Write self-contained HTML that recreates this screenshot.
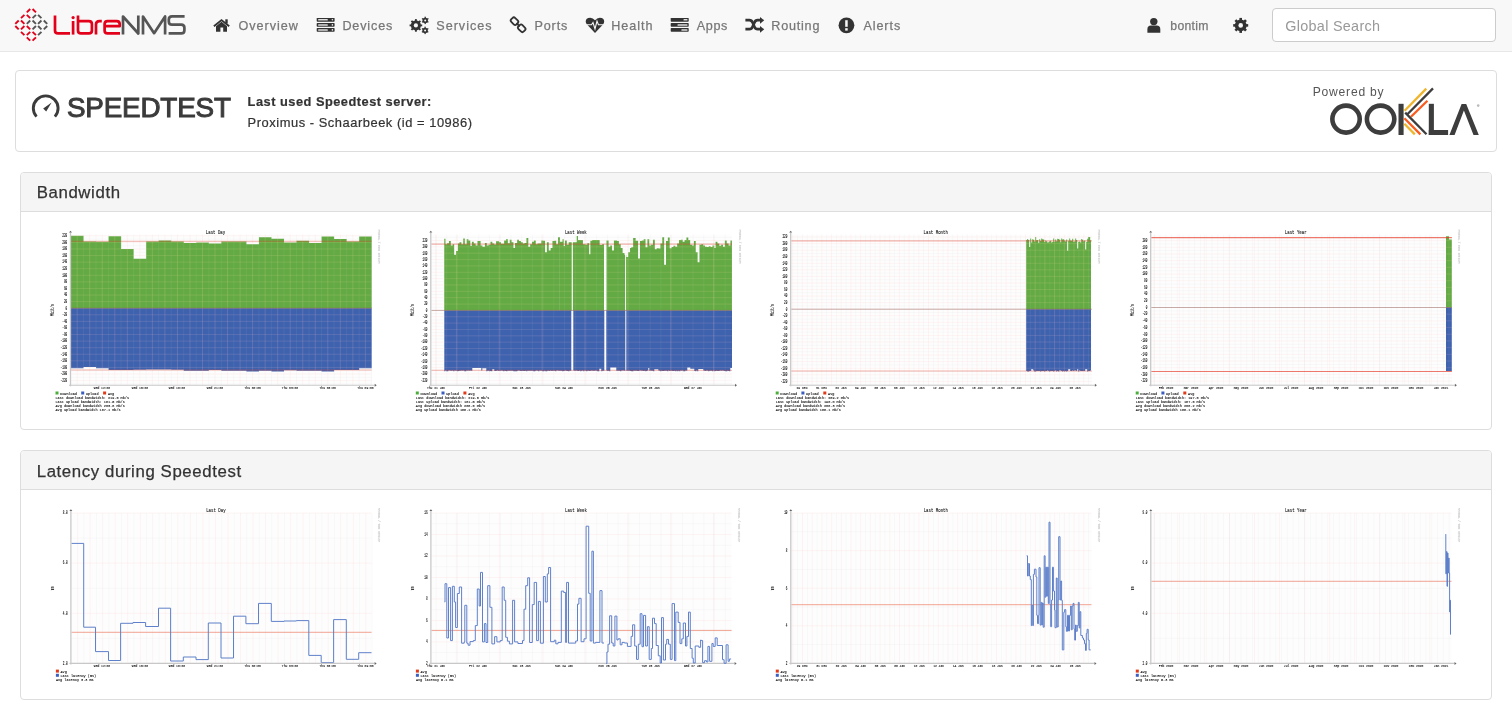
<!DOCTYPE html><html><head><meta charset="utf-8"><title>LibreNMS Speedtest</title><style>
*{margin:0;padding:0;box-sizing:border-box}
html,body{width:1512px;height:726px;overflow:hidden;background:#fff;font-family:"Liberation Sans",sans-serif;color:#333}
.nav{position:absolute;left:0;top:0;width:1512px;height:52px;background:#f8f8f8;border-bottom:1px solid #e7e7e7}
.search{position:absolute;left:1272px;top:8px;width:224px;height:34px;border:1px solid #ccc;border-radius:4px;background:#fff}
.panel{position:absolute;border:1px solid #ddd;border-radius:4px;background:#fff;overflow:hidden}
.ph{position:absolute;left:0;top:0;right:0;height:39px;background:#f5f5f5;border-bottom:1px solid #ddd}
#ov{position:absolute;left:0;top:0;width:1512px;height:726px}
</style></head><body>
<div class="nav"></div><div class="search"></div>
<div class="panel" style="left:15px;top:70px;width:1482px;height:82px"></div>
<div class="panel" style="left:20px;top:172px;width:1472px;height:258px"><div class="ph"></div></div>
<div class="panel" style="left:20px;top:450px;width:1472px;height:250px"><div class="ph"></div></div>
<svg id="ov" width="1512" height="726" viewBox="0 0 1512 726">
<g stroke-width="1.9" stroke-linecap="butt"><line x1="26.8" y1="12.399999999999999" x2="30.2" y2="9.0" stroke="#e2001a"/><line x1="32.55" y1="9.0" x2="35.95" y2="12.399999999999999" stroke="#e2001a"/><line x1="21.0" y1="18.2" x2="24.4" y2="14.8" stroke="#e2001a"/><line x1="26.8" y1="14.8" x2="30.2" y2="18.2" stroke="#e2001a"/><line x1="32.55" y1="18.2" x2="35.95" y2="14.8" stroke="#555"/><line x1="38.05" y1="14.8" x2="41.45" y2="18.2" stroke="#555"/><line x1="15.3" y1="23.9" x2="18.7" y2="20.5" stroke="#e2001a"/><line x1="21.0" y1="20.5" x2="24.4" y2="23.9" stroke="#e2001a"/><line x1="26.8" y1="23.9" x2="30.2" y2="20.5" stroke="#555"/><line x1="32.55" y1="20.5" x2="35.95" y2="23.9" stroke="#555"/><line x1="38.05" y1="23.9" x2="41.45" y2="20.5" stroke="#555"/><line x1="43.8" y1="20.5" x2="47.2" y2="23.9" stroke="#555"/><line x1="15.3" y1="26.0" x2="18.7" y2="29.4" stroke="#e2001a"/><line x1="21.0" y1="29.4" x2="24.4" y2="26.0" stroke="#e2001a"/><line x1="26.8" y1="26.0" x2="30.2" y2="29.4" stroke="#e2001a"/><line x1="32.55" y1="29.4" x2="35.95" y2="26.0" stroke="#555"/><line x1="38.05" y1="26.0" x2="41.45" y2="29.4" stroke="#555"/><line x1="43.8" y1="29.4" x2="47.2" y2="26.0" stroke="#555"/><line x1="21.0" y1="31.8" x2="24.4" y2="35.2" stroke="#e2001a"/><line x1="26.8" y1="35.2" x2="30.2" y2="31.8" stroke="#e2001a"/><line x1="32.55" y1="31.8" x2="35.95" y2="35.2" stroke="#e2001a"/><line x1="38.05" y1="35.2" x2="41.45" y2="31.8" stroke="#555"/><line x1="26.8" y1="37.3" x2="30.2" y2="40.7" stroke="#e2001a"/><line x1="32.55" y1="40.7" x2="35.95" y2="37.3" stroke="#e2001a"/></g>
<g fill="none" stroke-width="2.7" stroke-linecap="butt" stroke-linejoin="round">
<path d="M55 15.5 V30.4 Q55 33.4 58 33.4 H70" stroke="#e2001a"/>
<circle cx="73.1" cy="17.6" r="1.6" fill="#e2001a" stroke="none"/>
<path d="M73.1 21 V34.6" stroke="#e2001a"/>
<path d="M78 15.5 V30.4 Q78 33.4 81 33.4 H88.9 Q91.9 33.4 91.9 30.4 V24.1 Q91.9 21.1 88.9 21.1 H78" stroke="#e2001a"/>
<path d="M96 34.6 V24.6 Q96 21.1 99.5 21.1 H101.8" stroke="#e2001a"/>
<path d="M120 33.4 H107.6 Q104.6 33.4 104.6 30.4 V24.1 Q104.6 21.1 107.6 21.1 H116.7 Q119.7 21.1 119.7 24.1 V26.2 H104.6" stroke="#e2001a"/>
<path d="M123 34.6 V16.5 L138.3 33.5 V15.5" stroke="#555" stroke-linejoin="round"/>
<path d="M143 34.6 V16.5 L154.1 33.2 L165.1 16.5 V34.6" stroke="#555" stroke-linejoin="round"/>
<path d="M184.6 16.4 H172 Q168.8 16.4 168.8 19.6 V21.4 Q168.8 24.6 172 24.6 H181.2 Q184.4 24.6 184.4 27.8 V30.2 Q184.4 33.4 181.2 33.4 H168.6" stroke="#555"/>
</g>
<g fill="#333"><path d="M213.3 25.6 L221.5 18.9 L229.8 25.6 L228.6 27 L221.5 21.2 L214.5 27 Z"/><rect x="225.3" y="19.3" width="2.4" height="4.2"/><path d="M216 26.2 L221.5 21.8 L227 26.2 V31.8 H223.2 V27.4 H220.4 V31.8 H216 Z"/></g>
<rect x="316.7" y="17.9" width="17.900000000000034" height="3.8000000000000007" fill="#333" rx="0.7"/><rect x="318.1" y="19.049999999999997" width="9.699999999999989" height="1.5" fill="#ddd" rx="0.5"/><circle cx="332.4" cy="19.799999999999997" r="0.8" fill="#eee"/><rect x="316.7" y="23.1" width="17.900000000000034" height="3.599999999999998" fill="#333" rx="0.7"/><rect x="318.1" y="24.15" width="9.699999999999989" height="1.5" fill="#ddd" rx="0.5"/><circle cx="332.4" cy="24.9" r="0.8" fill="#eee"/><rect x="316.7" y="28.1" width="17.900000000000034" height="3.599999999999998" fill="#333" rx="0.7"/><rect x="318.1" y="29.15" width="9.699999999999989" height="1.5" fill="#ddd" rx="0.5"/><circle cx="332.4" cy="29.9" r="0.8" fill="#eee"/>
<circle cx="415.9" cy="25.4" r="5.0" fill="#333"/><rect x="414.95" y="19.10" width="1.9" height="6.30" fill="#333" transform="rotate(0.0 415.9 25.4)"/><rect x="414.95" y="19.10" width="1.9" height="6.30" fill="#333" transform="rotate(45.0 415.9 25.4)"/><rect x="414.95" y="19.10" width="1.9" height="6.30" fill="#333" transform="rotate(90.0 415.9 25.4)"/><rect x="414.95" y="19.10" width="1.9" height="6.30" fill="#333" transform="rotate(135.0 415.9 25.4)"/><rect x="414.95" y="19.10" width="1.9" height="6.30" fill="#333" transform="rotate(180.0 415.9 25.4)"/><rect x="414.95" y="19.10" width="1.9" height="6.30" fill="#333" transform="rotate(225.0 415.9 25.4)"/><rect x="414.95" y="19.10" width="1.9" height="6.30" fill="#333" transform="rotate(270.0 415.9 25.4)"/><rect x="414.95" y="19.10" width="1.9" height="6.30" fill="#333" transform="rotate(315.0 415.9 25.4)"/><circle cx="415.9" cy="25.4" r="2.1" fill="#f8f8f8"/>
<circle cx="425.2" cy="20.4" r="2.7" fill="#333"/><rect x="424.55" y="16.70" width="1.3" height="3.70" fill="#333" transform="rotate(0.0 425.2 20.4)"/><rect x="424.55" y="16.70" width="1.3" height="3.70" fill="#333" transform="rotate(60.0 425.2 20.4)"/><rect x="424.55" y="16.70" width="1.3" height="3.70" fill="#333" transform="rotate(120.0 425.2 20.4)"/><rect x="424.55" y="16.70" width="1.3" height="3.70" fill="#333" transform="rotate(180.0 425.2 20.4)"/><rect x="424.55" y="16.70" width="1.3" height="3.70" fill="#333" transform="rotate(240.0 425.2 20.4)"/><rect x="424.55" y="16.70" width="1.3" height="3.70" fill="#333" transform="rotate(300.0 425.2 20.4)"/><circle cx="425.2" cy="20.4" r="1.0" fill="#f8f8f8"/>
<circle cx="425.1" cy="30.4" r="2.7" fill="#333"/><rect x="424.45" y="26.70" width="1.3" height="3.70" fill="#333" transform="rotate(0.0 425.1 30.4)"/><rect x="424.45" y="26.70" width="1.3" height="3.70" fill="#333" transform="rotate(60.0 425.1 30.4)"/><rect x="424.45" y="26.70" width="1.3" height="3.70" fill="#333" transform="rotate(120.0 425.1 30.4)"/><rect x="424.45" y="26.70" width="1.3" height="3.70" fill="#333" transform="rotate(180.0 425.1 30.4)"/><rect x="424.45" y="26.70" width="1.3" height="3.70" fill="#333" transform="rotate(240.0 425.1 30.4)"/><rect x="424.45" y="26.70" width="1.3" height="3.70" fill="#333" transform="rotate(300.0 425.1 30.4)"/><circle cx="425.1" cy="30.4" r="1.0" fill="#f8f8f8"/>
<g fill="none" stroke="#333" stroke-width="1.8"><rect x="511.7" y="17.5" width="5.6" height="7.4" rx="2" transform="rotate(-45 514.5 21.2)"/><rect x="518.9" y="24.6" width="5.6" height="7.4" rx="2" transform="rotate(-45 521.7 28.3)"/><path d="M516.5 23.2 L519.7 26.3"/></g>
<path d="M595 32.9 L587 24.6 Q585.7 23 585.7 21.5 Q585.7 17.7 590.2 17.7 Q593 17.7 595 20.3 Q597 17.7 599.8 17.7 Q604.2 17.7 604.2 21.5 Q604.2 23 603 24.6 Z" fill="#333"/>
<path d="M586.5 24.8 H591.5 L593 22.5 L595 29 L597 21 L598.4 24.8 H603.5" fill="none" stroke="#f8f8f8" stroke-width="1.1"/>
<rect x="670.7" y="17.9" width="18.0" height="3.8000000000000007" fill="#333" rx="0.7"/><rect x="683.5" y="19.049999999999997" width="4.0" height="1.5" fill="#ddd" rx="0.5"/><rect x="670.7" y="23.1" width="18.0" height="3.599999999999998" fill="#333" rx="0.7"/><rect x="677.5" y="24.15" width="10.0" height="1.5" fill="#ddd" rx="0.5"/><rect x="670.7" y="28.1" width="18.0" height="3.599999999999998" fill="#333" rx="0.7"/><rect x="681.4" y="29.15" width="6.100000000000023" height="1.5" fill="#ddd" rx="0.5"/>
<g fill="none" stroke="#333" stroke-width="2.7"><path d="M745.4 20.2 H749.4 Q751.6 20.2 752.6 22.6 L754.4 26.8 Q755.4 29.2 757.6 29.2 H761"/><path d="M745.4 29.2 H749.4 Q751.6 29.2 752.6 26.8 L754.4 22.6 Q755.4 20.2 757.6 20.2 H761"/></g>
<g fill="#333"><path d="M760 16.9 L764.2 20.3 L760 23.8 Z"/><path d="M760 25.9 L764.2 29.3 L760 32.8 Z"/></g>
<circle cx="846.45" cy="25.3" r="7.9" fill="#333"/>
<rect x="845.2" y="20.2" width="2.5" height="6.6" fill="#f8f8f8"/><rect x="845.2" y="28.2" width="2.5" height="2.4" fill="#f8f8f8"/>
<text x="238.4" y="29.8" font-family="Liberation Sans" font-size="12.6" fill="#777" stroke="#777" stroke-width="0.25" textLength="59.5" lengthAdjust="spacing">Overview</text>
<text x="342.4" y="29.8" font-family="Liberation Sans" font-size="12.6" fill="#777" stroke="#777" stroke-width="0.25" textLength="49.9" lengthAdjust="spacing">Devices</text>
<text x="436.3" y="29.8" font-family="Liberation Sans" font-size="12.6" fill="#777" stroke="#777" stroke-width="0.25" textLength="55.2" lengthAdjust="spacing">Services</text>
<text x="534.5" y="29.8" font-family="Liberation Sans" font-size="12.6" fill="#777" stroke="#777" stroke-width="0.25" textLength="32.8" lengthAdjust="spacing">Ports</text>
<text x="611.3" y="29.8" font-family="Liberation Sans" font-size="12.6" fill="#777" stroke="#777" stroke-width="0.25" textLength="41.1" lengthAdjust="spacing">Health</text>
<text x="696.7" y="29.8" font-family="Liberation Sans" font-size="12.6" fill="#777" stroke="#777" stroke-width="0.25" textLength="30.7" lengthAdjust="spacing">Apps</text>
<text x="771.3" y="29.8" font-family="Liberation Sans" font-size="12.6" fill="#777" stroke="#777" stroke-width="0.25" textLength="48.1" lengthAdjust="spacing">Routing</text>
<text x="863.4" y="29.8" font-family="Liberation Sans" font-size="12.6" fill="#777" stroke="#777" stroke-width="0.25" textLength="36.8" lengthAdjust="spacing">Alerts</text>
<circle cx="1153.8" cy="21.6" r="3.7" fill="#333"/>
<path d="M1147.4 32.8 V29.3 Q1147.4 25.6 1151 25.6 H1156.7 Q1160.3 25.6 1160.3 29.3 V32.8 Z" fill="#333"/>
<text x="1170.3" y="29.8" font-family="Liberation Sans" font-size="12.2" fill="#777" stroke="#777" stroke-width="0.25" textLength="38.2" lengthAdjust="spacing">bontim</text>
<circle cx="1240.7" cy="25.4" r="5.9" fill="#333"/><rect x="1239.40" y="17.90" width="2.6" height="7.50" fill="#333" transform="rotate(0.0 1240.7 25.4)"/><rect x="1239.40" y="17.90" width="2.6" height="7.50" fill="#333" transform="rotate(45.0 1240.7 25.4)"/><rect x="1239.40" y="17.90" width="2.6" height="7.50" fill="#333" transform="rotate(90.0 1240.7 25.4)"/><rect x="1239.40" y="17.90" width="2.6" height="7.50" fill="#333" transform="rotate(135.0 1240.7 25.4)"/><rect x="1239.40" y="17.90" width="2.6" height="7.50" fill="#333" transform="rotate(180.0 1240.7 25.4)"/><rect x="1239.40" y="17.90" width="2.6" height="7.50" fill="#333" transform="rotate(225.0 1240.7 25.4)"/><rect x="1239.40" y="17.90" width="2.6" height="7.50" fill="#333" transform="rotate(270.0 1240.7 25.4)"/><rect x="1239.40" y="17.90" width="2.6" height="7.50" fill="#333" transform="rotate(315.0 1240.7 25.4)"/><circle cx="1240.7" cy="25.4" r="2.3" fill="#f8f8f8"/>
<text x="1285.3" y="30.8" font-family="Liberation Sans" font-size="14.4" fill="#999" textLength="94.7" lengthAdjust="spacing">Global Search</text>
<path d="M36.5 116.6 A12.4 12.4 0 1 1 54.9 116.6" fill="none" stroke="#3b3b3b" stroke-width="2.9" stroke-linecap="butt"/>
<path d="M43.2 108.6 L51.6 102.4 L46.2 111.4 Z" fill="#3b3b3b"/>
<text x="66.9" y="117" font-family="Liberation Sans" font-size="27.8" font-weight="normal" fill="#3b3b3b" stroke="#3b3b3b" stroke-width="1.0" textLength="164.0" lengthAdjust="spacing">SPEEDTEST</text>
<text x="247.6" y="105.5" font-family="Liberation Sans" font-size="12.8" font-weight="bold" fill="#333" stroke="#333" stroke-width="0.2" textLength="183.7" lengthAdjust="spacing">Last used Speedtest server:</text>
<text x="247.6" y="126.9" font-family="Liberation Sans" font-size="12.9" fill="#333" stroke="#333" stroke-width="0.2" textLength="224.4" lengthAdjust="spacing">Proximus - Schaarbeek (id = 10986)</text>
<text x="1312.7" y="96.4" font-family="Liberation Sans" font-size="12.1" fill="#555" textLength="70.9" lengthAdjust="spacing">Powered by</text>
<g fill="none" stroke-width="4.6"><ellipse cx="1346.05" cy="119.1" rx="13.7" ry="13.5" stroke="#3d3d3d"/><ellipse cx="1380.6" cy="119.1" rx="13.7" ry="13.5" stroke="#3d3d3d"/></g>
<rect x="1398.5" y="103.8" width="5.1" height="31.2" fill="#3d3d3d"/>
<rect x="1428.8" y="103.8" width="5.1" height="31.2" fill="#3d3d3d"/><rect x="1428.8" y="130" width="19.3" height="5" fill="#3d3d3d"/>
<path d="M1449.4 135 L1461.6 104 H1466.2 L1478.8 135 H1473.5 L1463.9 110.6 L1454.6 135 Z" fill="#3d3d3d"/>
<circle cx="1478.2" cy="105.6" r="1.3" fill="#bbb"/>
<g stroke-width="2.3" stroke-linecap="butt"><line x1="1404.6" y1="110.8" x2="1426.3" y2="88.6" stroke="#efb52d"/><line x1="1407.4" y1="114.2" x2="1433" y2="88.4" stroke="#3d3d3d"/><line x1="1411.0" y1="116.8" x2="1427.4" y2="100.8" stroke="#fa5b1e"/><line x1="1405.2" y1="112.6" x2="1426.5" y2="134.2" stroke="#3d3d3d"/><line x1="1404.4" y1="118.2" x2="1420.4" y2="134.4" stroke="#fa5b1e"/><line x1="1404.4" y1="123.8" x2="1414.8" y2="134.4" stroke="#efb52d"/></g>
<text x="36.7" y="197.8" font-family="Liberation Sans" font-size="16.8" fill="#333" stroke="#333" stroke-width="0.25" textLength="83.3" lengthAdjust="spacing">Bandwidth</text>
<text x="36.7" y="477" font-family="Liberation Sans" font-size="16.8" fill="#333" stroke="#333" stroke-width="0.25" textLength="204.4" lengthAdjust="spacing">Latency during Speedtest</text>
<rect x="71.0" y="234.5" width="300.7" height="150.8" fill="#fdfdfd"/><line x1="83.47" y1="234.5" x2="83.47" y2="385.3" stroke="rgba(0,0,0,0.03)" stroke-width="0.8"/><line x1="96.00" y1="234.5" x2="96.00" y2="385.3" stroke="rgba(0,0,0,0.03)" stroke-width="0.8"/><line x1="108.53" y1="234.5" x2="108.53" y2="385.3" stroke="rgba(0,0,0,0.03)" stroke-width="0.8"/><line x1="121.06" y1="234.5" x2="121.06" y2="385.3" stroke="rgba(0,0,0,0.03)" stroke-width="0.8"/><line x1="133.59" y1="234.5" x2="133.59" y2="385.3" stroke="rgba(0,0,0,0.03)" stroke-width="0.8"/><line x1="146.12" y1="234.5" x2="146.12" y2="385.3" stroke="rgba(0,0,0,0.03)" stroke-width="0.8"/><line x1="158.65" y1="234.5" x2="158.65" y2="385.3" stroke="rgba(0,0,0,0.03)" stroke-width="0.8"/><line x1="171.18" y1="234.5" x2="171.18" y2="385.3" stroke="rgba(0,0,0,0.03)" stroke-width="0.8"/><line x1="183.71" y1="234.5" x2="183.71" y2="385.3" stroke="rgba(0,0,0,0.03)" stroke-width="0.8"/><line x1="196.24" y1="234.5" x2="196.24" y2="385.3" stroke="rgba(0,0,0,0.03)" stroke-width="0.8"/><line x1="208.77" y1="234.5" x2="208.77" y2="385.3" stroke="rgba(0,0,0,0.03)" stroke-width="0.8"/><line x1="221.30" y1="234.5" x2="221.30" y2="385.3" stroke="rgba(0,0,0,0.03)" stroke-width="0.8"/><line x1="233.83" y1="234.5" x2="233.83" y2="385.3" stroke="rgba(0,0,0,0.03)" stroke-width="0.8"/><line x1="246.36" y1="234.5" x2="246.36" y2="385.3" stroke="rgba(0,0,0,0.03)" stroke-width="0.8"/><line x1="258.89" y1="234.5" x2="258.89" y2="385.3" stroke="rgba(0,0,0,0.03)" stroke-width="0.8"/><line x1="271.42" y1="234.5" x2="271.42" y2="385.3" stroke="rgba(0,0,0,0.03)" stroke-width="0.8"/><line x1="283.95" y1="234.5" x2="283.95" y2="385.3" stroke="rgba(0,0,0,0.03)" stroke-width="0.8"/><line x1="296.48" y1="234.5" x2="296.48" y2="385.3" stroke="rgba(0,0,0,0.03)" stroke-width="0.8"/><line x1="309.01" y1="234.5" x2="309.01" y2="385.3" stroke="rgba(0,0,0,0.03)" stroke-width="0.8"/><line x1="321.54" y1="234.5" x2="321.54" y2="385.3" stroke="rgba(0,0,0,0.03)" stroke-width="0.8"/><line x1="334.07" y1="234.5" x2="334.07" y2="385.3" stroke="rgba(0,0,0,0.03)" stroke-width="0.8"/><line x1="346.60" y1="234.5" x2="346.60" y2="385.3" stroke="rgba(0,0,0,0.03)" stroke-width="0.8"/><line x1="359.13" y1="234.5" x2="359.13" y2="385.3" stroke="rgba(0,0,0,0.03)" stroke-width="0.8"/><line x1="371.66" y1="234.5" x2="371.66" y2="385.3" stroke="rgba(0,0,0,0.03)" stroke-width="0.8"/><line x1="71.0" y1="383.87" x2="371.7" y2="383.87" stroke="rgba(0,0,0,0.03)" stroke-width="0.8"/><line x1="71.0" y1="377.29" x2="371.7" y2="377.29" stroke="rgba(0,0,0,0.03)" stroke-width="0.8"/><line x1="71.0" y1="370.71" x2="371.7" y2="370.71" stroke="rgba(0,0,0,0.03)" stroke-width="0.8"/><line x1="71.0" y1="364.13" x2="371.7" y2="364.13" stroke="rgba(0,0,0,0.03)" stroke-width="0.8"/><line x1="71.0" y1="357.55" x2="371.7" y2="357.55" stroke="rgba(0,0,0,0.03)" stroke-width="0.8"/><line x1="71.0" y1="350.97" x2="371.7" y2="350.97" stroke="rgba(0,0,0,0.03)" stroke-width="0.8"/><line x1="71.0" y1="344.39" x2="371.7" y2="344.39" stroke="rgba(0,0,0,0.03)" stroke-width="0.8"/><line x1="71.0" y1="337.81" x2="371.7" y2="337.81" stroke="rgba(0,0,0,0.03)" stroke-width="0.8"/><line x1="71.0" y1="331.23" x2="371.7" y2="331.23" stroke="rgba(0,0,0,0.03)" stroke-width="0.8"/><line x1="71.0" y1="324.65" x2="371.7" y2="324.65" stroke="rgba(0,0,0,0.03)" stroke-width="0.8"/><line x1="71.0" y1="318.07" x2="371.7" y2="318.07" stroke="rgba(0,0,0,0.03)" stroke-width="0.8"/><line x1="71.0" y1="311.49" x2="371.7" y2="311.49" stroke="rgba(0,0,0,0.03)" stroke-width="0.8"/><line x1="71.0" y1="304.91" x2="371.7" y2="304.91" stroke="rgba(0,0,0,0.03)" stroke-width="0.8"/><line x1="71.0" y1="298.33" x2="371.7" y2="298.33" stroke="rgba(0,0,0,0.03)" stroke-width="0.8"/><line x1="71.0" y1="291.75" x2="371.7" y2="291.75" stroke="rgba(0,0,0,0.03)" stroke-width="0.8"/><line x1="71.0" y1="285.17" x2="371.7" y2="285.17" stroke="rgba(0,0,0,0.03)" stroke-width="0.8"/><line x1="71.0" y1="278.59" x2="371.7" y2="278.59" stroke="rgba(0,0,0,0.03)" stroke-width="0.8"/><line x1="71.0" y1="272.01" x2="371.7" y2="272.01" stroke="rgba(0,0,0,0.03)" stroke-width="0.8"/><line x1="71.0" y1="265.43" x2="371.7" y2="265.43" stroke="rgba(0,0,0,0.03)" stroke-width="0.8"/><line x1="71.0" y1="258.85" x2="371.7" y2="258.85" stroke="rgba(0,0,0,0.03)" stroke-width="0.8"/><line x1="71.0" y1="252.27" x2="371.7" y2="252.27" stroke="rgba(0,0,0,0.03)" stroke-width="0.8"/><line x1="71.0" y1="245.69" x2="371.7" y2="245.69" stroke="rgba(0,0,0,0.03)" stroke-width="0.8"/><line x1="71.0" y1="239.11" x2="371.7" y2="239.11" stroke="rgba(0,0,0,0.03)" stroke-width="0.8"/><line x1="77.20" y1="234.5" x2="77.20" y2="385.3" stroke="rgba(255,0,0,0.055)" stroke-width="0.8"/><line x1="89.73" y1="234.5" x2="89.73" y2="385.3" stroke="rgba(255,0,0,0.055)" stroke-width="0.8"/><line x1="102.26" y1="234.5" x2="102.26" y2="385.3" stroke="rgba(255,0,0,0.055)" stroke-width="0.8"/><line x1="114.79" y1="234.5" x2="114.79" y2="385.3" stroke="rgba(255,0,0,0.055)" stroke-width="0.8"/><line x1="127.32" y1="234.5" x2="127.32" y2="385.3" stroke="rgba(255,0,0,0.055)" stroke-width="0.8"/><line x1="139.85" y1="234.5" x2="139.85" y2="385.3" stroke="rgba(255,0,0,0.055)" stroke-width="0.8"/><line x1="152.38" y1="234.5" x2="152.38" y2="385.3" stroke="rgba(255,0,0,0.055)" stroke-width="0.8"/><line x1="164.91" y1="234.5" x2="164.91" y2="385.3" stroke="rgba(255,0,0,0.055)" stroke-width="0.8"/><line x1="177.44" y1="234.5" x2="177.44" y2="385.3" stroke="rgba(255,0,0,0.055)" stroke-width="0.8"/><line x1="189.97" y1="234.5" x2="189.97" y2="385.3" stroke="rgba(255,0,0,0.055)" stroke-width="0.8"/><line x1="202.50" y1="234.5" x2="202.50" y2="385.3" stroke="rgba(255,0,0,0.055)" stroke-width="0.8"/><line x1="215.03" y1="234.5" x2="215.03" y2="385.3" stroke="rgba(255,0,0,0.055)" stroke-width="0.8"/><line x1="227.56" y1="234.5" x2="227.56" y2="385.3" stroke="rgba(255,0,0,0.055)" stroke-width="0.8"/><line x1="240.09" y1="234.5" x2="240.09" y2="385.3" stroke="rgba(255,0,0,0.055)" stroke-width="0.8"/><line x1="252.62" y1="234.5" x2="252.62" y2="385.3" stroke="rgba(255,0,0,0.055)" stroke-width="0.8"/><line x1="265.15" y1="234.5" x2="265.15" y2="385.3" stroke="rgba(255,0,0,0.055)" stroke-width="0.8"/><line x1="277.68" y1="234.5" x2="277.68" y2="385.3" stroke="rgba(255,0,0,0.055)" stroke-width="0.8"/><line x1="290.21" y1="234.5" x2="290.21" y2="385.3" stroke="rgba(255,0,0,0.055)" stroke-width="0.8"/><line x1="302.74" y1="234.5" x2="302.74" y2="385.3" stroke="rgba(255,0,0,0.055)" stroke-width="0.8"/><line x1="315.27" y1="234.5" x2="315.27" y2="385.3" stroke="rgba(255,0,0,0.055)" stroke-width="0.8"/><line x1="327.80" y1="234.5" x2="327.80" y2="385.3" stroke="rgba(255,0,0,0.055)" stroke-width="0.8"/><line x1="340.33" y1="234.5" x2="340.33" y2="385.3" stroke="rgba(255,0,0,0.055)" stroke-width="0.8"/><line x1="352.86" y1="234.5" x2="352.86" y2="385.3" stroke="rgba(255,0,0,0.055)" stroke-width="0.8"/><line x1="365.39" y1="234.5" x2="365.39" y2="385.3" stroke="rgba(255,0,0,0.055)" stroke-width="0.8"/><line x1="71.0" y1="380.58" x2="371.7" y2="380.58" stroke="rgba(255,0,0,0.055)" stroke-width="0.8"/><line x1="71.0" y1="374.00" x2="371.7" y2="374.00" stroke="rgba(255,0,0,0.055)" stroke-width="0.8"/><line x1="71.0" y1="367.42" x2="371.7" y2="367.42" stroke="rgba(255,0,0,0.055)" stroke-width="0.8"/><line x1="71.0" y1="360.84" x2="371.7" y2="360.84" stroke="rgba(255,0,0,0.055)" stroke-width="0.8"/><line x1="71.0" y1="354.26" x2="371.7" y2="354.26" stroke="rgba(255,0,0,0.055)" stroke-width="0.8"/><line x1="71.0" y1="347.68" x2="371.7" y2="347.68" stroke="rgba(255,0,0,0.055)" stroke-width="0.8"/><line x1="71.0" y1="341.10" x2="371.7" y2="341.10" stroke="rgba(255,0,0,0.055)" stroke-width="0.8"/><line x1="71.0" y1="334.52" x2="371.7" y2="334.52" stroke="rgba(255,0,0,0.055)" stroke-width="0.8"/><line x1="71.0" y1="327.94" x2="371.7" y2="327.94" stroke="rgba(255,0,0,0.055)" stroke-width="0.8"/><line x1="71.0" y1="321.36" x2="371.7" y2="321.36" stroke="rgba(255,0,0,0.055)" stroke-width="0.8"/><line x1="71.0" y1="314.78" x2="371.7" y2="314.78" stroke="rgba(255,0,0,0.055)" stroke-width="0.8"/><line x1="71.0" y1="308.20" x2="371.7" y2="308.20" stroke="rgba(255,0,0,0.055)" stroke-width="0.8"/><line x1="71.0" y1="301.62" x2="371.7" y2="301.62" stroke="rgba(255,0,0,0.055)" stroke-width="0.8"/><line x1="71.0" y1="295.04" x2="371.7" y2="295.04" stroke="rgba(255,0,0,0.055)" stroke-width="0.8"/><line x1="71.0" y1="288.46" x2="371.7" y2="288.46" stroke="rgba(255,0,0,0.055)" stroke-width="0.8"/><line x1="71.0" y1="281.88" x2="371.7" y2="281.88" stroke="rgba(255,0,0,0.055)" stroke-width="0.8"/><line x1="71.0" y1="275.30" x2="371.7" y2="275.30" stroke="rgba(255,0,0,0.055)" stroke-width="0.8"/><line x1="71.0" y1="268.72" x2="371.7" y2="268.72" stroke="rgba(255,0,0,0.055)" stroke-width="0.8"/><line x1="71.0" y1="262.14" x2="371.7" y2="262.14" stroke="rgba(255,0,0,0.055)" stroke-width="0.8"/><line x1="71.0" y1="255.56" x2="371.7" y2="255.56" stroke="rgba(255,0,0,0.055)" stroke-width="0.8"/><line x1="71.0" y1="248.98" x2="371.7" y2="248.98" stroke="rgba(255,0,0,0.055)" stroke-width="0.8"/><line x1="71.0" y1="242.40" x2="371.7" y2="242.40" stroke="rgba(255,0,0,0.055)" stroke-width="0.8"/><line x1="71.0" y1="235.82" x2="371.7" y2="235.82" stroke="rgba(255,0,0,0.055)" stroke-width="0.8"/><path d="M71.00 308.20 L71.00 235.82 L83.53 235.82 L83.53 241.41 L96.06 241.41 L96.06 241.74 L108.59 241.74 L108.59 236.15 L121.12 236.15 L121.12 248.98 L133.65 248.98 L133.65 258.85 L146.18 258.85 L146.18 241.41 L158.70 241.41 L158.70 240.43 L171.23 240.43 L171.23 241.41 L183.76 241.41 L183.76 243.06 L196.29 243.06 L196.29 242.40 L208.82 242.40 L208.82 243.39 L221.35 243.39 L221.35 241.41 L233.88 241.41 L233.88 241.41 L246.41 241.41 L246.41 244.37 L258.94 244.37 L258.94 237.14 L271.47 237.14 L271.47 238.78 L284.00 238.78 L284.00 242.40 L296.52 242.40 L296.52 240.75 L309.05 240.75 L309.05 243.06 L321.58 243.06 L321.58 236.48 L334.11 236.48 L334.11 239.11 L346.64 239.11 L346.64 241.41 L359.17 241.41 L359.17 236.48 L371.70 236.48 L371.70 308.20 Z" fill="#63aa44"/><path d="M71.00 308.20 L71.00 368.20 L83.53 368.20 L83.53 367.00 L96.06 367.00 L96.06 368.20 L108.59 368.20 L108.59 370.00 L121.12 370.00 L121.12 370.00 L133.65 370.00 L133.65 369.80 L146.18 369.80 L146.18 369.40 L158.70 369.40 L158.70 369.40 L171.23 369.40 L171.23 369.80 L183.76 369.80 L183.76 370.70 L196.29 370.70 L196.29 370.70 L208.82 370.70 L208.82 370.00 L221.35 370.00 L221.35 370.70 L233.88 370.70 L233.88 370.70 L246.41 370.70 L246.41 371.50 L258.94 371.50 L258.94 370.70 L271.47 370.70 L271.47 371.50 L284.00 371.50 L284.00 370.30 L296.52 370.30 L296.52 370.70 L309.05 370.70 L309.05 370.70 L321.58 370.70 L321.58 371.50 L334.11 371.50 L334.11 370.00 L346.64 370.00 L346.64 370.00 L359.17 370.00 L359.17 368.20 L371.70 368.20 L371.70 308.20 Z" fill="#3e62ad"/><g style="mix-blend-mode:screen"><line x1="77.20" y1="234.5" x2="77.20" y2="385.3" stroke="rgba(255,150,120,0.22)" stroke-width="0.8"/><line x1="89.73" y1="234.5" x2="89.73" y2="385.3" stroke="rgba(255,150,120,0.22)" stroke-width="0.8"/><line x1="102.26" y1="234.5" x2="102.26" y2="385.3" stroke="rgba(255,150,120,0.22)" stroke-width="0.8"/><line x1="114.79" y1="234.5" x2="114.79" y2="385.3" stroke="rgba(255,150,120,0.22)" stroke-width="0.8"/><line x1="127.32" y1="234.5" x2="127.32" y2="385.3" stroke="rgba(255,150,120,0.22)" stroke-width="0.8"/><line x1="139.85" y1="234.5" x2="139.85" y2="385.3" stroke="rgba(255,150,120,0.22)" stroke-width="0.8"/><line x1="152.38" y1="234.5" x2="152.38" y2="385.3" stroke="rgba(255,150,120,0.22)" stroke-width="0.8"/><line x1="164.91" y1="234.5" x2="164.91" y2="385.3" stroke="rgba(255,150,120,0.22)" stroke-width="0.8"/><line x1="177.44" y1="234.5" x2="177.44" y2="385.3" stroke="rgba(255,150,120,0.22)" stroke-width="0.8"/><line x1="189.97" y1="234.5" x2="189.97" y2="385.3" stroke="rgba(255,150,120,0.22)" stroke-width="0.8"/><line x1="202.50" y1="234.5" x2="202.50" y2="385.3" stroke="rgba(255,150,120,0.22)" stroke-width="0.8"/><line x1="215.03" y1="234.5" x2="215.03" y2="385.3" stroke="rgba(255,150,120,0.22)" stroke-width="0.8"/><line x1="227.56" y1="234.5" x2="227.56" y2="385.3" stroke="rgba(255,150,120,0.22)" stroke-width="0.8"/><line x1="240.09" y1="234.5" x2="240.09" y2="385.3" stroke="rgba(255,150,120,0.22)" stroke-width="0.8"/><line x1="252.62" y1="234.5" x2="252.62" y2="385.3" stroke="rgba(255,150,120,0.22)" stroke-width="0.8"/><line x1="265.15" y1="234.5" x2="265.15" y2="385.3" stroke="rgba(255,150,120,0.22)" stroke-width="0.8"/><line x1="277.68" y1="234.5" x2="277.68" y2="385.3" stroke="rgba(255,150,120,0.22)" stroke-width="0.8"/><line x1="290.21" y1="234.5" x2="290.21" y2="385.3" stroke="rgba(255,150,120,0.22)" stroke-width="0.8"/><line x1="302.74" y1="234.5" x2="302.74" y2="385.3" stroke="rgba(255,150,120,0.22)" stroke-width="0.8"/><line x1="315.27" y1="234.5" x2="315.27" y2="385.3" stroke="rgba(255,150,120,0.22)" stroke-width="0.8"/><line x1="327.80" y1="234.5" x2="327.80" y2="385.3" stroke="rgba(255,150,120,0.22)" stroke-width="0.8"/><line x1="340.33" y1="234.5" x2="340.33" y2="385.3" stroke="rgba(255,150,120,0.22)" stroke-width="0.8"/><line x1="352.86" y1="234.5" x2="352.86" y2="385.3" stroke="rgba(255,150,120,0.22)" stroke-width="0.8"/><line x1="365.39" y1="234.5" x2="365.39" y2="385.3" stroke="rgba(255,150,120,0.22)" stroke-width="0.8"/><line x1="71.0" y1="380.58" x2="371.7" y2="380.58" stroke="rgba(255,150,120,0.18)" stroke-width="0.8"/><line x1="71.0" y1="374.00" x2="371.7" y2="374.00" stroke="rgba(255,150,120,0.18)" stroke-width="0.8"/><line x1="71.0" y1="367.42" x2="371.7" y2="367.42" stroke="rgba(255,150,120,0.18)" stroke-width="0.8"/><line x1="71.0" y1="360.84" x2="371.7" y2="360.84" stroke="rgba(255,150,120,0.18)" stroke-width="0.8"/><line x1="71.0" y1="354.26" x2="371.7" y2="354.26" stroke="rgba(255,150,120,0.18)" stroke-width="0.8"/><line x1="71.0" y1="347.68" x2="371.7" y2="347.68" stroke="rgba(255,150,120,0.18)" stroke-width="0.8"/><line x1="71.0" y1="341.10" x2="371.7" y2="341.10" stroke="rgba(255,150,120,0.18)" stroke-width="0.8"/><line x1="71.0" y1="334.52" x2="371.7" y2="334.52" stroke="rgba(255,150,120,0.18)" stroke-width="0.8"/><line x1="71.0" y1="327.94" x2="371.7" y2="327.94" stroke="rgba(255,150,120,0.18)" stroke-width="0.8"/><line x1="71.0" y1="321.36" x2="371.7" y2="321.36" stroke="rgba(255,150,120,0.18)" stroke-width="0.8"/><line x1="71.0" y1="314.78" x2="371.7" y2="314.78" stroke="rgba(255,150,120,0.18)" stroke-width="0.8"/><line x1="71.0" y1="308.20" x2="371.7" y2="308.20" stroke="rgba(255,150,120,0.18)" stroke-width="0.8"/><line x1="71.0" y1="301.62" x2="371.7" y2="301.62" stroke="rgba(255,150,120,0.18)" stroke-width="0.8"/><line x1="71.0" y1="295.04" x2="371.7" y2="295.04" stroke="rgba(255,150,120,0.18)" stroke-width="0.8"/><line x1="71.0" y1="288.46" x2="371.7" y2="288.46" stroke="rgba(255,150,120,0.18)" stroke-width="0.8"/><line x1="71.0" y1="281.88" x2="371.7" y2="281.88" stroke="rgba(255,150,120,0.18)" stroke-width="0.8"/><line x1="71.0" y1="275.30" x2="371.7" y2="275.30" stroke="rgba(255,150,120,0.18)" stroke-width="0.8"/><line x1="71.0" y1="268.72" x2="371.7" y2="268.72" stroke="rgba(255,150,120,0.18)" stroke-width="0.8"/><line x1="71.0" y1="262.14" x2="371.7" y2="262.14" stroke="rgba(255,150,120,0.18)" stroke-width="0.8"/><line x1="71.0" y1="255.56" x2="371.7" y2="255.56" stroke="rgba(255,150,120,0.18)" stroke-width="0.8"/><line x1="71.0" y1="248.98" x2="371.7" y2="248.98" stroke="rgba(255,150,120,0.18)" stroke-width="0.8"/><line x1="71.0" y1="242.40" x2="371.7" y2="242.40" stroke="rgba(255,150,120,0.18)" stroke-width="0.8"/><line x1="71.0" y1="235.82" x2="371.7" y2="235.82" stroke="rgba(255,150,120,0.18)" stroke-width="0.8"/><line x1="83.47" y1="234.5" x2="83.47" y2="385.3" stroke="rgba(255,255,255,0.07)" stroke-width="0.8"/><line x1="96.00" y1="234.5" x2="96.00" y2="385.3" stroke="rgba(255,255,255,0.07)" stroke-width="0.8"/><line x1="108.53" y1="234.5" x2="108.53" y2="385.3" stroke="rgba(255,255,255,0.07)" stroke-width="0.8"/><line x1="121.06" y1="234.5" x2="121.06" y2="385.3" stroke="rgba(255,255,255,0.07)" stroke-width="0.8"/><line x1="133.59" y1="234.5" x2="133.59" y2="385.3" stroke="rgba(255,255,255,0.07)" stroke-width="0.8"/><line x1="146.12" y1="234.5" x2="146.12" y2="385.3" stroke="rgba(255,255,255,0.07)" stroke-width="0.8"/><line x1="158.65" y1="234.5" x2="158.65" y2="385.3" stroke="rgba(255,255,255,0.07)" stroke-width="0.8"/><line x1="171.18" y1="234.5" x2="171.18" y2="385.3" stroke="rgba(255,255,255,0.07)" stroke-width="0.8"/><line x1="183.71" y1="234.5" x2="183.71" y2="385.3" stroke="rgba(255,255,255,0.07)" stroke-width="0.8"/><line x1="196.24" y1="234.5" x2="196.24" y2="385.3" stroke="rgba(255,255,255,0.07)" stroke-width="0.8"/><line x1="208.77" y1="234.5" x2="208.77" y2="385.3" stroke="rgba(255,255,255,0.07)" stroke-width="0.8"/><line x1="221.30" y1="234.5" x2="221.30" y2="385.3" stroke="rgba(255,255,255,0.07)" stroke-width="0.8"/><line x1="233.83" y1="234.5" x2="233.83" y2="385.3" stroke="rgba(255,255,255,0.07)" stroke-width="0.8"/><line x1="246.36" y1="234.5" x2="246.36" y2="385.3" stroke="rgba(255,255,255,0.07)" stroke-width="0.8"/><line x1="258.89" y1="234.5" x2="258.89" y2="385.3" stroke="rgba(255,255,255,0.07)" stroke-width="0.8"/><line x1="271.42" y1="234.5" x2="271.42" y2="385.3" stroke="rgba(255,255,255,0.07)" stroke-width="0.8"/><line x1="283.95" y1="234.5" x2="283.95" y2="385.3" stroke="rgba(255,255,255,0.07)" stroke-width="0.8"/><line x1="296.48" y1="234.5" x2="296.48" y2="385.3" stroke="rgba(255,255,255,0.07)" stroke-width="0.8"/><line x1="309.01" y1="234.5" x2="309.01" y2="385.3" stroke="rgba(255,255,255,0.07)" stroke-width="0.8"/><line x1="321.54" y1="234.5" x2="321.54" y2="385.3" stroke="rgba(255,255,255,0.07)" stroke-width="0.8"/><line x1="334.07" y1="234.5" x2="334.07" y2="385.3" stroke="rgba(255,255,255,0.07)" stroke-width="0.8"/><line x1="346.60" y1="234.5" x2="346.60" y2="385.3" stroke="rgba(255,255,255,0.07)" stroke-width="0.8"/><line x1="359.13" y1="234.5" x2="359.13" y2="385.3" stroke="rgba(255,255,255,0.07)" stroke-width="0.8"/><line x1="371.66" y1="234.5" x2="371.66" y2="385.3" stroke="rgba(255,255,255,0.07)" stroke-width="0.8"/></g><line x1="71.0" y1="308.20" x2="371.7" y2="308.20" stroke="rgba(120,60,50,0.45)" stroke-width="0.9"/><line x1="71.0" y1="241.15" x2="371.7" y2="241.15" stroke="rgba(225,60,40,0.4)" stroke-width="1.05"/><line x1="71.0" y1="369.90" x2="371.7" y2="369.90" stroke="rgba(225,60,40,0.4)" stroke-width="1.05"/><g transform="translate(67.20 381.88) scale(0.125)"><text x="0" y="0" font-family="Liberation Mono" font-size="38.40" font-weight="normal" fill="#111" stroke="#111" stroke-width="0.9" text-anchor="end" textLength="52.80" lengthAdjust="spacingAndGlyphs">-220</text></g><g transform="translate(67.20 375.30) scale(0.125)"><text x="0" y="0" font-family="Liberation Mono" font-size="38.40" font-weight="normal" fill="#111" stroke="#111" stroke-width="0.9" text-anchor="end" textLength="52.80" lengthAdjust="spacingAndGlyphs">-200</text></g><g transform="translate(67.20 368.72) scale(0.125)"><text x="0" y="0" font-family="Liberation Mono" font-size="38.40" font-weight="normal" fill="#111" stroke="#111" stroke-width="0.9" text-anchor="end" textLength="52.80" lengthAdjust="spacingAndGlyphs">-180</text></g><g transform="translate(67.20 362.14) scale(0.125)"><text x="0" y="0" font-family="Liberation Mono" font-size="38.40" font-weight="normal" fill="#111" stroke="#111" stroke-width="0.9" text-anchor="end" textLength="52.80" lengthAdjust="spacingAndGlyphs">-160</text></g><g transform="translate(67.20 355.56) scale(0.125)"><text x="0" y="0" font-family="Liberation Mono" font-size="38.40" font-weight="normal" fill="#111" stroke="#111" stroke-width="0.9" text-anchor="end" textLength="52.80" lengthAdjust="spacingAndGlyphs">-140</text></g><g transform="translate(67.20 348.98) scale(0.125)"><text x="0" y="0" font-family="Liberation Mono" font-size="38.40" font-weight="normal" fill="#111" stroke="#111" stroke-width="0.9" text-anchor="end" textLength="52.80" lengthAdjust="spacingAndGlyphs">-120</text></g><g transform="translate(67.20 342.40) scale(0.125)"><text x="0" y="0" font-family="Liberation Mono" font-size="38.40" font-weight="normal" fill="#111" stroke="#111" stroke-width="0.9" text-anchor="end" textLength="52.80" lengthAdjust="spacingAndGlyphs">-100</text></g><g transform="translate(67.20 335.82) scale(0.125)"><text x="0" y="0" font-family="Liberation Mono" font-size="38.40" font-weight="normal" fill="#111" stroke="#111" stroke-width="0.9" text-anchor="end" textLength="39.60" lengthAdjust="spacingAndGlyphs">-80</text></g><g transform="translate(67.20 329.24) scale(0.125)"><text x="0" y="0" font-family="Liberation Mono" font-size="38.40" font-weight="normal" fill="#111" stroke="#111" stroke-width="0.9" text-anchor="end" textLength="39.60" lengthAdjust="spacingAndGlyphs">-60</text></g><g transform="translate(67.20 322.66) scale(0.125)"><text x="0" y="0" font-family="Liberation Mono" font-size="38.40" font-weight="normal" fill="#111" stroke="#111" stroke-width="0.9" text-anchor="end" textLength="39.60" lengthAdjust="spacingAndGlyphs">-40</text></g><g transform="translate(67.20 316.08) scale(0.125)"><text x="0" y="0" font-family="Liberation Mono" font-size="38.40" font-weight="normal" fill="#111" stroke="#111" stroke-width="0.9" text-anchor="end" textLength="39.60" lengthAdjust="spacingAndGlyphs">-20</text></g><g transform="translate(67.20 309.50) scale(0.125)"><text x="0" y="0" font-family="Liberation Mono" font-size="38.40" font-weight="normal" fill="#111" stroke="#111" stroke-width="0.9" text-anchor="end" textLength="13.20" lengthAdjust="spacingAndGlyphs">0</text></g><g transform="translate(67.20 302.92) scale(0.125)"><text x="0" y="0" font-family="Liberation Mono" font-size="38.40" font-weight="normal" fill="#111" stroke="#111" stroke-width="0.9" text-anchor="end" textLength="26.40" lengthAdjust="spacingAndGlyphs">20</text></g><g transform="translate(67.20 296.34) scale(0.125)"><text x="0" y="0" font-family="Liberation Mono" font-size="38.40" font-weight="normal" fill="#111" stroke="#111" stroke-width="0.9" text-anchor="end" textLength="26.40" lengthAdjust="spacingAndGlyphs">40</text></g><g transform="translate(67.20 289.76) scale(0.125)"><text x="0" y="0" font-family="Liberation Mono" font-size="38.40" font-weight="normal" fill="#111" stroke="#111" stroke-width="0.9" text-anchor="end" textLength="26.40" lengthAdjust="spacingAndGlyphs">60</text></g><g transform="translate(67.20 283.18) scale(0.125)"><text x="0" y="0" font-family="Liberation Mono" font-size="38.40" font-weight="normal" fill="#111" stroke="#111" stroke-width="0.9" text-anchor="end" textLength="26.40" lengthAdjust="spacingAndGlyphs">80</text></g><g transform="translate(67.20 276.60) scale(0.125)"><text x="0" y="0" font-family="Liberation Mono" font-size="38.40" font-weight="normal" fill="#111" stroke="#111" stroke-width="0.9" text-anchor="end" textLength="39.60" lengthAdjust="spacingAndGlyphs">100</text></g><g transform="translate(67.20 270.02) scale(0.125)"><text x="0" y="0" font-family="Liberation Mono" font-size="38.40" font-weight="normal" fill="#111" stroke="#111" stroke-width="0.9" text-anchor="end" textLength="39.60" lengthAdjust="spacingAndGlyphs">120</text></g><g transform="translate(67.20 263.44) scale(0.125)"><text x="0" y="0" font-family="Liberation Mono" font-size="38.40" font-weight="normal" fill="#111" stroke="#111" stroke-width="0.9" text-anchor="end" textLength="39.60" lengthAdjust="spacingAndGlyphs">140</text></g><g transform="translate(67.20 256.86) scale(0.125)"><text x="0" y="0" font-family="Liberation Mono" font-size="38.40" font-weight="normal" fill="#111" stroke="#111" stroke-width="0.9" text-anchor="end" textLength="39.60" lengthAdjust="spacingAndGlyphs">160</text></g><g transform="translate(67.20 250.28) scale(0.125)"><text x="0" y="0" font-family="Liberation Mono" font-size="38.40" font-weight="normal" fill="#111" stroke="#111" stroke-width="0.9" text-anchor="end" textLength="39.60" lengthAdjust="spacingAndGlyphs">180</text></g><g transform="translate(67.20 243.70) scale(0.125)"><text x="0" y="0" font-family="Liberation Mono" font-size="38.40" font-weight="normal" fill="#111" stroke="#111" stroke-width="0.9" text-anchor="end" textLength="39.60" lengthAdjust="spacingAndGlyphs">200</text></g><g transform="translate(67.20 237.12) scale(0.125)"><text x="0" y="0" font-family="Liberation Mono" font-size="38.40" font-weight="normal" fill="#111" stroke="#111" stroke-width="0.9" text-anchor="end" textLength="39.60" lengthAdjust="spacingAndGlyphs">220</text></g><g transform="translate(102.00 389.30) scale(0.125)"><text x="0" y="0" font-family="Liberation Mono" font-size="30.40" font-weight="normal" fill="#111" stroke="#111" stroke-width="0.9" text-anchor="middle" textLength="131.04" lengthAdjust="spacingAndGlyphs">Wed 12:00</text></g><g transform="translate(140.00 389.30) scale(0.125)"><text x="0" y="0" font-family="Liberation Mono" font-size="30.40" font-weight="normal" fill="#111" stroke="#111" stroke-width="0.9" text-anchor="middle" textLength="131.04" lengthAdjust="spacingAndGlyphs">Wed 15:00</text></g><g transform="translate(177.00 389.30) scale(0.125)"><text x="0" y="0" font-family="Liberation Mono" font-size="30.40" font-weight="normal" fill="#111" stroke="#111" stroke-width="0.9" text-anchor="middle" textLength="131.04" lengthAdjust="spacingAndGlyphs">Wed 18:00</text></g><g transform="translate(215.00 389.30) scale(0.125)"><text x="0" y="0" font-family="Liberation Mono" font-size="30.40" font-weight="normal" fill="#111" stroke="#111" stroke-width="0.9" text-anchor="middle" textLength="131.04" lengthAdjust="spacingAndGlyphs">Wed 21:00</text></g><g transform="translate(252.70 389.30) scale(0.125)"><text x="0" y="0" font-family="Liberation Mono" font-size="30.40" font-weight="normal" fill="#111" stroke="#111" stroke-width="0.9" text-anchor="middle" textLength="131.04" lengthAdjust="spacingAndGlyphs">Thu 00:00</text></g><g transform="translate(290.00 389.30) scale(0.125)"><text x="0" y="0" font-family="Liberation Mono" font-size="30.40" font-weight="normal" fill="#111" stroke="#111" stroke-width="0.9" text-anchor="middle" textLength="131.04" lengthAdjust="spacingAndGlyphs">Thu 03:00</text></g><g transform="translate(327.70 389.30) scale(0.125)"><text x="0" y="0" font-family="Liberation Mono" font-size="30.40" font-weight="normal" fill="#111" stroke="#111" stroke-width="0.9" text-anchor="middle" textLength="131.04" lengthAdjust="spacingAndGlyphs">Thu 06:00</text></g><g transform="translate(365.50 389.30) scale(0.125)"><text x="0" y="0" font-family="Liberation Mono" font-size="30.40" font-weight="normal" fill="#111" stroke="#111" stroke-width="0.9" text-anchor="middle" textLength="131.04" lengthAdjust="spacingAndGlyphs">Thu 09:00</text></g><line x1="70.5" y1="232.5" x2="70.5" y2="386.3" stroke="#c8c8c8" stroke-width="1.3"/><line x1="69.0" y1="385.3" x2="374.7" y2="385.3" stroke="#c8c8c8" stroke-width="1.1"/><path d="M69.0 232.5 l1.5 -1.8 l1.5 1.8 z" fill="#666"/><path d="M374.7 383.8 l2 1.5 l-2 1.5 z" fill="#666"/><g transform="translate(215.50 233.50) scale(0.125)"><text x="0" y="0" font-family="Liberation Mono" font-size="40.00" font-weight="normal" fill="#222" stroke="#222" stroke-width="0.9" text-anchor="middle" textLength="155.52" lengthAdjust="spacingAndGlyphs">Last Day</text></g><g transform="rotate(-90 54.0 309.9)"><g transform="translate(54.00 309.90) scale(0.125)"><text x="0" y="0" font-family="Liberation Mono" font-size="40.00" font-weight="normal" fill="#222" stroke="#222" stroke-width="0.9" text-anchor="middle" textLength="96.00" lengthAdjust="spacingAndGlyphs">Mbit/s</text></g></g><g transform="rotate(90 378.2 246.5)"><g transform="translate(378.20 246.50) scale(0.125)"><text x="0" y="0" font-family="Liberation Mono" font-size="20.80" font-weight="normal" fill="#ccc" stroke="#ccc" stroke-width="0.9" text-anchor="middle">RRDTOOL / TOBI OETIKER</text></g></g><rect x="55.5" y="391.5" width="3.0" height="3.0" fill="#4caf3c"/><g transform="translate(60.10 394.60) scale(0.125)"><text x="0" y="0" font-family="Liberation Mono" font-size="32.80" font-weight="normal" fill="#111" stroke="#111" stroke-width="0.9" text-anchor="start" textLength="134.40" lengthAdjust="spacingAndGlyphs">Download</text></g><rect x="81.2" y="391.5" width="3.0" height="3.0" fill="#3a5fc0"/><g transform="translate(85.90 394.60) scale(0.125)"><text x="0" y="0" font-family="Liberation Mono" font-size="32.80" font-weight="normal" fill="#111" stroke="#111" stroke-width="0.9" text-anchor="start" textLength="100.80" lengthAdjust="spacingAndGlyphs">Upload</text></g><rect x="103.1" y="391.5" width="3.0" height="3.0" fill="#e03a1a"/><g transform="translate(107.90 394.60) scale(0.125)"><text x="0" y="0" font-family="Liberation Mono" font-size="32.80" font-weight="normal" fill="#111" stroke="#111" stroke-width="0.9" text-anchor="start" textLength="50.40" lengthAdjust="spacingAndGlyphs">Avg</text></g><g transform="translate(55.50 398.70) scale(0.125)"><text x="0" y="0" font-family="Liberation Mono" font-size="32.80" font-weight="normal" fill="#111" stroke="#111" stroke-width="0.9" text-anchor="start" textLength="588.00" lengthAdjust="spacingAndGlyphs">Last download bandwidth: 219.6 Mb/s</text></g><g transform="translate(55.50 402.90) scale(0.125)"><text x="0" y="0" font-family="Liberation Mono" font-size="32.80" font-weight="normal" fill="#111" stroke="#111" stroke-width="0.9" text-anchor="start" textLength="554.40" lengthAdjust="spacingAndGlyphs">Last upload bandwidth: 181.5 Mb/s</text></g><g transform="translate(55.50 407.00) scale(0.125)"><text x="0" y="0" font-family="Liberation Mono" font-size="32.80" font-weight="normal" fill="#111" stroke="#111" stroke-width="0.9" text-anchor="start" textLength="554.40" lengthAdjust="spacingAndGlyphs">Avg download bandwidth 203.8 Mb/s</text></g><g transform="translate(55.50 411.20) scale(0.125)"><text x="0" y="0" font-family="Liberation Mono" font-size="32.80" font-weight="normal" fill="#111" stroke="#111" stroke-width="0.9" text-anchor="start" textLength="520.80" lengthAdjust="spacingAndGlyphs">Avg upload bandwidth 187.1 Mb/s</text></g>
<rect x="431.3" y="234.5" width="300.7" height="150.8" fill="#fdfdfd"/><line x1="436.00" y1="234.5" x2="436.00" y2="385.3" stroke="rgba(0,0,0,0.03)" stroke-width="0.8"/><line x1="446.71" y1="234.5" x2="446.71" y2="385.3" stroke="rgba(0,0,0,0.03)" stroke-width="0.8"/><line x1="457.42" y1="234.5" x2="457.42" y2="385.3" stroke="rgba(0,0,0,0.03)" stroke-width="0.8"/><line x1="468.13" y1="234.5" x2="468.13" y2="385.3" stroke="rgba(0,0,0,0.03)" stroke-width="0.8"/><line x1="478.84" y1="234.5" x2="478.84" y2="385.3" stroke="rgba(0,0,0,0.03)" stroke-width="0.8"/><line x1="489.55" y1="234.5" x2="489.55" y2="385.3" stroke="rgba(0,0,0,0.03)" stroke-width="0.8"/><line x1="500.26" y1="234.5" x2="500.26" y2="385.3" stroke="rgba(0,0,0,0.03)" stroke-width="0.8"/><line x1="510.97" y1="234.5" x2="510.97" y2="385.3" stroke="rgba(0,0,0,0.03)" stroke-width="0.8"/><line x1="521.68" y1="234.5" x2="521.68" y2="385.3" stroke="rgba(0,0,0,0.03)" stroke-width="0.8"/><line x1="532.39" y1="234.5" x2="532.39" y2="385.3" stroke="rgba(0,0,0,0.03)" stroke-width="0.8"/><line x1="543.10" y1="234.5" x2="543.10" y2="385.3" stroke="rgba(0,0,0,0.03)" stroke-width="0.8"/><line x1="553.81" y1="234.5" x2="553.81" y2="385.3" stroke="rgba(0,0,0,0.03)" stroke-width="0.8"/><line x1="564.52" y1="234.5" x2="564.52" y2="385.3" stroke="rgba(0,0,0,0.03)" stroke-width="0.8"/><line x1="575.23" y1="234.5" x2="575.23" y2="385.3" stroke="rgba(0,0,0,0.03)" stroke-width="0.8"/><line x1="585.94" y1="234.5" x2="585.94" y2="385.3" stroke="rgba(0,0,0,0.03)" stroke-width="0.8"/><line x1="596.65" y1="234.5" x2="596.65" y2="385.3" stroke="rgba(0,0,0,0.03)" stroke-width="0.8"/><line x1="607.36" y1="234.5" x2="607.36" y2="385.3" stroke="rgba(0,0,0,0.03)" stroke-width="0.8"/><line x1="618.07" y1="234.5" x2="618.07" y2="385.3" stroke="rgba(0,0,0,0.03)" stroke-width="0.8"/><line x1="628.78" y1="234.5" x2="628.78" y2="385.3" stroke="rgba(0,0,0,0.03)" stroke-width="0.8"/><line x1="639.49" y1="234.5" x2="639.49" y2="385.3" stroke="rgba(0,0,0,0.03)" stroke-width="0.8"/><line x1="650.20" y1="234.5" x2="650.20" y2="385.3" stroke="rgba(0,0,0,0.03)" stroke-width="0.8"/><line x1="660.91" y1="234.5" x2="660.91" y2="385.3" stroke="rgba(0,0,0,0.03)" stroke-width="0.8"/><line x1="671.62" y1="234.5" x2="671.62" y2="385.3" stroke="rgba(0,0,0,0.03)" stroke-width="0.8"/><line x1="682.33" y1="234.5" x2="682.33" y2="385.3" stroke="rgba(0,0,0,0.03)" stroke-width="0.8"/><line x1="693.04" y1="234.5" x2="693.04" y2="385.3" stroke="rgba(0,0,0,0.03)" stroke-width="0.8"/><line x1="703.75" y1="234.5" x2="703.75" y2="385.3" stroke="rgba(0,0,0,0.03)" stroke-width="0.8"/><line x1="714.46" y1="234.5" x2="714.46" y2="385.3" stroke="rgba(0,0,0,0.03)" stroke-width="0.8"/><line x1="725.17" y1="234.5" x2="725.17" y2="385.3" stroke="rgba(0,0,0,0.03)" stroke-width="0.8"/><line x1="431.3" y1="383.47" x2="732.0" y2="383.47" stroke="rgba(0,0,0,0.03)" stroke-width="0.8"/><line x1="431.3" y1="377.12" x2="732.0" y2="377.12" stroke="rgba(0,0,0,0.03)" stroke-width="0.8"/><line x1="431.3" y1="370.76" x2="732.0" y2="370.76" stroke="rgba(0,0,0,0.03)" stroke-width="0.8"/><line x1="431.3" y1="364.41" x2="732.0" y2="364.41" stroke="rgba(0,0,0,0.03)" stroke-width="0.8"/><line x1="431.3" y1="358.05" x2="732.0" y2="358.05" stroke="rgba(0,0,0,0.03)" stroke-width="0.8"/><line x1="431.3" y1="351.70" x2="732.0" y2="351.70" stroke="rgba(0,0,0,0.03)" stroke-width="0.8"/><line x1="431.3" y1="345.35" x2="732.0" y2="345.35" stroke="rgba(0,0,0,0.03)" stroke-width="0.8"/><line x1="431.3" y1="338.99" x2="732.0" y2="338.99" stroke="rgba(0,0,0,0.03)" stroke-width="0.8"/><line x1="431.3" y1="332.64" x2="732.0" y2="332.64" stroke="rgba(0,0,0,0.03)" stroke-width="0.8"/><line x1="431.3" y1="326.28" x2="732.0" y2="326.28" stroke="rgba(0,0,0,0.03)" stroke-width="0.8"/><line x1="431.3" y1="319.93" x2="732.0" y2="319.93" stroke="rgba(0,0,0,0.03)" stroke-width="0.8"/><line x1="431.3" y1="313.58" x2="732.0" y2="313.58" stroke="rgba(0,0,0,0.03)" stroke-width="0.8"/><line x1="431.3" y1="307.22" x2="732.0" y2="307.22" stroke="rgba(0,0,0,0.03)" stroke-width="0.8"/><line x1="431.3" y1="300.87" x2="732.0" y2="300.87" stroke="rgba(0,0,0,0.03)" stroke-width="0.8"/><line x1="431.3" y1="294.51" x2="732.0" y2="294.51" stroke="rgba(0,0,0,0.03)" stroke-width="0.8"/><line x1="431.3" y1="288.16" x2="732.0" y2="288.16" stroke="rgba(0,0,0,0.03)" stroke-width="0.8"/><line x1="431.3" y1="281.81" x2="732.0" y2="281.81" stroke="rgba(0,0,0,0.03)" stroke-width="0.8"/><line x1="431.3" y1="275.45" x2="732.0" y2="275.45" stroke="rgba(0,0,0,0.03)" stroke-width="0.8"/><line x1="431.3" y1="269.10" x2="732.0" y2="269.10" stroke="rgba(0,0,0,0.03)" stroke-width="0.8"/><line x1="431.3" y1="262.75" x2="732.0" y2="262.75" stroke="rgba(0,0,0,0.03)" stroke-width="0.8"/><line x1="431.3" y1="256.39" x2="732.0" y2="256.39" stroke="rgba(0,0,0,0.03)" stroke-width="0.8"/><line x1="431.3" y1="250.04" x2="732.0" y2="250.04" stroke="rgba(0,0,0,0.03)" stroke-width="0.8"/><line x1="431.3" y1="243.68" x2="732.0" y2="243.68" stroke="rgba(0,0,0,0.03)" stroke-width="0.8"/><line x1="431.3" y1="237.33" x2="732.0" y2="237.33" stroke="rgba(0,0,0,0.03)" stroke-width="0.8"/><line x1="456.40" y1="234.5" x2="456.40" y2="385.3" stroke="rgba(255,0,0,0.055)" stroke-width="0.8"/><line x1="499.25" y1="234.5" x2="499.25" y2="385.3" stroke="rgba(255,0,0,0.055)" stroke-width="0.8"/><line x1="542.10" y1="234.5" x2="542.10" y2="385.3" stroke="rgba(255,0,0,0.055)" stroke-width="0.8"/><line x1="584.95" y1="234.5" x2="584.95" y2="385.3" stroke="rgba(255,0,0,0.055)" stroke-width="0.8"/><line x1="627.80" y1="234.5" x2="627.80" y2="385.3" stroke="rgba(255,0,0,0.055)" stroke-width="0.8"/><line x1="670.65" y1="234.5" x2="670.65" y2="385.3" stroke="rgba(255,0,0,0.055)" stroke-width="0.8"/><line x1="713.50" y1="234.5" x2="713.50" y2="385.3" stroke="rgba(255,0,0,0.055)" stroke-width="0.8"/><line x1="436.00" y1="234.5" x2="436.00" y2="385.3" stroke="rgba(255,0,0,0.055)" stroke-width="0.8"/><line x1="431.3" y1="380.29" x2="732.0" y2="380.29" stroke="rgba(255,0,0,0.055)" stroke-width="0.8"/><line x1="431.3" y1="373.94" x2="732.0" y2="373.94" stroke="rgba(255,0,0,0.055)" stroke-width="0.8"/><line x1="431.3" y1="367.59" x2="732.0" y2="367.59" stroke="rgba(255,0,0,0.055)" stroke-width="0.8"/><line x1="431.3" y1="361.23" x2="732.0" y2="361.23" stroke="rgba(255,0,0,0.055)" stroke-width="0.8"/><line x1="431.3" y1="354.88" x2="732.0" y2="354.88" stroke="rgba(255,0,0,0.055)" stroke-width="0.8"/><line x1="431.3" y1="348.52" x2="732.0" y2="348.52" stroke="rgba(255,0,0,0.055)" stroke-width="0.8"/><line x1="431.3" y1="342.17" x2="732.0" y2="342.17" stroke="rgba(255,0,0,0.055)" stroke-width="0.8"/><line x1="431.3" y1="335.82" x2="732.0" y2="335.82" stroke="rgba(255,0,0,0.055)" stroke-width="0.8"/><line x1="431.3" y1="329.46" x2="732.0" y2="329.46" stroke="rgba(255,0,0,0.055)" stroke-width="0.8"/><line x1="431.3" y1="323.11" x2="732.0" y2="323.11" stroke="rgba(255,0,0,0.055)" stroke-width="0.8"/><line x1="431.3" y1="316.75" x2="732.0" y2="316.75" stroke="rgba(255,0,0,0.055)" stroke-width="0.8"/><line x1="431.3" y1="310.40" x2="732.0" y2="310.40" stroke="rgba(255,0,0,0.055)" stroke-width="0.8"/><line x1="431.3" y1="304.05" x2="732.0" y2="304.05" stroke="rgba(255,0,0,0.055)" stroke-width="0.8"/><line x1="431.3" y1="297.69" x2="732.0" y2="297.69" stroke="rgba(255,0,0,0.055)" stroke-width="0.8"/><line x1="431.3" y1="291.34" x2="732.0" y2="291.34" stroke="rgba(255,0,0,0.055)" stroke-width="0.8"/><line x1="431.3" y1="284.98" x2="732.0" y2="284.98" stroke="rgba(255,0,0,0.055)" stroke-width="0.8"/><line x1="431.3" y1="278.63" x2="732.0" y2="278.63" stroke="rgba(255,0,0,0.055)" stroke-width="0.8"/><line x1="431.3" y1="272.28" x2="732.0" y2="272.28" stroke="rgba(255,0,0,0.055)" stroke-width="0.8"/><line x1="431.3" y1="265.92" x2="732.0" y2="265.92" stroke="rgba(255,0,0,0.055)" stroke-width="0.8"/><line x1="431.3" y1="259.57" x2="732.0" y2="259.57" stroke="rgba(255,0,0,0.055)" stroke-width="0.8"/><line x1="431.3" y1="253.21" x2="732.0" y2="253.21" stroke="rgba(255,0,0,0.055)" stroke-width="0.8"/><line x1="431.3" y1="246.86" x2="732.0" y2="246.86" stroke="rgba(255,0,0,0.055)" stroke-width="0.8"/><line x1="431.3" y1="240.51" x2="732.0" y2="240.51" stroke="rgba(255,0,0,0.055)" stroke-width="0.8"/><path d="M444.25 310.40 L444.25 238.64 L445.49 238.64 L445.49 244.21 L447.11 244.21 L447.11 243.35 L448.96 243.35 L448.96 241.12 L450.82 241.12 L450.82 245.45 L452.68 245.45 L452.68 244.21 L454.17 244.21 L454.17 254.75 L456.03 254.75 L456.03 251.03 L457.89 251.03 L457.89 243.59 L459.50 243.59 L459.50 242.35 L461.36 242.35 L461.36 244.21 L463.22 244.21 L463.22 238.39 L464.83 238.39 L464.83 244.21 L466.69 244.21 L466.69 239.26 L468.43 239.26 L468.43 240.50 L470.29 240.50 L470.29 245.83 L471.90 245.83 L471.90 241.73 L473.76 241.73 L473.76 243.59 L475.62 243.59 L475.62 245.45 L477.48 245.45 L477.48 241.12 L480.58 241.12 L480.58 245.45 L482.43 245.45 L482.43 246.69 L484.91 246.69 L484.91 242.97 L486.77 242.97 L486.77 245.45 L488.63 245.45 L488.63 244.83 L490.49 244.83 L490.49 241.73 L492.35 241.73 L492.35 243.59 L494.21 243.59 L494.21 244.59 L496.07 244.59 L496.07 241.36 L499.17 241.36 L499.17 242.35 L501.03 242.35 L501.03 243.84 L504.13 243.84 L504.13 240.50 L505.99 240.50 L505.99 239.26 L507.85 239.26 L507.85 243.35 L509.71 243.35 L509.71 239.63 L511.57 239.63 L511.57 242.35 L513.43 242.35 L513.43 247.93 L515.04 247.93 L515.04 242.97 L517.14 242.97 L517.14 239.63 L519.00 239.63 L519.00 241.12 L520.86 241.12 L520.86 242.35 L522.72 242.35 L522.72 243.59 L524.58 243.59 L524.58 242.97 L526.44 242.97 L526.44 238.02 L528.30 238.02 L528.30 246.69 L530.16 246.69 L530.16 244.21 L532.02 244.21 L532.02 241.73 L533.88 241.73 L533.88 240.50 L535.74 240.50 L535.74 244.21 L537.60 244.21 L537.60 243.59 L539.46 243.59 L539.46 243.59 L541.32 243.59 L541.32 240.50 L543.18 240.50 L543.18 240.87 L545.04 240.87 L545.04 252.27 L546.89 252.27 L546.89 242.35 L548.75 242.35 L548.75 250.41 L550.61 250.41 L550.61 247.93 L552.47 247.93 L552.47 241.12 L554.33 241.12 L554.33 240.87 L556.19 240.87 L556.19 244.21 L558.05 244.21 L558.05 237.15 L559.91 237.15 L559.91 310.40 L560.00 310.40 L560.00 241.73 L562.48 241.73 L562.48 239.26 L563.72 239.26 L563.72 246.07 L564.96 246.07 L564.96 240.50 L566.82 240.50 L566.82 244.83 L568.68 244.83 L568.68 242.35 L571.70 242.35 L571.70 310.40 L572.90 310.40 L572.90 242.35 L573.02 242.35 L573.02 242.35 L576.73 242.35 L576.73 235.91 L577.97 235.91 L577.97 239.88 L582.93 239.88 L582.93 244.21 L585.41 244.21 L585.41 244.83 L587.27 244.83 L587.27 243.35 L589.13 243.35 L589.13 254.13 L590.37 254.13 L590.37 240.87 L592.23 240.87 L592.23 240.12 L599.67 240.12 L599.67 245.08 L602.15 245.08 L602.15 244.21 L604.00 244.21 L604.00 310.40 L606.50 310.40 L606.50 240.50 L608.59 240.50 L608.59 246.69 L610.20 246.69 L610.20 245.45 L612.06 245.45 L612.06 250.41 L613.92 250.41 L613.92 240.50 L617.02 240.50 L617.02 241.12 L618.88 241.12 L618.88 244.21 L620.74 244.21 L620.74 247.93 L622.60 247.93 L622.60 252.89 L624.46 252.89 L624.46 254.75 L625.10 254.75 L625.10 310.40 L626.10 310.40 L626.10 254.75 L626.32 254.75 L626.32 256.98 L628.18 256.98 L628.18 252.27 L630.04 252.27 L630.04 247.93 L631.28 247.93 L631.28 247.31 L633.14 247.31 L633.14 238.02 L635.62 238.02 L635.62 240.87 L638.10 240.87 L638.10 258.47 L639.96 258.47 L639.96 241.12 L641.81 241.12 L641.81 240.50 L643.67 240.50 L643.67 239.26 L645.53 239.26 L645.53 247.31 L647.39 247.31 L647.39 239.26 L649.25 239.26 L649.25 245.45 L651.11 245.45 L651.11 244.83 L652.97 244.83 L652.97 239.63 L654.83 239.63 L654.83 249.17 L656.69 249.17 L656.69 248.30 L658.55 248.30 L658.55 248.55 L660.41 248.55 L660.41 243.59 L662.27 243.59 L662.27 237.15 L664.13 237.15 L664.13 264.67 L665.99 264.67 L665.99 241.12 L667.85 241.12 L667.85 237.40 L669.71 237.40 L669.71 248.30 L671.57 248.30 L671.57 247.07 L673.43 247.07 L673.43 245.83 L675.28 245.83 L675.28 246.69 L677.14 246.69 L677.14 243.59 L679.00 243.59 L679.00 239.88 L680.86 239.88 L680.86 239.63 L682.72 239.63 L682.72 241.73 L684.58 241.73 L684.58 239.88 L686.44 239.88 L686.44 237.40 L688.30 237.40 L688.30 239.88 L690.16 239.88 L690.16 244.83 L692.02 244.83 L692.02 245.45 L693.88 245.45 L693.88 241.12 L695.74 241.12 L695.74 252.27 L697.60 252.27 L697.60 262.19 L699.46 262.19 L699.46 244.83 L701.32 244.83 L701.32 244.21 L703.18 244.21 L703.18 245.45 L705.04 245.45 L705.04 246.69 L706.89 246.69 L706.89 247.07 L708.75 247.07 L708.75 246.32 L710.61 246.32 L710.61 247.07 L712.47 247.07 L712.47 245.45 L714.33 245.45 L714.33 247.93 L715.57 247.93 L715.57 241.73 L717.43 241.73 L717.43 243.59 L719.29 243.59 L719.29 245.83 L721.15 245.83 L721.15 244.83 L723.01 244.83 L723.01 246.69 L724.87 246.69 L724.87 240.50 L726.73 240.50 L726.73 243.59 L728.59 243.59 L728.59 245.45 L730.45 245.45 L730.45 240.50 L731.94 240.50 L731.94 310.40 Z" fill="#63aa44"/><path d="M444.30 310.40 L444.30 371.30 L445.30 371.30 L445.30 370.50 L446.30 370.50 L446.30 371.30 L447.30 371.30 L447.30 371.30 L448.30 371.30 L448.30 370.50 L449.30 370.50 L449.30 370.50 L450.30 370.50 L450.30 370.70 L451.30 370.70 L451.30 370.70 L452.30 370.70 L452.30 370.50 L453.30 370.50 L453.30 371.30 L454.30 371.30 L454.30 370.50 L455.30 370.50 L455.30 370.70 L456.30 370.70 L456.30 370.70 L457.30 370.70 L457.30 371.30 L458.30 371.30 L458.30 371.00 L459.30 371.00 L459.30 370.70 L460.30 370.70 L460.30 370.70 L461.30 370.70 L461.30 370.50 L462.30 370.50 L462.30 370.70 L463.30 370.70 L463.30 370.50 L464.30 370.50 L464.30 371.30 L465.30 371.30 L465.30 371.30 L466.30 371.30 L466.30 370.50 L467.30 370.50 L467.30 370.70 L468.30 370.70 L468.30 370.50 L469.30 370.50 L469.30 370.70 L470.30 370.70 L470.30 370.50 L471.30 370.50 L471.30 370.70 L472.30 370.70 L472.30 368.00 L473.30 368.00 L473.30 368.00 L474.30 368.00 L474.30 368.00 L475.30 368.00 L475.30 368.00 L476.30 368.00 L476.30 368.00 L477.30 368.00 L477.30 368.00 L478.30 368.00 L478.30 368.00 L479.30 368.00 L479.30 368.00 L480.30 368.00 L480.30 368.00 L481.30 368.00 L481.30 370.50 L482.30 370.50 L482.30 368.20 L483.30 368.20 L483.30 368.20 L484.30 368.20 L484.30 368.20 L485.30 368.20 L485.30 368.20 L486.30 368.20 L486.30 371.30 L487.30 371.30 L487.30 370.70 L488.30 370.70 L488.30 370.70 L489.30 370.70 L489.30 371.30 L490.30 371.30 L490.30 371.00 L491.30 371.00 L491.30 371.30 L492.30 371.30 L492.30 369.20 L493.30 369.20 L493.30 369.20 L494.30 369.20 L494.30 371.00 L495.30 371.00 L495.30 371.00 L496.30 371.00 L496.30 370.70 L497.30 370.70 L497.30 370.50 L498.30 370.50 L498.30 371.00 L499.30 371.00 L499.30 370.70 L500.30 370.70 L500.30 370.70 L501.30 370.70 L501.30 370.50 L502.30 370.50 L502.30 370.70 L503.30 370.70 L503.30 371.30 L504.30 371.30 L504.30 370.70 L505.30 370.70 L505.30 371.00 L506.30 371.00 L506.30 371.30 L507.30 371.30 L507.30 370.70 L508.30 370.70 L508.30 370.70 L509.30 370.70 L509.30 370.70 L510.30 370.70 L510.30 370.70 L511.30 370.70 L511.30 370.70 L512.30 370.70 L512.30 370.70 L513.30 370.70 L513.30 371.30 L514.30 371.30 L514.30 371.30 L515.30 371.30 L515.30 371.30 L516.30 371.30 L516.30 371.30 L517.30 371.30 L517.30 370.70 L518.30 370.70 L518.30 370.50 L519.30 370.50 L519.30 370.70 L520.30 370.70 L520.30 371.00 L521.30 371.00 L521.30 371.00 L522.30 371.00 L522.30 370.70 L523.30 370.70 L523.30 371.00 L524.30 371.00 L524.30 371.00 L525.30 371.00 L525.30 370.70 L526.30 370.70 L526.30 371.30 L527.30 371.30 L527.30 370.70 L528.30 370.70 L528.30 370.70 L529.30 370.70 L529.30 370.70 L530.30 370.70 L530.30 370.70 L531.30 370.70 L531.30 370.70 L532.30 370.70 L532.30 370.70 L533.30 370.70 L533.30 371.30 L534.30 371.30 L534.30 371.30 L535.30 371.30 L535.30 370.70 L536.30 370.70 L536.30 370.50 L537.30 370.50 L537.30 370.70 L538.30 370.70 L538.30 371.30 L539.30 371.30 L539.30 370.50 L540.30 370.50 L540.30 370.70 L541.30 370.70 L541.30 370.70 L542.30 370.70 L542.30 371.30 L543.30 371.30 L543.30 371.30 L544.30 371.30 L544.30 370.70 L545.30 370.70 L545.30 371.30 L546.30 371.30 L546.30 371.30 L547.30 371.30 L547.30 370.70 L548.30 370.70 L548.30 370.70 L549.30 370.70 L549.30 371.00 L550.30 371.00 L550.30 370.50 L551.30 370.50 L551.30 371.00 L552.30 371.00 L552.30 370.70 L553.30 370.70 L553.30 370.70 L554.30 370.70 L554.30 370.70 L555.30 370.70 L555.30 371.30 L556.30 371.30 L556.30 370.50 L557.30 370.50 L557.30 370.50 L558.30 370.50 L558.30 370.70 L559.30 370.70 L559.30 370.70 L560.30 370.70 L560.30 370.70 L561.30 370.70 L561.30 370.70 L562.30 370.70 L562.30 371.30 L563.30 371.30 L563.30 371.00 L564.30 371.00 L564.30 370.70 L565.30 370.70 L565.30 370.50 L566.30 370.50 L566.30 371.00 L567.30 371.00 L567.30 371.00 L568.30 371.00 L568.30 371.30 L569.30 371.30 L569.30 370.70 L570.30 370.70 L570.30 370.70 L571.30 370.70 L571.30 310.40 L573.30 310.40 L573.30 370.50 L574.30 370.50 L574.30 370.70 L575.30 370.70 L575.30 370.70 L576.30 370.70 L576.30 370.50 L577.30 370.50 L577.30 371.00 L578.30 371.00 L578.30 371.00 L579.30 371.00 L579.30 370.50 L580.30 370.50 L580.30 371.30 L581.30 371.30 L581.30 370.70 L582.30 370.70 L582.30 370.50 L583.30 370.50 L583.30 371.30 L584.30 371.30 L584.30 370.50 L585.30 370.50 L585.30 370.70 L586.30 370.70 L586.30 371.30 L587.30 371.30 L587.30 370.70 L588.30 370.70 L588.30 370.70 L589.30 370.70 L589.30 371.00 L590.30 371.00 L590.30 370.70 L591.30 370.70 L591.30 370.50 L592.30 370.50 L592.30 370.70 L593.30 370.70 L593.30 370.70 L594.30 370.70 L594.30 370.70 L595.30 370.70 L595.30 370.50 L596.30 370.50 L596.30 370.70 L597.30 370.70 L597.30 371.30 L598.30 371.30 L598.30 371.30 L599.30 371.30 L599.30 368.80 L600.30 368.80 L600.30 368.80 L601.30 368.80 L601.30 371.30 L602.30 371.30 L602.30 370.70 L603.30 370.70 L603.30 370.70 L604.30 370.70 L604.30 310.40 L606.30 310.40 L606.30 370.50 L607.30 370.50 L607.30 371.00 L608.30 371.00 L608.30 370.70 L609.30 370.70 L609.30 371.30 L610.30 371.30 L610.30 367.60 L611.30 367.60 L611.30 367.60 L612.30 367.60 L612.30 367.60 L613.30 367.60 L613.30 367.60 L614.30 367.60 L614.30 367.60 L615.30 367.60 L615.30 367.60 L616.30 367.60 L616.30 370.70 L617.30 370.70 L617.30 370.70 L618.30 370.70 L618.30 370.70 L619.30 370.70 L619.30 370.70 L620.30 370.70 L620.30 371.30 L621.30 371.30 L621.30 370.50 L622.30 370.50 L622.30 370.50 L623.30 370.50 L623.30 370.50 L624.30 370.50 L624.30 370.70 L625.30 370.70 L625.30 310.40 L626.30 310.40 L626.30 370.70 L627.30 370.70 L627.30 370.70 L628.30 370.70 L628.30 370.70 L629.30 370.70 L629.30 370.70 L630.30 370.70 L630.30 371.00 L631.30 371.00 L631.30 371.30 L632.30 371.30 L632.30 371.30 L633.30 371.30 L633.30 370.70 L634.30 370.70 L634.30 370.70 L635.30 370.70 L635.30 370.70 L636.30 370.70 L636.30 370.70 L637.30 370.70 L637.30 371.00 L638.30 371.00 L638.30 371.00 L639.30 371.00 L639.30 370.50 L640.30 370.50 L640.30 370.50 L641.30 370.50 L641.30 370.70 L642.30 370.70 L642.30 370.70 L643.30 370.70 L643.30 371.00 L644.30 371.00 L644.30 370.70 L645.30 370.70 L645.30 371.30 L646.30 371.30 L646.30 371.00 L647.30 371.00 L647.30 370.50 L648.30 370.50 L648.30 368.00 L649.30 368.00 L649.30 370.70 L650.30 370.70 L650.30 370.50 L651.30 370.50 L651.30 370.70 L652.30 370.70 L652.30 370.70 L653.30 370.70 L653.30 371.30 L654.30 371.30 L654.30 369.20 L655.30 369.20 L655.30 369.20 L656.30 369.20 L656.30 369.20 L657.30 369.20 L657.30 369.20 L658.30 369.20 L658.30 370.50 L659.30 370.50 L659.30 370.70 L660.30 370.70 L660.30 371.30 L661.30 371.30 L661.30 370.70 L662.30 370.70 L662.30 371.00 L663.30 371.00 L663.30 371.00 L664.30 371.00 L664.30 370.70 L665.30 370.70 L665.30 370.70 L666.30 370.70 L666.30 370.70 L667.30 370.70 L667.30 371.30 L668.30 371.30 L668.30 370.50 L669.30 370.50 L669.30 371.00 L670.30 371.00 L670.30 370.70 L671.30 370.70 L671.30 370.70 L672.30 370.70 L672.30 371.00 L673.30 371.00 L673.30 371.00 L674.30 371.00 L674.30 370.70 L675.30 370.70 L675.30 371.30 L676.30 371.30 L676.30 370.70 L677.30 370.70 L677.30 371.30 L678.30 371.30 L678.30 370.70 L679.30 370.70 L679.30 371.30 L680.30 371.30 L680.30 370.50 L681.30 370.50 L681.30 370.70 L682.30 370.70 L682.30 370.50 L683.30 370.50 L683.30 371.30 L684.30 371.30 L684.30 371.30 L685.30 371.30 L685.30 370.50 L686.30 370.50 L686.30 370.70 L687.30 370.70 L687.30 367.60 L688.30 367.60 L688.30 367.60 L689.30 367.60 L689.30 367.60 L690.30 367.60 L690.30 368.80 L691.30 368.80 L691.30 368.80 L692.30 368.80 L692.30 368.80 L693.30 368.80 L693.30 368.80 L694.30 368.80 L694.30 371.00 L695.30 371.00 L695.30 371.30 L696.30 371.30 L696.30 370.50 L697.30 370.50 L697.30 371.30 L698.30 371.30 L698.30 369.00 L699.30 369.00 L699.30 369.00 L700.30 369.00 L700.30 369.00 L701.30 369.00 L701.30 369.00 L702.30 369.00 L702.30 369.00 L703.30 369.00 L703.30 370.50 L704.30 370.50 L704.30 370.70 L705.30 370.70 L705.30 371.00 L706.30 371.00 L706.30 370.50 L707.30 370.50 L707.30 370.70 L708.30 370.70 L708.30 371.30 L709.30 371.30 L709.30 370.70 L710.30 370.70 L710.30 370.70 L711.30 370.70 L711.30 370.70 L712.30 370.70 L712.30 371.30 L713.30 371.30 L713.30 370.50 L714.30 370.50 L714.30 371.30 L715.30 371.30 L715.30 371.00 L716.30 371.00 L716.30 370.70 L717.30 370.70 L717.30 371.00 L718.30 371.00 L718.30 371.00 L719.30 371.00 L719.30 370.70 L720.30 370.70 L720.30 370.50 L721.30 370.50 L721.30 370.70 L722.30 370.70 L722.30 370.50 L723.30 370.50 L723.30 370.70 L724.30 370.70 L724.30 371.00 L725.30 371.00 L725.30 371.30 L726.30 371.30 L726.30 371.30 L727.30 371.30 L727.30 370.70 L728.30 370.70 L728.30 371.00 L729.30 371.00 L729.30 371.30 L730.30 371.30 L730.30 368.00 L731.30 368.00 L731.30 368.00 L732.00 368.00 L732.00 310.40 Z" fill="#3e62ad"/><g style="mix-blend-mode:screen"><line x1="456.40" y1="234.5" x2="456.40" y2="385.3" stroke="rgba(255,150,120,0.22)" stroke-width="0.8"/><line x1="499.25" y1="234.5" x2="499.25" y2="385.3" stroke="rgba(255,150,120,0.22)" stroke-width="0.8"/><line x1="542.10" y1="234.5" x2="542.10" y2="385.3" stroke="rgba(255,150,120,0.22)" stroke-width="0.8"/><line x1="584.95" y1="234.5" x2="584.95" y2="385.3" stroke="rgba(255,150,120,0.22)" stroke-width="0.8"/><line x1="627.80" y1="234.5" x2="627.80" y2="385.3" stroke="rgba(255,150,120,0.22)" stroke-width="0.8"/><line x1="670.65" y1="234.5" x2="670.65" y2="385.3" stroke="rgba(255,150,120,0.22)" stroke-width="0.8"/><line x1="713.50" y1="234.5" x2="713.50" y2="385.3" stroke="rgba(255,150,120,0.22)" stroke-width="0.8"/><line x1="436.00" y1="234.5" x2="436.00" y2="385.3" stroke="rgba(255,150,120,0.22)" stroke-width="0.8"/><line x1="431.3" y1="380.29" x2="732.0" y2="380.29" stroke="rgba(255,150,120,0.18)" stroke-width="0.8"/><line x1="431.3" y1="373.94" x2="732.0" y2="373.94" stroke="rgba(255,150,120,0.18)" stroke-width="0.8"/><line x1="431.3" y1="367.59" x2="732.0" y2="367.59" stroke="rgba(255,150,120,0.18)" stroke-width="0.8"/><line x1="431.3" y1="361.23" x2="732.0" y2="361.23" stroke="rgba(255,150,120,0.18)" stroke-width="0.8"/><line x1="431.3" y1="354.88" x2="732.0" y2="354.88" stroke="rgba(255,150,120,0.18)" stroke-width="0.8"/><line x1="431.3" y1="348.52" x2="732.0" y2="348.52" stroke="rgba(255,150,120,0.18)" stroke-width="0.8"/><line x1="431.3" y1="342.17" x2="732.0" y2="342.17" stroke="rgba(255,150,120,0.18)" stroke-width="0.8"/><line x1="431.3" y1="335.82" x2="732.0" y2="335.82" stroke="rgba(255,150,120,0.18)" stroke-width="0.8"/><line x1="431.3" y1="329.46" x2="732.0" y2="329.46" stroke="rgba(255,150,120,0.18)" stroke-width="0.8"/><line x1="431.3" y1="323.11" x2="732.0" y2="323.11" stroke="rgba(255,150,120,0.18)" stroke-width="0.8"/><line x1="431.3" y1="316.75" x2="732.0" y2="316.75" stroke="rgba(255,150,120,0.18)" stroke-width="0.8"/><line x1="431.3" y1="310.40" x2="732.0" y2="310.40" stroke="rgba(255,150,120,0.18)" stroke-width="0.8"/><line x1="431.3" y1="304.05" x2="732.0" y2="304.05" stroke="rgba(255,150,120,0.18)" stroke-width="0.8"/><line x1="431.3" y1="297.69" x2="732.0" y2="297.69" stroke="rgba(255,150,120,0.18)" stroke-width="0.8"/><line x1="431.3" y1="291.34" x2="732.0" y2="291.34" stroke="rgba(255,150,120,0.18)" stroke-width="0.8"/><line x1="431.3" y1="284.98" x2="732.0" y2="284.98" stroke="rgba(255,150,120,0.18)" stroke-width="0.8"/><line x1="431.3" y1="278.63" x2="732.0" y2="278.63" stroke="rgba(255,150,120,0.18)" stroke-width="0.8"/><line x1="431.3" y1="272.28" x2="732.0" y2="272.28" stroke="rgba(255,150,120,0.18)" stroke-width="0.8"/><line x1="431.3" y1="265.92" x2="732.0" y2="265.92" stroke="rgba(255,150,120,0.18)" stroke-width="0.8"/><line x1="431.3" y1="259.57" x2="732.0" y2="259.57" stroke="rgba(255,150,120,0.18)" stroke-width="0.8"/><line x1="431.3" y1="253.21" x2="732.0" y2="253.21" stroke="rgba(255,150,120,0.18)" stroke-width="0.8"/><line x1="431.3" y1="246.86" x2="732.0" y2="246.86" stroke="rgba(255,150,120,0.18)" stroke-width="0.8"/><line x1="431.3" y1="240.51" x2="732.0" y2="240.51" stroke="rgba(255,150,120,0.18)" stroke-width="0.8"/><line x1="436.00" y1="234.5" x2="436.00" y2="385.3" stroke="rgba(255,255,255,0.07)" stroke-width="0.8"/><line x1="446.71" y1="234.5" x2="446.71" y2="385.3" stroke="rgba(255,255,255,0.07)" stroke-width="0.8"/><line x1="457.42" y1="234.5" x2="457.42" y2="385.3" stroke="rgba(255,255,255,0.07)" stroke-width="0.8"/><line x1="468.13" y1="234.5" x2="468.13" y2="385.3" stroke="rgba(255,255,255,0.07)" stroke-width="0.8"/><line x1="478.84" y1="234.5" x2="478.84" y2="385.3" stroke="rgba(255,255,255,0.07)" stroke-width="0.8"/><line x1="489.55" y1="234.5" x2="489.55" y2="385.3" stroke="rgba(255,255,255,0.07)" stroke-width="0.8"/><line x1="500.26" y1="234.5" x2="500.26" y2="385.3" stroke="rgba(255,255,255,0.07)" stroke-width="0.8"/><line x1="510.97" y1="234.5" x2="510.97" y2="385.3" stroke="rgba(255,255,255,0.07)" stroke-width="0.8"/><line x1="521.68" y1="234.5" x2="521.68" y2="385.3" stroke="rgba(255,255,255,0.07)" stroke-width="0.8"/><line x1="532.39" y1="234.5" x2="532.39" y2="385.3" stroke="rgba(255,255,255,0.07)" stroke-width="0.8"/><line x1="543.10" y1="234.5" x2="543.10" y2="385.3" stroke="rgba(255,255,255,0.07)" stroke-width="0.8"/><line x1="553.81" y1="234.5" x2="553.81" y2="385.3" stroke="rgba(255,255,255,0.07)" stroke-width="0.8"/><line x1="564.52" y1="234.5" x2="564.52" y2="385.3" stroke="rgba(255,255,255,0.07)" stroke-width="0.8"/><line x1="575.23" y1="234.5" x2="575.23" y2="385.3" stroke="rgba(255,255,255,0.07)" stroke-width="0.8"/><line x1="585.94" y1="234.5" x2="585.94" y2="385.3" stroke="rgba(255,255,255,0.07)" stroke-width="0.8"/><line x1="596.65" y1="234.5" x2="596.65" y2="385.3" stroke="rgba(255,255,255,0.07)" stroke-width="0.8"/><line x1="607.36" y1="234.5" x2="607.36" y2="385.3" stroke="rgba(255,255,255,0.07)" stroke-width="0.8"/><line x1="618.07" y1="234.5" x2="618.07" y2="385.3" stroke="rgba(255,255,255,0.07)" stroke-width="0.8"/><line x1="628.78" y1="234.5" x2="628.78" y2="385.3" stroke="rgba(255,255,255,0.07)" stroke-width="0.8"/><line x1="639.49" y1="234.5" x2="639.49" y2="385.3" stroke="rgba(255,255,255,0.07)" stroke-width="0.8"/><line x1="650.20" y1="234.5" x2="650.20" y2="385.3" stroke="rgba(255,255,255,0.07)" stroke-width="0.8"/><line x1="660.91" y1="234.5" x2="660.91" y2="385.3" stroke="rgba(255,255,255,0.07)" stroke-width="0.8"/><line x1="671.62" y1="234.5" x2="671.62" y2="385.3" stroke="rgba(255,255,255,0.07)" stroke-width="0.8"/><line x1="682.33" y1="234.5" x2="682.33" y2="385.3" stroke="rgba(255,255,255,0.07)" stroke-width="0.8"/><line x1="693.04" y1="234.5" x2="693.04" y2="385.3" stroke="rgba(255,255,255,0.07)" stroke-width="0.8"/><line x1="703.75" y1="234.5" x2="703.75" y2="385.3" stroke="rgba(255,255,255,0.07)" stroke-width="0.8"/><line x1="714.46" y1="234.5" x2="714.46" y2="385.3" stroke="rgba(255,255,255,0.07)" stroke-width="0.8"/><line x1="725.17" y1="234.5" x2="725.17" y2="385.3" stroke="rgba(255,255,255,0.07)" stroke-width="0.8"/></g><line x1="431.3" y1="310.40" x2="732.0" y2="310.40" stroke="rgba(120,60,50,0.45)" stroke-width="0.9"/><line x1="431.3" y1="244.13" x2="732.0" y2="244.13" stroke="rgba(225,60,40,0.4)" stroke-width="1.05"/><line x1="431.3" y1="370.16" x2="732.0" y2="370.16" stroke="rgba(225,60,40,0.4)" stroke-width="1.05"/><g transform="translate(427.50 381.59) scale(0.125)"><text x="0" y="0" font-family="Liberation Mono" font-size="38.40" font-weight="normal" fill="#111" stroke="#111" stroke-width="0.9" text-anchor="end" textLength="52.80" lengthAdjust="spacingAndGlyphs">-220</text></g><g transform="translate(427.50 375.24) scale(0.125)"><text x="0" y="0" font-family="Liberation Mono" font-size="38.40" font-weight="normal" fill="#111" stroke="#111" stroke-width="0.9" text-anchor="end" textLength="52.80" lengthAdjust="spacingAndGlyphs">-200</text></g><g transform="translate(427.50 368.89) scale(0.125)"><text x="0" y="0" font-family="Liberation Mono" font-size="38.40" font-weight="normal" fill="#111" stroke="#111" stroke-width="0.9" text-anchor="end" textLength="52.80" lengthAdjust="spacingAndGlyphs">-180</text></g><g transform="translate(427.50 362.53) scale(0.125)"><text x="0" y="0" font-family="Liberation Mono" font-size="38.40" font-weight="normal" fill="#111" stroke="#111" stroke-width="0.9" text-anchor="end" textLength="52.80" lengthAdjust="spacingAndGlyphs">-160</text></g><g transform="translate(427.50 356.18) scale(0.125)"><text x="0" y="0" font-family="Liberation Mono" font-size="38.40" font-weight="normal" fill="#111" stroke="#111" stroke-width="0.9" text-anchor="end" textLength="52.80" lengthAdjust="spacingAndGlyphs">-140</text></g><g transform="translate(427.50 349.82) scale(0.125)"><text x="0" y="0" font-family="Liberation Mono" font-size="38.40" font-weight="normal" fill="#111" stroke="#111" stroke-width="0.9" text-anchor="end" textLength="52.80" lengthAdjust="spacingAndGlyphs">-120</text></g><g transform="translate(427.50 343.47) scale(0.125)"><text x="0" y="0" font-family="Liberation Mono" font-size="38.40" font-weight="normal" fill="#111" stroke="#111" stroke-width="0.9" text-anchor="end" textLength="52.80" lengthAdjust="spacingAndGlyphs">-100</text></g><g transform="translate(427.50 337.12) scale(0.125)"><text x="0" y="0" font-family="Liberation Mono" font-size="38.40" font-weight="normal" fill="#111" stroke="#111" stroke-width="0.9" text-anchor="end" textLength="39.60" lengthAdjust="spacingAndGlyphs">-80</text></g><g transform="translate(427.50 330.76) scale(0.125)"><text x="0" y="0" font-family="Liberation Mono" font-size="38.40" font-weight="normal" fill="#111" stroke="#111" stroke-width="0.9" text-anchor="end" textLength="39.60" lengthAdjust="spacingAndGlyphs">-60</text></g><g transform="translate(427.50 324.41) scale(0.125)"><text x="0" y="0" font-family="Liberation Mono" font-size="38.40" font-weight="normal" fill="#111" stroke="#111" stroke-width="0.9" text-anchor="end" textLength="39.60" lengthAdjust="spacingAndGlyphs">-40</text></g><g transform="translate(427.50 318.05) scale(0.125)"><text x="0" y="0" font-family="Liberation Mono" font-size="38.40" font-weight="normal" fill="#111" stroke="#111" stroke-width="0.9" text-anchor="end" textLength="39.60" lengthAdjust="spacingAndGlyphs">-20</text></g><g transform="translate(427.50 311.70) scale(0.125)"><text x="0" y="0" font-family="Liberation Mono" font-size="38.40" font-weight="normal" fill="#111" stroke="#111" stroke-width="0.9" text-anchor="end" textLength="13.20" lengthAdjust="spacingAndGlyphs">0</text></g><g transform="translate(427.50 305.35) scale(0.125)"><text x="0" y="0" font-family="Liberation Mono" font-size="38.40" font-weight="normal" fill="#111" stroke="#111" stroke-width="0.9" text-anchor="end" textLength="26.40" lengthAdjust="spacingAndGlyphs">20</text></g><g transform="translate(427.50 298.99) scale(0.125)"><text x="0" y="0" font-family="Liberation Mono" font-size="38.40" font-weight="normal" fill="#111" stroke="#111" stroke-width="0.9" text-anchor="end" textLength="26.40" lengthAdjust="spacingAndGlyphs">40</text></g><g transform="translate(427.50 292.64) scale(0.125)"><text x="0" y="0" font-family="Liberation Mono" font-size="38.40" font-weight="normal" fill="#111" stroke="#111" stroke-width="0.9" text-anchor="end" textLength="26.40" lengthAdjust="spacingAndGlyphs">60</text></g><g transform="translate(427.50 286.28) scale(0.125)"><text x="0" y="0" font-family="Liberation Mono" font-size="38.40" font-weight="normal" fill="#111" stroke="#111" stroke-width="0.9" text-anchor="end" textLength="26.40" lengthAdjust="spacingAndGlyphs">80</text></g><g transform="translate(427.50 279.93) scale(0.125)"><text x="0" y="0" font-family="Liberation Mono" font-size="38.40" font-weight="normal" fill="#111" stroke="#111" stroke-width="0.9" text-anchor="end" textLength="39.60" lengthAdjust="spacingAndGlyphs">100</text></g><g transform="translate(427.50 273.58) scale(0.125)"><text x="0" y="0" font-family="Liberation Mono" font-size="38.40" font-weight="normal" fill="#111" stroke="#111" stroke-width="0.9" text-anchor="end" textLength="39.60" lengthAdjust="spacingAndGlyphs">120</text></g><g transform="translate(427.50 267.22) scale(0.125)"><text x="0" y="0" font-family="Liberation Mono" font-size="38.40" font-weight="normal" fill="#111" stroke="#111" stroke-width="0.9" text-anchor="end" textLength="39.60" lengthAdjust="spacingAndGlyphs">140</text></g><g transform="translate(427.50 260.87) scale(0.125)"><text x="0" y="0" font-family="Liberation Mono" font-size="38.40" font-weight="normal" fill="#111" stroke="#111" stroke-width="0.9" text-anchor="end" textLength="39.60" lengthAdjust="spacingAndGlyphs">160</text></g><g transform="translate(427.50 254.51) scale(0.125)"><text x="0" y="0" font-family="Liberation Mono" font-size="38.40" font-weight="normal" fill="#111" stroke="#111" stroke-width="0.9" text-anchor="end" textLength="39.60" lengthAdjust="spacingAndGlyphs">180</text></g><g transform="translate(427.50 248.16) scale(0.125)"><text x="0" y="0" font-family="Liberation Mono" font-size="38.40" font-weight="normal" fill="#111" stroke="#111" stroke-width="0.9" text-anchor="end" textLength="39.60" lengthAdjust="spacingAndGlyphs">200</text></g><g transform="translate(427.50 241.81) scale(0.125)"><text x="0" y="0" font-family="Liberation Mono" font-size="38.40" font-weight="normal" fill="#111" stroke="#111" stroke-width="0.9" text-anchor="end" textLength="39.60" lengthAdjust="spacingAndGlyphs">220</text></g><g transform="translate(436.00 389.30) scale(0.125)"><text x="0" y="0" font-family="Liberation Mono" font-size="30.40" font-weight="normal" fill="#111" stroke="#111" stroke-width="0.9" text-anchor="middle" textLength="145.60" lengthAdjust="spacingAndGlyphs">Thu 21 Jan</text></g><g transform="translate(478.00 389.30) scale(0.125)"><text x="0" y="0" font-family="Liberation Mono" font-size="30.40" font-weight="normal" fill="#111" stroke="#111" stroke-width="0.9" text-anchor="middle" textLength="145.60" lengthAdjust="spacingAndGlyphs">Fri 22 Jan</text></g><g transform="translate(521.50 389.30) scale(0.125)"><text x="0" y="0" font-family="Liberation Mono" font-size="30.40" font-weight="normal" fill="#111" stroke="#111" stroke-width="0.9" text-anchor="middle" textLength="145.60" lengthAdjust="spacingAndGlyphs">Sat 23 Jan</text></g><g transform="translate(564.00 389.30) scale(0.125)"><text x="0" y="0" font-family="Liberation Mono" font-size="30.40" font-weight="normal" fill="#111" stroke="#111" stroke-width="0.9" text-anchor="middle" textLength="145.60" lengthAdjust="spacingAndGlyphs">Sun 24 Jan</text></g><g transform="translate(607.70 389.30) scale(0.125)"><text x="0" y="0" font-family="Liberation Mono" font-size="30.40" font-weight="normal" fill="#111" stroke="#111" stroke-width="0.9" text-anchor="middle" textLength="145.60" lengthAdjust="spacingAndGlyphs">Mon 25 Jan</text></g><g transform="translate(650.50 389.30) scale(0.125)"><text x="0" y="0" font-family="Liberation Mono" font-size="30.40" font-weight="normal" fill="#111" stroke="#111" stroke-width="0.9" text-anchor="middle" textLength="145.60" lengthAdjust="spacingAndGlyphs">Tue 26 Jan</text></g><g transform="translate(693.00 389.30) scale(0.125)"><text x="0" y="0" font-family="Liberation Mono" font-size="30.40" font-weight="normal" fill="#111" stroke="#111" stroke-width="0.9" text-anchor="middle" textLength="145.60" lengthAdjust="spacingAndGlyphs">Wed 27 Jan</text></g><line x1="430.8" y1="232.5" x2="430.8" y2="386.3" stroke="#c8c8c8" stroke-width="1.3"/><line x1="429.3" y1="385.3" x2="735.0" y2="385.3" stroke="#c8c8c8" stroke-width="1.1"/><path d="M429.3 232.5 l1.5 -1.8 l1.5 1.8 z" fill="#666"/><path d="M735.0 383.8 l2 1.5 l-2 1.5 z" fill="#666"/><g transform="translate(575.80 233.50) scale(0.125)"><text x="0" y="0" font-family="Liberation Mono" font-size="40.00" font-weight="normal" fill="#222" stroke="#222" stroke-width="0.9" text-anchor="middle" textLength="174.96" lengthAdjust="spacingAndGlyphs">Last Week</text></g><g transform="rotate(-90 414.3 309.9)"><g transform="translate(414.30 309.90) scale(0.125)"><text x="0" y="0" font-family="Liberation Mono" font-size="40.00" font-weight="normal" fill="#222" stroke="#222" stroke-width="0.9" text-anchor="middle" textLength="96.00" lengthAdjust="spacingAndGlyphs">Mbit/s</text></g></g><g transform="rotate(90 738.5 246.5)"><g transform="translate(738.50 246.50) scale(0.125)"><text x="0" y="0" font-family="Liberation Mono" font-size="20.80" font-weight="normal" fill="#ccc" stroke="#ccc" stroke-width="0.9" text-anchor="middle">RRDTOOL / TOBI OETIKER</text></g></g><rect x="415.8" y="391.5" width="3.0" height="3.0" fill="#4caf3c"/><g transform="translate(420.40 394.60) scale(0.125)"><text x="0" y="0" font-family="Liberation Mono" font-size="32.80" font-weight="normal" fill="#111" stroke="#111" stroke-width="0.9" text-anchor="start" textLength="134.40" lengthAdjust="spacingAndGlyphs">Download</text></g><rect x="441.5" y="391.5" width="3.0" height="3.0" fill="#3a5fc0"/><g transform="translate(446.20 394.60) scale(0.125)"><text x="0" y="0" font-family="Liberation Mono" font-size="32.80" font-weight="normal" fill="#111" stroke="#111" stroke-width="0.9" text-anchor="start" textLength="100.80" lengthAdjust="spacingAndGlyphs">Upload</text></g><rect x="463.40000000000003" y="391.5" width="3.0" height="3.0" fill="#e03a1a"/><g transform="translate(468.20 394.60) scale(0.125)"><text x="0" y="0" font-family="Liberation Mono" font-size="32.80" font-weight="normal" fill="#111" stroke="#111" stroke-width="0.9" text-anchor="start" textLength="50.40" lengthAdjust="spacingAndGlyphs">Avg</text></g><g transform="translate(415.80 398.70) scale(0.125)"><text x="0" y="0" font-family="Liberation Mono" font-size="32.80" font-weight="normal" fill="#111" stroke="#111" stroke-width="0.9" text-anchor="start" textLength="588.00" lengthAdjust="spacingAndGlyphs">Last download bandwidth: 219.6 Mb/s</text></g><g transform="translate(415.80 402.90) scale(0.125)"><text x="0" y="0" font-family="Liberation Mono" font-size="32.80" font-weight="normal" fill="#111" stroke="#111" stroke-width="0.9" text-anchor="start" textLength="554.40" lengthAdjust="spacingAndGlyphs">Last upload bandwidth: 181.5 Mb/s</text></g><g transform="translate(415.80 407.00) scale(0.125)"><text x="0" y="0" font-family="Liberation Mono" font-size="32.80" font-weight="normal" fill="#111" stroke="#111" stroke-width="0.9" text-anchor="start" textLength="554.40" lengthAdjust="spacingAndGlyphs">Avg download bandwidth 208.6 Mb/s</text></g><g transform="translate(415.80 411.20) scale(0.125)"><text x="0" y="0" font-family="Liberation Mono" font-size="32.80" font-weight="normal" fill="#111" stroke="#111" stroke-width="0.9" text-anchor="start" textLength="520.80" lengthAdjust="spacingAndGlyphs">Avg upload bandwidth 188.1 Mb/s</text></g>
<rect x="791.2" y="234.5" width="300.7" height="150.8" fill="#fdfdfd"/><line x1="797.55" y1="234.5" x2="797.55" y2="385.3" stroke="rgba(0,0,0,0.03)" stroke-width="0.8"/><line x1="807.25" y1="234.5" x2="807.25" y2="385.3" stroke="rgba(0,0,0,0.03)" stroke-width="0.8"/><line x1="816.95" y1="234.5" x2="816.95" y2="385.3" stroke="rgba(0,0,0,0.03)" stroke-width="0.8"/><line x1="826.65" y1="234.5" x2="826.65" y2="385.3" stroke="rgba(0,0,0,0.03)" stroke-width="0.8"/><line x1="836.35" y1="234.5" x2="836.35" y2="385.3" stroke="rgba(0,0,0,0.03)" stroke-width="0.8"/><line x1="846.05" y1="234.5" x2="846.05" y2="385.3" stroke="rgba(0,0,0,0.03)" stroke-width="0.8"/><line x1="855.75" y1="234.5" x2="855.75" y2="385.3" stroke="rgba(0,0,0,0.03)" stroke-width="0.8"/><line x1="865.45" y1="234.5" x2="865.45" y2="385.3" stroke="rgba(0,0,0,0.03)" stroke-width="0.8"/><line x1="875.15" y1="234.5" x2="875.15" y2="385.3" stroke="rgba(0,0,0,0.03)" stroke-width="0.8"/><line x1="884.85" y1="234.5" x2="884.85" y2="385.3" stroke="rgba(0,0,0,0.03)" stroke-width="0.8"/><line x1="894.55" y1="234.5" x2="894.55" y2="385.3" stroke="rgba(0,0,0,0.03)" stroke-width="0.8"/><line x1="904.25" y1="234.5" x2="904.25" y2="385.3" stroke="rgba(0,0,0,0.03)" stroke-width="0.8"/><line x1="913.95" y1="234.5" x2="913.95" y2="385.3" stroke="rgba(0,0,0,0.03)" stroke-width="0.8"/><line x1="923.65" y1="234.5" x2="923.65" y2="385.3" stroke="rgba(0,0,0,0.03)" stroke-width="0.8"/><line x1="933.35" y1="234.5" x2="933.35" y2="385.3" stroke="rgba(0,0,0,0.03)" stroke-width="0.8"/><line x1="943.05" y1="234.5" x2="943.05" y2="385.3" stroke="rgba(0,0,0,0.03)" stroke-width="0.8"/><line x1="952.75" y1="234.5" x2="952.75" y2="385.3" stroke="rgba(0,0,0,0.03)" stroke-width="0.8"/><line x1="962.45" y1="234.5" x2="962.45" y2="385.3" stroke="rgba(0,0,0,0.03)" stroke-width="0.8"/><line x1="972.15" y1="234.5" x2="972.15" y2="385.3" stroke="rgba(0,0,0,0.03)" stroke-width="0.8"/><line x1="981.85" y1="234.5" x2="981.85" y2="385.3" stroke="rgba(0,0,0,0.03)" stroke-width="0.8"/><line x1="991.55" y1="234.5" x2="991.55" y2="385.3" stroke="rgba(0,0,0,0.03)" stroke-width="0.8"/><line x1="1001.25" y1="234.5" x2="1001.25" y2="385.3" stroke="rgba(0,0,0,0.03)" stroke-width="0.8"/><line x1="1010.95" y1="234.5" x2="1010.95" y2="385.3" stroke="rgba(0,0,0,0.03)" stroke-width="0.8"/><line x1="1020.65" y1="234.5" x2="1020.65" y2="385.3" stroke="rgba(0,0,0,0.03)" stroke-width="0.8"/><line x1="1030.35" y1="234.5" x2="1030.35" y2="385.3" stroke="rgba(0,0,0,0.03)" stroke-width="0.8"/><line x1="1040.05" y1="234.5" x2="1040.05" y2="385.3" stroke="rgba(0,0,0,0.03)" stroke-width="0.8"/><line x1="1049.75" y1="234.5" x2="1049.75" y2="385.3" stroke="rgba(0,0,0,0.03)" stroke-width="0.8"/><line x1="1059.45" y1="234.5" x2="1059.45" y2="385.3" stroke="rgba(0,0,0,0.03)" stroke-width="0.8"/><line x1="1069.15" y1="234.5" x2="1069.15" y2="385.3" stroke="rgba(0,0,0,0.03)" stroke-width="0.8"/><line x1="1078.85" y1="234.5" x2="1078.85" y2="385.3" stroke="rgba(0,0,0,0.03)" stroke-width="0.8"/><line x1="1088.55" y1="234.5" x2="1088.55" y2="385.3" stroke="rgba(0,0,0,0.03)" stroke-width="0.8"/><line x1="791.2" y1="384.64" x2="1091.9" y2="384.64" stroke="rgba(0,0,0,0.03)" stroke-width="0.8"/><line x1="791.2" y1="378.08" x2="1091.9" y2="378.08" stroke="rgba(0,0,0,0.03)" stroke-width="0.8"/><line x1="791.2" y1="371.52" x2="1091.9" y2="371.52" stroke="rgba(0,0,0,0.03)" stroke-width="0.8"/><line x1="791.2" y1="364.96" x2="1091.9" y2="364.96" stroke="rgba(0,0,0,0.03)" stroke-width="0.8"/><line x1="791.2" y1="358.40" x2="1091.9" y2="358.40" stroke="rgba(0,0,0,0.03)" stroke-width="0.8"/><line x1="791.2" y1="351.84" x2="1091.9" y2="351.84" stroke="rgba(0,0,0,0.03)" stroke-width="0.8"/><line x1="791.2" y1="345.28" x2="1091.9" y2="345.28" stroke="rgba(0,0,0,0.03)" stroke-width="0.8"/><line x1="791.2" y1="338.72" x2="1091.9" y2="338.72" stroke="rgba(0,0,0,0.03)" stroke-width="0.8"/><line x1="791.2" y1="332.16" x2="1091.9" y2="332.16" stroke="rgba(0,0,0,0.03)" stroke-width="0.8"/><line x1="791.2" y1="325.60" x2="1091.9" y2="325.60" stroke="rgba(0,0,0,0.03)" stroke-width="0.8"/><line x1="791.2" y1="319.04" x2="1091.9" y2="319.04" stroke="rgba(0,0,0,0.03)" stroke-width="0.8"/><line x1="791.2" y1="312.48" x2="1091.9" y2="312.48" stroke="rgba(0,0,0,0.03)" stroke-width="0.8"/><line x1="791.2" y1="305.92" x2="1091.9" y2="305.92" stroke="rgba(0,0,0,0.03)" stroke-width="0.8"/><line x1="791.2" y1="299.36" x2="1091.9" y2="299.36" stroke="rgba(0,0,0,0.03)" stroke-width="0.8"/><line x1="791.2" y1="292.80" x2="1091.9" y2="292.80" stroke="rgba(0,0,0,0.03)" stroke-width="0.8"/><line x1="791.2" y1="286.24" x2="1091.9" y2="286.24" stroke="rgba(0,0,0,0.03)" stroke-width="0.8"/><line x1="791.2" y1="279.68" x2="1091.9" y2="279.68" stroke="rgba(0,0,0,0.03)" stroke-width="0.8"/><line x1="791.2" y1="273.12" x2="1091.9" y2="273.12" stroke="rgba(0,0,0,0.03)" stroke-width="0.8"/><line x1="791.2" y1="266.56" x2="1091.9" y2="266.56" stroke="rgba(0,0,0,0.03)" stroke-width="0.8"/><line x1="791.2" y1="260.00" x2="1091.9" y2="260.00" stroke="rgba(0,0,0,0.03)" stroke-width="0.8"/><line x1="791.2" y1="253.44" x2="1091.9" y2="253.44" stroke="rgba(0,0,0,0.03)" stroke-width="0.8"/><line x1="791.2" y1="246.88" x2="1091.9" y2="246.88" stroke="rgba(0,0,0,0.03)" stroke-width="0.8"/><line x1="791.2" y1="240.32" x2="1091.9" y2="240.32" stroke="rgba(0,0,0,0.03)" stroke-width="0.8"/><line x1="792.70" y1="234.5" x2="792.70" y2="385.3" stroke="rgba(255,0,0,0.055)" stroke-width="0.8"/><line x1="802.40" y1="234.5" x2="802.40" y2="385.3" stroke="rgba(255,0,0,0.055)" stroke-width="0.8"/><line x1="812.10" y1="234.5" x2="812.10" y2="385.3" stroke="rgba(255,0,0,0.055)" stroke-width="0.8"/><line x1="821.80" y1="234.5" x2="821.80" y2="385.3" stroke="rgba(255,0,0,0.055)" stroke-width="0.8"/><line x1="831.50" y1="234.5" x2="831.50" y2="385.3" stroke="rgba(255,0,0,0.055)" stroke-width="0.8"/><line x1="841.20" y1="234.5" x2="841.20" y2="385.3" stroke="rgba(255,0,0,0.055)" stroke-width="0.8"/><line x1="850.90" y1="234.5" x2="850.90" y2="385.3" stroke="rgba(255,0,0,0.055)" stroke-width="0.8"/><line x1="860.60" y1="234.5" x2="860.60" y2="385.3" stroke="rgba(255,0,0,0.055)" stroke-width="0.8"/><line x1="870.30" y1="234.5" x2="870.30" y2="385.3" stroke="rgba(255,0,0,0.055)" stroke-width="0.8"/><line x1="880.00" y1="234.5" x2="880.00" y2="385.3" stroke="rgba(255,0,0,0.055)" stroke-width="0.8"/><line x1="889.70" y1="234.5" x2="889.70" y2="385.3" stroke="rgba(255,0,0,0.055)" stroke-width="0.8"/><line x1="899.40" y1="234.5" x2="899.40" y2="385.3" stroke="rgba(255,0,0,0.055)" stroke-width="0.8"/><line x1="909.10" y1="234.5" x2="909.10" y2="385.3" stroke="rgba(255,0,0,0.055)" stroke-width="0.8"/><line x1="918.80" y1="234.5" x2="918.80" y2="385.3" stroke="rgba(255,0,0,0.055)" stroke-width="0.8"/><line x1="928.50" y1="234.5" x2="928.50" y2="385.3" stroke="rgba(255,0,0,0.055)" stroke-width="0.8"/><line x1="938.20" y1="234.5" x2="938.20" y2="385.3" stroke="rgba(255,0,0,0.055)" stroke-width="0.8"/><line x1="947.90" y1="234.5" x2="947.90" y2="385.3" stroke="rgba(255,0,0,0.055)" stroke-width="0.8"/><line x1="957.60" y1="234.5" x2="957.60" y2="385.3" stroke="rgba(255,0,0,0.055)" stroke-width="0.8"/><line x1="967.30" y1="234.5" x2="967.30" y2="385.3" stroke="rgba(255,0,0,0.055)" stroke-width="0.8"/><line x1="977.00" y1="234.5" x2="977.00" y2="385.3" stroke="rgba(255,0,0,0.055)" stroke-width="0.8"/><line x1="986.70" y1="234.5" x2="986.70" y2="385.3" stroke="rgba(255,0,0,0.055)" stroke-width="0.8"/><line x1="996.40" y1="234.5" x2="996.40" y2="385.3" stroke="rgba(255,0,0,0.055)" stroke-width="0.8"/><line x1="1006.10" y1="234.5" x2="1006.10" y2="385.3" stroke="rgba(255,0,0,0.055)" stroke-width="0.8"/><line x1="1015.80" y1="234.5" x2="1015.80" y2="385.3" stroke="rgba(255,0,0,0.055)" stroke-width="0.8"/><line x1="1025.50" y1="234.5" x2="1025.50" y2="385.3" stroke="rgba(255,0,0,0.055)" stroke-width="0.8"/><line x1="1035.20" y1="234.5" x2="1035.20" y2="385.3" stroke="rgba(255,0,0,0.055)" stroke-width="0.8"/><line x1="1044.90" y1="234.5" x2="1044.90" y2="385.3" stroke="rgba(255,0,0,0.055)" stroke-width="0.8"/><line x1="1054.60" y1="234.5" x2="1054.60" y2="385.3" stroke="rgba(255,0,0,0.055)" stroke-width="0.8"/><line x1="1064.30" y1="234.5" x2="1064.30" y2="385.3" stroke="rgba(255,0,0,0.055)" stroke-width="0.8"/><line x1="1074.00" y1="234.5" x2="1074.00" y2="385.3" stroke="rgba(255,0,0,0.055)" stroke-width="0.8"/><line x1="1083.70" y1="234.5" x2="1083.70" y2="385.3" stroke="rgba(255,0,0,0.055)" stroke-width="0.8"/><line x1="791.2" y1="381.36" x2="1091.9" y2="381.36" stroke="rgba(255,0,0,0.055)" stroke-width="0.8"/><line x1="791.2" y1="374.80" x2="1091.9" y2="374.80" stroke="rgba(255,0,0,0.055)" stroke-width="0.8"/><line x1="791.2" y1="368.24" x2="1091.9" y2="368.24" stroke="rgba(255,0,0,0.055)" stroke-width="0.8"/><line x1="791.2" y1="361.68" x2="1091.9" y2="361.68" stroke="rgba(255,0,0,0.055)" stroke-width="0.8"/><line x1="791.2" y1="355.12" x2="1091.9" y2="355.12" stroke="rgba(255,0,0,0.055)" stroke-width="0.8"/><line x1="791.2" y1="348.56" x2="1091.9" y2="348.56" stroke="rgba(255,0,0,0.055)" stroke-width="0.8"/><line x1="791.2" y1="342.00" x2="1091.9" y2="342.00" stroke="rgba(255,0,0,0.055)" stroke-width="0.8"/><line x1="791.2" y1="335.44" x2="1091.9" y2="335.44" stroke="rgba(255,0,0,0.055)" stroke-width="0.8"/><line x1="791.2" y1="328.88" x2="1091.9" y2="328.88" stroke="rgba(255,0,0,0.055)" stroke-width="0.8"/><line x1="791.2" y1="322.32" x2="1091.9" y2="322.32" stroke="rgba(255,0,0,0.055)" stroke-width="0.8"/><line x1="791.2" y1="315.76" x2="1091.9" y2="315.76" stroke="rgba(255,0,0,0.055)" stroke-width="0.8"/><line x1="791.2" y1="309.20" x2="1091.9" y2="309.20" stroke="rgba(255,0,0,0.055)" stroke-width="0.8"/><line x1="791.2" y1="302.64" x2="1091.9" y2="302.64" stroke="rgba(255,0,0,0.055)" stroke-width="0.8"/><line x1="791.2" y1="296.08" x2="1091.9" y2="296.08" stroke="rgba(255,0,0,0.055)" stroke-width="0.8"/><line x1="791.2" y1="289.52" x2="1091.9" y2="289.52" stroke="rgba(255,0,0,0.055)" stroke-width="0.8"/><line x1="791.2" y1="282.96" x2="1091.9" y2="282.96" stroke="rgba(255,0,0,0.055)" stroke-width="0.8"/><line x1="791.2" y1="276.40" x2="1091.9" y2="276.40" stroke="rgba(255,0,0,0.055)" stroke-width="0.8"/><line x1="791.2" y1="269.84" x2="1091.9" y2="269.84" stroke="rgba(255,0,0,0.055)" stroke-width="0.8"/><line x1="791.2" y1="263.28" x2="1091.9" y2="263.28" stroke="rgba(255,0,0,0.055)" stroke-width="0.8"/><line x1="791.2" y1="256.72" x2="1091.9" y2="256.72" stroke="rgba(255,0,0,0.055)" stroke-width="0.8"/><line x1="791.2" y1="250.16" x2="1091.9" y2="250.16" stroke="rgba(255,0,0,0.055)" stroke-width="0.8"/><line x1="791.2" y1="243.60" x2="1091.9" y2="243.60" stroke="rgba(255,0,0,0.055)" stroke-width="0.8"/><line x1="791.2" y1="237.04" x2="1091.9" y2="237.04" stroke="rgba(255,0,0,0.055)" stroke-width="0.8"/><path d="M1026.20 309.20 L1026.20 240.03 L1027.20 240.03 L1027.20 238.90 L1028.20 238.90 L1028.20 240.01 L1029.20 240.01 L1029.20 246.88 L1030.20 246.88 L1030.20 238.58 L1031.20 238.58 L1031.20 242.43 L1032.20 242.43 L1032.20 239.13 L1033.20 239.13 L1033.20 239.86 L1034.20 239.86 L1034.20 241.47 L1035.20 241.47 L1035.20 236.97 L1036.20 236.97 L1036.20 240.32 L1037.20 240.32 L1037.20 240.00 L1038.20 240.00 L1038.20 242.83 L1039.20 242.83 L1039.20 239.37 L1040.20 239.37 L1040.20 240.89 L1041.20 240.89 L1041.20 238.54 L1042.20 238.54 L1042.20 239.16 L1043.20 239.16 L1043.20 239.48 L1044.20 239.48 L1044.20 242.12 L1045.20 242.12 L1045.20 240.47 L1046.20 240.47 L1046.20 241.14 L1047.20 241.14 L1047.20 242.54 L1048.20 242.54 L1048.20 242.35 L1049.20 242.35 L1049.20 241.21 L1050.20 241.21 L1050.20 240.81 L1051.20 240.81 L1051.20 242.49 L1052.20 242.49 L1052.20 241.96 L1053.20 241.96 L1053.20 238.46 L1054.20 238.46 L1054.20 241.74 L1055.20 241.74 L1055.20 239.38 L1056.20 239.38 L1056.20 241.37 L1057.20 241.37 L1057.20 238.74 L1058.20 238.74 L1058.20 239.01 L1059.20 239.01 L1059.20 239.79 L1060.20 239.79 L1060.20 242.26 L1061.20 242.26 L1061.20 238.60 L1062.20 238.60 L1062.20 239.46 L1063.20 239.46 L1063.20 239.13 L1064.20 239.13 L1064.20 240.54 L1065.20 240.54 L1065.20 241.51 L1066.20 241.51 L1066.20 239.58 L1067.20 239.58 L1067.20 250.82 L1068.20 250.82 L1068.20 240.63 L1069.20 240.63 L1069.20 238.50 L1070.20 238.50 L1070.20 240.45 L1071.20 240.45 L1071.20 240.69 L1072.20 240.69 L1072.20 238.67 L1073.20 238.67 L1073.20 241.71 L1074.20 241.71 L1074.20 241.38 L1075.20 241.38 L1075.20 238.57 L1076.20 238.57 L1076.20 240.11 L1077.20 240.11 L1077.20 248.52 L1078.20 248.52 L1078.20 242.05 L1079.20 242.05 L1079.20 241.46 L1080.20 241.46 L1080.20 242.46 L1081.20 242.46 L1081.20 239.03 L1082.20 239.03 L1082.20 239.72 L1083.20 239.72 L1083.20 241.22 L1084.20 241.22 L1084.20 240.47 L1085.20 240.47 L1085.20 249.50 L1086.20 249.50 L1086.20 241.88 L1087.20 241.88 L1087.20 238.80 L1088.20 238.80 L1088.20 236.89 L1089.20 236.89 L1089.20 236.90 L1090.20 236.90 L1090.20 240.37 L1091.00 240.37 L1091.00 309.20 Z" fill="#63aa44"/><path d="M1026.20 309.20 L1026.20 371.00 L1027.20 371.00 L1027.20 371.40 L1028.20 371.40 L1028.20 371.40 L1029.20 371.40 L1029.20 371.00 L1030.20 371.00 L1030.20 371.00 L1031.20 371.00 L1031.20 369.30 L1032.20 369.30 L1032.20 369.30 L1033.20 369.30 L1033.20 370.50 L1034.20 370.50 L1034.20 371.40 L1035.20 371.40 L1035.20 371.40 L1036.20 371.40 L1036.20 371.00 L1037.20 371.00 L1037.20 371.00 L1038.20 371.00 L1038.20 371.00 L1039.20 371.00 L1039.20 371.00 L1040.20 371.00 L1040.20 371.40 L1041.20 371.40 L1041.20 371.00 L1042.20 371.00 L1042.20 371.00 L1043.20 371.00 L1043.20 371.00 L1044.20 371.00 L1044.20 371.40 L1045.20 371.40 L1045.20 371.00 L1046.20 371.00 L1046.20 371.00 L1047.20 371.00 L1047.20 370.50 L1048.20 370.50 L1048.20 371.00 L1049.20 371.00 L1049.20 371.40 L1050.20 371.40 L1050.20 371.00 L1051.20 371.00 L1051.20 371.00 L1052.20 371.00 L1052.20 371.00 L1053.20 371.00 L1053.20 371.40 L1054.20 371.40 L1054.20 371.00 L1055.20 371.00 L1055.20 370.50 L1056.20 370.50 L1056.20 371.40 L1057.20 371.40 L1057.20 371.00 L1058.20 371.00 L1058.20 371.40 L1059.20 371.40 L1059.20 370.50 L1060.20 370.50 L1060.20 370.50 L1061.20 370.50 L1061.20 371.00 L1062.20 371.00 L1062.20 371.40 L1063.20 371.40 L1063.20 371.00 L1064.20 371.00 L1064.20 371.40 L1065.20 371.40 L1065.20 371.00 L1066.20 371.00 L1066.20 371.40 L1067.20 371.40 L1067.20 371.00 L1068.20 371.00 L1068.20 369.30 L1069.20 369.30 L1069.20 369.30 L1070.20 369.30 L1070.20 371.00 L1071.20 371.00 L1071.20 371.00 L1072.20 371.00 L1072.20 370.50 L1073.20 370.50 L1073.20 371.00 L1074.20 371.00 L1074.20 370.50 L1075.20 370.50 L1075.20 370.50 L1076.20 370.50 L1076.20 371.00 L1077.20 371.00 L1077.20 369.30 L1078.20 369.30 L1078.20 371.40 L1079.20 371.40 L1079.20 370.50 L1080.20 370.50 L1080.20 371.00 L1081.20 371.00 L1081.20 371.00 L1082.20 371.00 L1082.20 371.00 L1083.20 371.00 L1083.20 371.00 L1084.20 371.00 L1084.20 371.00 L1085.20 371.00 L1085.20 369.30 L1086.20 369.30 L1086.20 369.30 L1087.20 369.30 L1087.20 371.40 L1088.20 371.40 L1088.20 371.00 L1089.20 371.00 L1089.20 371.00 L1090.20 371.00 L1090.20 370.50 L1091.00 370.50 L1091.00 309.20 Z" fill="#3e62ad"/><g style="mix-blend-mode:screen"><line x1="792.70" y1="234.5" x2="792.70" y2="385.3" stroke="rgba(255,150,120,0.22)" stroke-width="0.8"/><line x1="802.40" y1="234.5" x2="802.40" y2="385.3" stroke="rgba(255,150,120,0.22)" stroke-width="0.8"/><line x1="812.10" y1="234.5" x2="812.10" y2="385.3" stroke="rgba(255,150,120,0.22)" stroke-width="0.8"/><line x1="821.80" y1="234.5" x2="821.80" y2="385.3" stroke="rgba(255,150,120,0.22)" stroke-width="0.8"/><line x1="831.50" y1="234.5" x2="831.50" y2="385.3" stroke="rgba(255,150,120,0.22)" stroke-width="0.8"/><line x1="841.20" y1="234.5" x2="841.20" y2="385.3" stroke="rgba(255,150,120,0.22)" stroke-width="0.8"/><line x1="850.90" y1="234.5" x2="850.90" y2="385.3" stroke="rgba(255,150,120,0.22)" stroke-width="0.8"/><line x1="860.60" y1="234.5" x2="860.60" y2="385.3" stroke="rgba(255,150,120,0.22)" stroke-width="0.8"/><line x1="870.30" y1="234.5" x2="870.30" y2="385.3" stroke="rgba(255,150,120,0.22)" stroke-width="0.8"/><line x1="880.00" y1="234.5" x2="880.00" y2="385.3" stroke="rgba(255,150,120,0.22)" stroke-width="0.8"/><line x1="889.70" y1="234.5" x2="889.70" y2="385.3" stroke="rgba(255,150,120,0.22)" stroke-width="0.8"/><line x1="899.40" y1="234.5" x2="899.40" y2="385.3" stroke="rgba(255,150,120,0.22)" stroke-width="0.8"/><line x1="909.10" y1="234.5" x2="909.10" y2="385.3" stroke="rgba(255,150,120,0.22)" stroke-width="0.8"/><line x1="918.80" y1="234.5" x2="918.80" y2="385.3" stroke="rgba(255,150,120,0.22)" stroke-width="0.8"/><line x1="928.50" y1="234.5" x2="928.50" y2="385.3" stroke="rgba(255,150,120,0.22)" stroke-width="0.8"/><line x1="938.20" y1="234.5" x2="938.20" y2="385.3" stroke="rgba(255,150,120,0.22)" stroke-width="0.8"/><line x1="947.90" y1="234.5" x2="947.90" y2="385.3" stroke="rgba(255,150,120,0.22)" stroke-width="0.8"/><line x1="957.60" y1="234.5" x2="957.60" y2="385.3" stroke="rgba(255,150,120,0.22)" stroke-width="0.8"/><line x1="967.30" y1="234.5" x2="967.30" y2="385.3" stroke="rgba(255,150,120,0.22)" stroke-width="0.8"/><line x1="977.00" y1="234.5" x2="977.00" y2="385.3" stroke="rgba(255,150,120,0.22)" stroke-width="0.8"/><line x1="986.70" y1="234.5" x2="986.70" y2="385.3" stroke="rgba(255,150,120,0.22)" stroke-width="0.8"/><line x1="996.40" y1="234.5" x2="996.40" y2="385.3" stroke="rgba(255,150,120,0.22)" stroke-width="0.8"/><line x1="1006.10" y1="234.5" x2="1006.10" y2="385.3" stroke="rgba(255,150,120,0.22)" stroke-width="0.8"/><line x1="1015.80" y1="234.5" x2="1015.80" y2="385.3" stroke="rgba(255,150,120,0.22)" stroke-width="0.8"/><line x1="1025.50" y1="234.5" x2="1025.50" y2="385.3" stroke="rgba(255,150,120,0.22)" stroke-width="0.8"/><line x1="1035.20" y1="234.5" x2="1035.20" y2="385.3" stroke="rgba(255,150,120,0.22)" stroke-width="0.8"/><line x1="1044.90" y1="234.5" x2="1044.90" y2="385.3" stroke="rgba(255,150,120,0.22)" stroke-width="0.8"/><line x1="1054.60" y1="234.5" x2="1054.60" y2="385.3" stroke="rgba(255,150,120,0.22)" stroke-width="0.8"/><line x1="1064.30" y1="234.5" x2="1064.30" y2="385.3" stroke="rgba(255,150,120,0.22)" stroke-width="0.8"/><line x1="1074.00" y1="234.5" x2="1074.00" y2="385.3" stroke="rgba(255,150,120,0.22)" stroke-width="0.8"/><line x1="1083.70" y1="234.5" x2="1083.70" y2="385.3" stroke="rgba(255,150,120,0.22)" stroke-width="0.8"/><line x1="791.2" y1="381.36" x2="1091.9" y2="381.36" stroke="rgba(255,150,120,0.18)" stroke-width="0.8"/><line x1="791.2" y1="374.80" x2="1091.9" y2="374.80" stroke="rgba(255,150,120,0.18)" stroke-width="0.8"/><line x1="791.2" y1="368.24" x2="1091.9" y2="368.24" stroke="rgba(255,150,120,0.18)" stroke-width="0.8"/><line x1="791.2" y1="361.68" x2="1091.9" y2="361.68" stroke="rgba(255,150,120,0.18)" stroke-width="0.8"/><line x1="791.2" y1="355.12" x2="1091.9" y2="355.12" stroke="rgba(255,150,120,0.18)" stroke-width="0.8"/><line x1="791.2" y1="348.56" x2="1091.9" y2="348.56" stroke="rgba(255,150,120,0.18)" stroke-width="0.8"/><line x1="791.2" y1="342.00" x2="1091.9" y2="342.00" stroke="rgba(255,150,120,0.18)" stroke-width="0.8"/><line x1="791.2" y1="335.44" x2="1091.9" y2="335.44" stroke="rgba(255,150,120,0.18)" stroke-width="0.8"/><line x1="791.2" y1="328.88" x2="1091.9" y2="328.88" stroke="rgba(255,150,120,0.18)" stroke-width="0.8"/><line x1="791.2" y1="322.32" x2="1091.9" y2="322.32" stroke="rgba(255,150,120,0.18)" stroke-width="0.8"/><line x1="791.2" y1="315.76" x2="1091.9" y2="315.76" stroke="rgba(255,150,120,0.18)" stroke-width="0.8"/><line x1="791.2" y1="309.20" x2="1091.9" y2="309.20" stroke="rgba(255,150,120,0.18)" stroke-width="0.8"/><line x1="791.2" y1="302.64" x2="1091.9" y2="302.64" stroke="rgba(255,150,120,0.18)" stroke-width="0.8"/><line x1="791.2" y1="296.08" x2="1091.9" y2="296.08" stroke="rgba(255,150,120,0.18)" stroke-width="0.8"/><line x1="791.2" y1="289.52" x2="1091.9" y2="289.52" stroke="rgba(255,150,120,0.18)" stroke-width="0.8"/><line x1="791.2" y1="282.96" x2="1091.9" y2="282.96" stroke="rgba(255,150,120,0.18)" stroke-width="0.8"/><line x1="791.2" y1="276.40" x2="1091.9" y2="276.40" stroke="rgba(255,150,120,0.18)" stroke-width="0.8"/><line x1="791.2" y1="269.84" x2="1091.9" y2="269.84" stroke="rgba(255,150,120,0.18)" stroke-width="0.8"/><line x1="791.2" y1="263.28" x2="1091.9" y2="263.28" stroke="rgba(255,150,120,0.18)" stroke-width="0.8"/><line x1="791.2" y1="256.72" x2="1091.9" y2="256.72" stroke="rgba(255,150,120,0.18)" stroke-width="0.8"/><line x1="791.2" y1="250.16" x2="1091.9" y2="250.16" stroke="rgba(255,150,120,0.18)" stroke-width="0.8"/><line x1="791.2" y1="243.60" x2="1091.9" y2="243.60" stroke="rgba(255,150,120,0.18)" stroke-width="0.8"/><line x1="791.2" y1="237.04" x2="1091.9" y2="237.04" stroke="rgba(255,150,120,0.18)" stroke-width="0.8"/><line x1="797.55" y1="234.5" x2="797.55" y2="385.3" stroke="rgba(255,255,255,0.07)" stroke-width="0.8"/><line x1="807.25" y1="234.5" x2="807.25" y2="385.3" stroke="rgba(255,255,255,0.07)" stroke-width="0.8"/><line x1="816.95" y1="234.5" x2="816.95" y2="385.3" stroke="rgba(255,255,255,0.07)" stroke-width="0.8"/><line x1="826.65" y1="234.5" x2="826.65" y2="385.3" stroke="rgba(255,255,255,0.07)" stroke-width="0.8"/><line x1="836.35" y1="234.5" x2="836.35" y2="385.3" stroke="rgba(255,255,255,0.07)" stroke-width="0.8"/><line x1="846.05" y1="234.5" x2="846.05" y2="385.3" stroke="rgba(255,255,255,0.07)" stroke-width="0.8"/><line x1="855.75" y1="234.5" x2="855.75" y2="385.3" stroke="rgba(255,255,255,0.07)" stroke-width="0.8"/><line x1="865.45" y1="234.5" x2="865.45" y2="385.3" stroke="rgba(255,255,255,0.07)" stroke-width="0.8"/><line x1="875.15" y1="234.5" x2="875.15" y2="385.3" stroke="rgba(255,255,255,0.07)" stroke-width="0.8"/><line x1="884.85" y1="234.5" x2="884.85" y2="385.3" stroke="rgba(255,255,255,0.07)" stroke-width="0.8"/><line x1="894.55" y1="234.5" x2="894.55" y2="385.3" stroke="rgba(255,255,255,0.07)" stroke-width="0.8"/><line x1="904.25" y1="234.5" x2="904.25" y2="385.3" stroke="rgba(255,255,255,0.07)" stroke-width="0.8"/><line x1="913.95" y1="234.5" x2="913.95" y2="385.3" stroke="rgba(255,255,255,0.07)" stroke-width="0.8"/><line x1="923.65" y1="234.5" x2="923.65" y2="385.3" stroke="rgba(255,255,255,0.07)" stroke-width="0.8"/><line x1="933.35" y1="234.5" x2="933.35" y2="385.3" stroke="rgba(255,255,255,0.07)" stroke-width="0.8"/><line x1="943.05" y1="234.5" x2="943.05" y2="385.3" stroke="rgba(255,255,255,0.07)" stroke-width="0.8"/><line x1="952.75" y1="234.5" x2="952.75" y2="385.3" stroke="rgba(255,255,255,0.07)" stroke-width="0.8"/><line x1="962.45" y1="234.5" x2="962.45" y2="385.3" stroke="rgba(255,255,255,0.07)" stroke-width="0.8"/><line x1="972.15" y1="234.5" x2="972.15" y2="385.3" stroke="rgba(255,255,255,0.07)" stroke-width="0.8"/><line x1="981.85" y1="234.5" x2="981.85" y2="385.3" stroke="rgba(255,255,255,0.07)" stroke-width="0.8"/><line x1="991.55" y1="234.5" x2="991.55" y2="385.3" stroke="rgba(255,255,255,0.07)" stroke-width="0.8"/><line x1="1001.25" y1="234.5" x2="1001.25" y2="385.3" stroke="rgba(255,255,255,0.07)" stroke-width="0.8"/><line x1="1010.95" y1="234.5" x2="1010.95" y2="385.3" stroke="rgba(255,255,255,0.07)" stroke-width="0.8"/><line x1="1020.65" y1="234.5" x2="1020.65" y2="385.3" stroke="rgba(255,255,255,0.07)" stroke-width="0.8"/><line x1="1030.35" y1="234.5" x2="1030.35" y2="385.3" stroke="rgba(255,255,255,0.07)" stroke-width="0.8"/><line x1="1040.05" y1="234.5" x2="1040.05" y2="385.3" stroke="rgba(255,255,255,0.07)" stroke-width="0.8"/><line x1="1049.75" y1="234.5" x2="1049.75" y2="385.3" stroke="rgba(255,255,255,0.07)" stroke-width="0.8"/><line x1="1059.45" y1="234.5" x2="1059.45" y2="385.3" stroke="rgba(255,255,255,0.07)" stroke-width="0.8"/><line x1="1069.15" y1="234.5" x2="1069.15" y2="385.3" stroke="rgba(255,255,255,0.07)" stroke-width="0.8"/><line x1="1078.85" y1="234.5" x2="1078.85" y2="385.3" stroke="rgba(255,255,255,0.07)" stroke-width="0.8"/><line x1="1088.55" y1="234.5" x2="1088.55" y2="385.3" stroke="rgba(255,255,255,0.07)" stroke-width="0.8"/></g><line x1="791.2" y1="309.20" x2="1091.9" y2="309.20" stroke="rgba(120,60,50,0.45)" stroke-width="0.9"/><line x1="791.2" y1="240.88" x2="1091.9" y2="240.88" stroke="rgba(225,60,40,0.4)" stroke-width="1.05"/><line x1="791.2" y1="370.90" x2="1091.9" y2="370.90" stroke="rgba(225,60,40,0.4)" stroke-width="1.05"/><g transform="translate(787.40 382.66) scale(0.125)"><text x="0" y="0" font-family="Liberation Mono" font-size="38.40" font-weight="normal" fill="#111" stroke="#111" stroke-width="0.9" text-anchor="end" textLength="52.80" lengthAdjust="spacingAndGlyphs">-220</text></g><g transform="translate(787.40 376.10) scale(0.125)"><text x="0" y="0" font-family="Liberation Mono" font-size="38.40" font-weight="normal" fill="#111" stroke="#111" stroke-width="0.9" text-anchor="end" textLength="52.80" lengthAdjust="spacingAndGlyphs">-200</text></g><g transform="translate(787.40 369.54) scale(0.125)"><text x="0" y="0" font-family="Liberation Mono" font-size="38.40" font-weight="normal" fill="#111" stroke="#111" stroke-width="0.9" text-anchor="end" textLength="52.80" lengthAdjust="spacingAndGlyphs">-180</text></g><g transform="translate(787.40 362.98) scale(0.125)"><text x="0" y="0" font-family="Liberation Mono" font-size="38.40" font-weight="normal" fill="#111" stroke="#111" stroke-width="0.9" text-anchor="end" textLength="52.80" lengthAdjust="spacingAndGlyphs">-160</text></g><g transform="translate(787.40 356.42) scale(0.125)"><text x="0" y="0" font-family="Liberation Mono" font-size="38.40" font-weight="normal" fill="#111" stroke="#111" stroke-width="0.9" text-anchor="end" textLength="52.80" lengthAdjust="spacingAndGlyphs">-140</text></g><g transform="translate(787.40 349.86) scale(0.125)"><text x="0" y="0" font-family="Liberation Mono" font-size="38.40" font-weight="normal" fill="#111" stroke="#111" stroke-width="0.9" text-anchor="end" textLength="52.80" lengthAdjust="spacingAndGlyphs">-120</text></g><g transform="translate(787.40 343.30) scale(0.125)"><text x="0" y="0" font-family="Liberation Mono" font-size="38.40" font-weight="normal" fill="#111" stroke="#111" stroke-width="0.9" text-anchor="end" textLength="52.80" lengthAdjust="spacingAndGlyphs">-100</text></g><g transform="translate(787.40 336.74) scale(0.125)"><text x="0" y="0" font-family="Liberation Mono" font-size="38.40" font-weight="normal" fill="#111" stroke="#111" stroke-width="0.9" text-anchor="end" textLength="39.60" lengthAdjust="spacingAndGlyphs">-80</text></g><g transform="translate(787.40 330.18) scale(0.125)"><text x="0" y="0" font-family="Liberation Mono" font-size="38.40" font-weight="normal" fill="#111" stroke="#111" stroke-width="0.9" text-anchor="end" textLength="39.60" lengthAdjust="spacingAndGlyphs">-60</text></g><g transform="translate(787.40 323.62) scale(0.125)"><text x="0" y="0" font-family="Liberation Mono" font-size="38.40" font-weight="normal" fill="#111" stroke="#111" stroke-width="0.9" text-anchor="end" textLength="39.60" lengthAdjust="spacingAndGlyphs">-40</text></g><g transform="translate(787.40 317.06) scale(0.125)"><text x="0" y="0" font-family="Liberation Mono" font-size="38.40" font-weight="normal" fill="#111" stroke="#111" stroke-width="0.9" text-anchor="end" textLength="39.60" lengthAdjust="spacingAndGlyphs">-20</text></g><g transform="translate(787.40 310.50) scale(0.125)"><text x="0" y="0" font-family="Liberation Mono" font-size="38.40" font-weight="normal" fill="#111" stroke="#111" stroke-width="0.9" text-anchor="end" textLength="13.20" lengthAdjust="spacingAndGlyphs">0</text></g><g transform="translate(787.40 303.94) scale(0.125)"><text x="0" y="0" font-family="Liberation Mono" font-size="38.40" font-weight="normal" fill="#111" stroke="#111" stroke-width="0.9" text-anchor="end" textLength="26.40" lengthAdjust="spacingAndGlyphs">20</text></g><g transform="translate(787.40 297.38) scale(0.125)"><text x="0" y="0" font-family="Liberation Mono" font-size="38.40" font-weight="normal" fill="#111" stroke="#111" stroke-width="0.9" text-anchor="end" textLength="26.40" lengthAdjust="spacingAndGlyphs">40</text></g><g transform="translate(787.40 290.82) scale(0.125)"><text x="0" y="0" font-family="Liberation Mono" font-size="38.40" font-weight="normal" fill="#111" stroke="#111" stroke-width="0.9" text-anchor="end" textLength="26.40" lengthAdjust="spacingAndGlyphs">60</text></g><g transform="translate(787.40 284.26) scale(0.125)"><text x="0" y="0" font-family="Liberation Mono" font-size="38.40" font-weight="normal" fill="#111" stroke="#111" stroke-width="0.9" text-anchor="end" textLength="26.40" lengthAdjust="spacingAndGlyphs">80</text></g><g transform="translate(787.40 277.70) scale(0.125)"><text x="0" y="0" font-family="Liberation Mono" font-size="38.40" font-weight="normal" fill="#111" stroke="#111" stroke-width="0.9" text-anchor="end" textLength="39.60" lengthAdjust="spacingAndGlyphs">100</text></g><g transform="translate(787.40 271.14) scale(0.125)"><text x="0" y="0" font-family="Liberation Mono" font-size="38.40" font-weight="normal" fill="#111" stroke="#111" stroke-width="0.9" text-anchor="end" textLength="39.60" lengthAdjust="spacingAndGlyphs">120</text></g><g transform="translate(787.40 264.58) scale(0.125)"><text x="0" y="0" font-family="Liberation Mono" font-size="38.40" font-weight="normal" fill="#111" stroke="#111" stroke-width="0.9" text-anchor="end" textLength="39.60" lengthAdjust="spacingAndGlyphs">140</text></g><g transform="translate(787.40 258.02) scale(0.125)"><text x="0" y="0" font-family="Liberation Mono" font-size="38.40" font-weight="normal" fill="#111" stroke="#111" stroke-width="0.9" text-anchor="end" textLength="39.60" lengthAdjust="spacingAndGlyphs">160</text></g><g transform="translate(787.40 251.46) scale(0.125)"><text x="0" y="0" font-family="Liberation Mono" font-size="38.40" font-weight="normal" fill="#111" stroke="#111" stroke-width="0.9" text-anchor="end" textLength="39.60" lengthAdjust="spacingAndGlyphs">180</text></g><g transform="translate(787.40 244.90) scale(0.125)"><text x="0" y="0" font-family="Liberation Mono" font-size="38.40" font-weight="normal" fill="#111" stroke="#111" stroke-width="0.9" text-anchor="end" textLength="39.60" lengthAdjust="spacingAndGlyphs">200</text></g><g transform="translate(787.40 238.34) scale(0.125)"><text x="0" y="0" font-family="Liberation Mono" font-size="38.40" font-weight="normal" fill="#111" stroke="#111" stroke-width="0.9" text-anchor="end" textLength="39.60" lengthAdjust="spacingAndGlyphs">220</text></g><g transform="translate(802.00 389.30) scale(0.125)"><text x="0" y="0" font-family="Liberation Mono" font-size="30.40" font-weight="normal" fill="#111" stroke="#111" stroke-width="0.9" text-anchor="middle" textLength="87.36" lengthAdjust="spacingAndGlyphs">29 Dec</text></g><g transform="translate(821.50 389.30) scale(0.125)"><text x="0" y="0" font-family="Liberation Mono" font-size="30.40" font-weight="normal" fill="#111" stroke="#111" stroke-width="0.9" text-anchor="middle" textLength="87.36" lengthAdjust="spacingAndGlyphs">31 Dec</text></g><g transform="translate(841.00 389.30) scale(0.125)"><text x="0" y="0" font-family="Liberation Mono" font-size="30.40" font-weight="normal" fill="#111" stroke="#111" stroke-width="0.9" text-anchor="middle" textLength="87.36" lengthAdjust="spacingAndGlyphs">02 Jan</text></g><g transform="translate(860.50 389.30) scale(0.125)"><text x="0" y="0" font-family="Liberation Mono" font-size="30.40" font-weight="normal" fill="#111" stroke="#111" stroke-width="0.9" text-anchor="middle" textLength="87.36" lengthAdjust="spacingAndGlyphs">04 Jan</text></g><g transform="translate(880.00 389.30) scale(0.125)"><text x="0" y="0" font-family="Liberation Mono" font-size="30.40" font-weight="normal" fill="#111" stroke="#111" stroke-width="0.9" text-anchor="middle" textLength="87.36" lengthAdjust="spacingAndGlyphs">06 Jan</text></g><g transform="translate(899.50 389.30) scale(0.125)"><text x="0" y="0" font-family="Liberation Mono" font-size="30.40" font-weight="normal" fill="#111" stroke="#111" stroke-width="0.9" text-anchor="middle" textLength="87.36" lengthAdjust="spacingAndGlyphs">08 Jan</text></g><g transform="translate(919.00 389.30) scale(0.125)"><text x="0" y="0" font-family="Liberation Mono" font-size="30.40" font-weight="normal" fill="#111" stroke="#111" stroke-width="0.9" text-anchor="middle" textLength="87.36" lengthAdjust="spacingAndGlyphs">10 Jan</text></g><g transform="translate(938.50 389.30) scale(0.125)"><text x="0" y="0" font-family="Liberation Mono" font-size="30.40" font-weight="normal" fill="#111" stroke="#111" stroke-width="0.9" text-anchor="middle" textLength="87.36" lengthAdjust="spacingAndGlyphs">12 Jan</text></g><g transform="translate(958.00 389.30) scale(0.125)"><text x="0" y="0" font-family="Liberation Mono" font-size="30.40" font-weight="normal" fill="#111" stroke="#111" stroke-width="0.9" text-anchor="middle" textLength="87.36" lengthAdjust="spacingAndGlyphs">14 Jan</text></g><g transform="translate(977.50 389.30) scale(0.125)"><text x="0" y="0" font-family="Liberation Mono" font-size="30.40" font-weight="normal" fill="#111" stroke="#111" stroke-width="0.9" text-anchor="middle" textLength="87.36" lengthAdjust="spacingAndGlyphs">16 Jan</text></g><g transform="translate(997.00 389.30) scale(0.125)"><text x="0" y="0" font-family="Liberation Mono" font-size="30.40" font-weight="normal" fill="#111" stroke="#111" stroke-width="0.9" text-anchor="middle" textLength="87.36" lengthAdjust="spacingAndGlyphs">18 Jan</text></g><g transform="translate(1016.50 389.30) scale(0.125)"><text x="0" y="0" font-family="Liberation Mono" font-size="30.40" font-weight="normal" fill="#111" stroke="#111" stroke-width="0.9" text-anchor="middle" textLength="87.36" lengthAdjust="spacingAndGlyphs">20 Jan</text></g><g transform="translate(1036.00 389.30) scale(0.125)"><text x="0" y="0" font-family="Liberation Mono" font-size="30.40" font-weight="normal" fill="#111" stroke="#111" stroke-width="0.9" text-anchor="middle" textLength="87.36" lengthAdjust="spacingAndGlyphs">22 Jan</text></g><g transform="translate(1055.50 389.30) scale(0.125)"><text x="0" y="0" font-family="Liberation Mono" font-size="30.40" font-weight="normal" fill="#111" stroke="#111" stroke-width="0.9" text-anchor="middle" textLength="87.36" lengthAdjust="spacingAndGlyphs">24 Jan</text></g><g transform="translate(1075.00 389.30) scale(0.125)"><text x="0" y="0" font-family="Liberation Mono" font-size="30.40" font-weight="normal" fill="#111" stroke="#111" stroke-width="0.9" text-anchor="middle" textLength="87.36" lengthAdjust="spacingAndGlyphs">26 Jan</text></g><line x1="790.7" y1="232.5" x2="790.7" y2="386.3" stroke="#c8c8c8" stroke-width="1.3"/><line x1="789.2" y1="385.3" x2="1094.9" y2="385.3" stroke="#c8c8c8" stroke-width="1.1"/><path d="M789.2 232.5 l1.5 -1.8 l1.5 1.8 z" fill="#666"/><path d="M1094.9 383.8 l2 1.5 l-2 1.5 z" fill="#666"/><g transform="translate(935.70 233.50) scale(0.125)"><text x="0" y="0" font-family="Liberation Mono" font-size="40.00" font-weight="normal" fill="#222" stroke="#222" stroke-width="0.9" text-anchor="middle" textLength="194.40" lengthAdjust="spacingAndGlyphs">Last Month</text></g><g transform="rotate(-90 774.2 309.9)"><g transform="translate(774.20 309.90) scale(0.125)"><text x="0" y="0" font-family="Liberation Mono" font-size="40.00" font-weight="normal" fill="#222" stroke="#222" stroke-width="0.9" text-anchor="middle" textLength="96.00" lengthAdjust="spacingAndGlyphs">Mbit/s</text></g></g><g transform="rotate(90 1098.4 246.5)"><g transform="translate(1098.40 246.50) scale(0.125)"><text x="0" y="0" font-family="Liberation Mono" font-size="20.80" font-weight="normal" fill="#ccc" stroke="#ccc" stroke-width="0.9" text-anchor="middle">RRDTOOL / TOBI OETIKER</text></g></g><rect x="775.7" y="391.5" width="3.0" height="3.0" fill="#4caf3c"/><g transform="translate(780.30 394.60) scale(0.125)"><text x="0" y="0" font-family="Liberation Mono" font-size="32.80" font-weight="normal" fill="#111" stroke="#111" stroke-width="0.9" text-anchor="start" textLength="134.40" lengthAdjust="spacingAndGlyphs">Download</text></g><rect x="801.4000000000001" y="391.5" width="3.0" height="3.0" fill="#3a5fc0"/><g transform="translate(806.10 394.60) scale(0.125)"><text x="0" y="0" font-family="Liberation Mono" font-size="32.80" font-weight="normal" fill="#111" stroke="#111" stroke-width="0.9" text-anchor="start" textLength="100.80" lengthAdjust="spacingAndGlyphs">Upload</text></g><rect x="823.3000000000001" y="391.5" width="3.0" height="3.0" fill="#e03a1a"/><g transform="translate(828.10 394.60) scale(0.125)"><text x="0" y="0" font-family="Liberation Mono" font-size="32.80" font-weight="normal" fill="#111" stroke="#111" stroke-width="0.9" text-anchor="start" textLength="50.40" lengthAdjust="spacingAndGlyphs">Avg</text></g><g transform="translate(775.70 398.70) scale(0.125)"><text x="0" y="0" font-family="Liberation Mono" font-size="32.80" font-weight="normal" fill="#111" stroke="#111" stroke-width="0.9" text-anchor="start" textLength="588.00" lengthAdjust="spacingAndGlyphs">Last download bandwidth: 209.2 Mb/s</text></g><g transform="translate(775.70 402.90) scale(0.125)"><text x="0" y="0" font-family="Liberation Mono" font-size="32.80" font-weight="normal" fill="#111" stroke="#111" stroke-width="0.9" text-anchor="start" textLength="554.40" lengthAdjust="spacingAndGlyphs">Last upload bandwidth: 190.0 Mb/s</text></g><g transform="translate(775.70 407.00) scale(0.125)"><text x="0" y="0" font-family="Liberation Mono" font-size="32.80" font-weight="normal" fill="#111" stroke="#111" stroke-width="0.9" text-anchor="start" textLength="554.40" lengthAdjust="spacingAndGlyphs">Avg download bandwidth 208.3 Mb/s</text></g><g transform="translate(775.70 411.20) scale(0.125)"><text x="0" y="0" font-family="Liberation Mono" font-size="32.80" font-weight="normal" fill="#111" stroke="#111" stroke-width="0.9" text-anchor="start" textLength="520.80" lengthAdjust="spacingAndGlyphs">Avg upload bandwidth 188.1 Mb/s</text></g>
<rect x="1151.2" y="234.5" width="300.7" height="150.8" fill="#fdfdfd"/><line x1="1154.20" y1="234.5" x2="1154.20" y2="385.3" stroke="rgba(0,0,0,0.03)" stroke-width="0.8"/><line x1="1159.98" y1="234.5" x2="1159.98" y2="385.3" stroke="rgba(0,0,0,0.03)" stroke-width="0.8"/><line x1="1165.76" y1="234.5" x2="1165.76" y2="385.3" stroke="rgba(0,0,0,0.03)" stroke-width="0.8"/><line x1="1171.54" y1="234.5" x2="1171.54" y2="385.3" stroke="rgba(0,0,0,0.03)" stroke-width="0.8"/><line x1="1177.32" y1="234.5" x2="1177.32" y2="385.3" stroke="rgba(0,0,0,0.03)" stroke-width="0.8"/><line x1="1183.10" y1="234.5" x2="1183.10" y2="385.3" stroke="rgba(0,0,0,0.03)" stroke-width="0.8"/><line x1="1188.88" y1="234.5" x2="1188.88" y2="385.3" stroke="rgba(0,0,0,0.03)" stroke-width="0.8"/><line x1="1194.66" y1="234.5" x2="1194.66" y2="385.3" stroke="rgba(0,0,0,0.03)" stroke-width="0.8"/><line x1="1200.44" y1="234.5" x2="1200.44" y2="385.3" stroke="rgba(0,0,0,0.03)" stroke-width="0.8"/><line x1="1206.22" y1="234.5" x2="1206.22" y2="385.3" stroke="rgba(0,0,0,0.03)" stroke-width="0.8"/><line x1="1212.00" y1="234.5" x2="1212.00" y2="385.3" stroke="rgba(0,0,0,0.03)" stroke-width="0.8"/><line x1="1217.78" y1="234.5" x2="1217.78" y2="385.3" stroke="rgba(0,0,0,0.03)" stroke-width="0.8"/><line x1="1223.56" y1="234.5" x2="1223.56" y2="385.3" stroke="rgba(0,0,0,0.03)" stroke-width="0.8"/><line x1="1229.34" y1="234.5" x2="1229.34" y2="385.3" stroke="rgba(0,0,0,0.03)" stroke-width="0.8"/><line x1="1235.12" y1="234.5" x2="1235.12" y2="385.3" stroke="rgba(0,0,0,0.03)" stroke-width="0.8"/><line x1="1240.90" y1="234.5" x2="1240.90" y2="385.3" stroke="rgba(0,0,0,0.03)" stroke-width="0.8"/><line x1="1246.68" y1="234.5" x2="1246.68" y2="385.3" stroke="rgba(0,0,0,0.03)" stroke-width="0.8"/><line x1="1252.46" y1="234.5" x2="1252.46" y2="385.3" stroke="rgba(0,0,0,0.03)" stroke-width="0.8"/><line x1="1258.24" y1="234.5" x2="1258.24" y2="385.3" stroke="rgba(0,0,0,0.03)" stroke-width="0.8"/><line x1="1264.02" y1="234.5" x2="1264.02" y2="385.3" stroke="rgba(0,0,0,0.03)" stroke-width="0.8"/><line x1="1269.80" y1="234.5" x2="1269.80" y2="385.3" stroke="rgba(0,0,0,0.03)" stroke-width="0.8"/><line x1="1275.58" y1="234.5" x2="1275.58" y2="385.3" stroke="rgba(0,0,0,0.03)" stroke-width="0.8"/><line x1="1281.36" y1="234.5" x2="1281.36" y2="385.3" stroke="rgba(0,0,0,0.03)" stroke-width="0.8"/><line x1="1287.14" y1="234.5" x2="1287.14" y2="385.3" stroke="rgba(0,0,0,0.03)" stroke-width="0.8"/><line x1="1292.92" y1="234.5" x2="1292.92" y2="385.3" stroke="rgba(0,0,0,0.03)" stroke-width="0.8"/><line x1="1298.70" y1="234.5" x2="1298.70" y2="385.3" stroke="rgba(0,0,0,0.03)" stroke-width="0.8"/><line x1="1304.48" y1="234.5" x2="1304.48" y2="385.3" stroke="rgba(0,0,0,0.03)" stroke-width="0.8"/><line x1="1310.26" y1="234.5" x2="1310.26" y2="385.3" stroke="rgba(0,0,0,0.03)" stroke-width="0.8"/><line x1="1316.04" y1="234.5" x2="1316.04" y2="385.3" stroke="rgba(0,0,0,0.03)" stroke-width="0.8"/><line x1="1321.82" y1="234.5" x2="1321.82" y2="385.3" stroke="rgba(0,0,0,0.03)" stroke-width="0.8"/><line x1="1327.60" y1="234.5" x2="1327.60" y2="385.3" stroke="rgba(0,0,0,0.03)" stroke-width="0.8"/><line x1="1333.38" y1="234.5" x2="1333.38" y2="385.3" stroke="rgba(0,0,0,0.03)" stroke-width="0.8"/><line x1="1339.16" y1="234.5" x2="1339.16" y2="385.3" stroke="rgba(0,0,0,0.03)" stroke-width="0.8"/><line x1="1344.94" y1="234.5" x2="1344.94" y2="385.3" stroke="rgba(0,0,0,0.03)" stroke-width="0.8"/><line x1="1350.72" y1="234.5" x2="1350.72" y2="385.3" stroke="rgba(0,0,0,0.03)" stroke-width="0.8"/><line x1="1356.50" y1="234.5" x2="1356.50" y2="385.3" stroke="rgba(0,0,0,0.03)" stroke-width="0.8"/><line x1="1362.28" y1="234.5" x2="1362.28" y2="385.3" stroke="rgba(0,0,0,0.03)" stroke-width="0.8"/><line x1="1368.06" y1="234.5" x2="1368.06" y2="385.3" stroke="rgba(0,0,0,0.03)" stroke-width="0.8"/><line x1="1373.84" y1="234.5" x2="1373.84" y2="385.3" stroke="rgba(0,0,0,0.03)" stroke-width="0.8"/><line x1="1379.62" y1="234.5" x2="1379.62" y2="385.3" stroke="rgba(0,0,0,0.03)" stroke-width="0.8"/><line x1="1385.40" y1="234.5" x2="1385.40" y2="385.3" stroke="rgba(0,0,0,0.03)" stroke-width="0.8"/><line x1="1391.18" y1="234.5" x2="1391.18" y2="385.3" stroke="rgba(0,0,0,0.03)" stroke-width="0.8"/><line x1="1396.96" y1="234.5" x2="1396.96" y2="385.3" stroke="rgba(0,0,0,0.03)" stroke-width="0.8"/><line x1="1402.74" y1="234.5" x2="1402.74" y2="385.3" stroke="rgba(0,0,0,0.03)" stroke-width="0.8"/><line x1="1408.52" y1="234.5" x2="1408.52" y2="385.3" stroke="rgba(0,0,0,0.03)" stroke-width="0.8"/><line x1="1414.30" y1="234.5" x2="1414.30" y2="385.3" stroke="rgba(0,0,0,0.03)" stroke-width="0.8"/><line x1="1420.08" y1="234.5" x2="1420.08" y2="385.3" stroke="rgba(0,0,0,0.03)" stroke-width="0.8"/><line x1="1425.86" y1="234.5" x2="1425.86" y2="385.3" stroke="rgba(0,0,0,0.03)" stroke-width="0.8"/><line x1="1431.64" y1="234.5" x2="1431.64" y2="385.3" stroke="rgba(0,0,0,0.03)" stroke-width="0.8"/><line x1="1437.42" y1="234.5" x2="1437.42" y2="385.3" stroke="rgba(0,0,0,0.03)" stroke-width="0.8"/><line x1="1443.20" y1="234.5" x2="1443.20" y2="385.3" stroke="rgba(0,0,0,0.03)" stroke-width="0.8"/><line x1="1448.98" y1="234.5" x2="1448.98" y2="385.3" stroke="rgba(0,0,0,0.03)" stroke-width="0.8"/><line x1="1151.2" y1="384.44" x2="1451.9" y2="384.44" stroke="rgba(0,0,0,0.03)" stroke-width="0.8"/><line x1="1151.2" y1="377.75" x2="1451.9" y2="377.75" stroke="rgba(0,0,0,0.03)" stroke-width="0.8"/><line x1="1151.2" y1="371.06" x2="1451.9" y2="371.06" stroke="rgba(0,0,0,0.03)" stroke-width="0.8"/><line x1="1151.2" y1="364.37" x2="1451.9" y2="364.37" stroke="rgba(0,0,0,0.03)" stroke-width="0.8"/><line x1="1151.2" y1="357.68" x2="1451.9" y2="357.68" stroke="rgba(0,0,0,0.03)" stroke-width="0.8"/><line x1="1151.2" y1="350.99" x2="1451.9" y2="350.99" stroke="rgba(0,0,0,0.03)" stroke-width="0.8"/><line x1="1151.2" y1="344.30" x2="1451.9" y2="344.30" stroke="rgba(0,0,0,0.03)" stroke-width="0.8"/><line x1="1151.2" y1="337.61" x2="1451.9" y2="337.61" stroke="rgba(0,0,0,0.03)" stroke-width="0.8"/><line x1="1151.2" y1="330.92" x2="1451.9" y2="330.92" stroke="rgba(0,0,0,0.03)" stroke-width="0.8"/><line x1="1151.2" y1="324.23" x2="1451.9" y2="324.23" stroke="rgba(0,0,0,0.03)" stroke-width="0.8"/><line x1="1151.2" y1="317.54" x2="1451.9" y2="317.54" stroke="rgba(0,0,0,0.03)" stroke-width="0.8"/><line x1="1151.2" y1="310.85" x2="1451.9" y2="310.85" stroke="rgba(0,0,0,0.03)" stroke-width="0.8"/><line x1="1151.2" y1="304.15" x2="1451.9" y2="304.15" stroke="rgba(0,0,0,0.03)" stroke-width="0.8"/><line x1="1151.2" y1="297.46" x2="1451.9" y2="297.46" stroke="rgba(0,0,0,0.03)" stroke-width="0.8"/><line x1="1151.2" y1="290.77" x2="1451.9" y2="290.77" stroke="rgba(0,0,0,0.03)" stroke-width="0.8"/><line x1="1151.2" y1="284.08" x2="1451.9" y2="284.08" stroke="rgba(0,0,0,0.03)" stroke-width="0.8"/><line x1="1151.2" y1="277.39" x2="1451.9" y2="277.39" stroke="rgba(0,0,0,0.03)" stroke-width="0.8"/><line x1="1151.2" y1="270.70" x2="1451.9" y2="270.70" stroke="rgba(0,0,0,0.03)" stroke-width="0.8"/><line x1="1151.2" y1="264.01" x2="1451.9" y2="264.01" stroke="rgba(0,0,0,0.03)" stroke-width="0.8"/><line x1="1151.2" y1="257.32" x2="1451.9" y2="257.32" stroke="rgba(0,0,0,0.03)" stroke-width="0.8"/><line x1="1151.2" y1="250.63" x2="1451.9" y2="250.63" stroke="rgba(0,0,0,0.03)" stroke-width="0.8"/><line x1="1151.2" y1="243.94" x2="1451.9" y2="243.94" stroke="rgba(0,0,0,0.03)" stroke-width="0.8"/><line x1="1151.2" y1="237.25" x2="1451.9" y2="237.25" stroke="rgba(0,0,0,0.03)" stroke-width="0.8"/><line x1="1154.20" y1="234.5" x2="1154.20" y2="385.3" stroke="rgba(255,0,0,0.055)" stroke-width="0.8"/><line x1="1179.25" y1="234.5" x2="1179.25" y2="385.3" stroke="rgba(255,0,0,0.055)" stroke-width="0.8"/><line x1="1204.30" y1="234.5" x2="1204.30" y2="385.3" stroke="rgba(255,0,0,0.055)" stroke-width="0.8"/><line x1="1229.35" y1="234.5" x2="1229.35" y2="385.3" stroke="rgba(255,0,0,0.055)" stroke-width="0.8"/><line x1="1254.40" y1="234.5" x2="1254.40" y2="385.3" stroke="rgba(255,0,0,0.055)" stroke-width="0.8"/><line x1="1279.45" y1="234.5" x2="1279.45" y2="385.3" stroke="rgba(255,0,0,0.055)" stroke-width="0.8"/><line x1="1304.50" y1="234.5" x2="1304.50" y2="385.3" stroke="rgba(255,0,0,0.055)" stroke-width="0.8"/><line x1="1329.55" y1="234.5" x2="1329.55" y2="385.3" stroke="rgba(255,0,0,0.055)" stroke-width="0.8"/><line x1="1354.60" y1="234.5" x2="1354.60" y2="385.3" stroke="rgba(255,0,0,0.055)" stroke-width="0.8"/><line x1="1379.65" y1="234.5" x2="1379.65" y2="385.3" stroke="rgba(255,0,0,0.055)" stroke-width="0.8"/><line x1="1404.70" y1="234.5" x2="1404.70" y2="385.3" stroke="rgba(255,0,0,0.055)" stroke-width="0.8"/><line x1="1429.75" y1="234.5" x2="1429.75" y2="385.3" stroke="rgba(255,0,0,0.055)" stroke-width="0.8"/><line x1="1151.2" y1="381.09" x2="1451.9" y2="381.09" stroke="rgba(255,0,0,0.055)" stroke-width="0.8"/><line x1="1151.2" y1="374.40" x2="1451.9" y2="374.40" stroke="rgba(255,0,0,0.055)" stroke-width="0.8"/><line x1="1151.2" y1="367.71" x2="1451.9" y2="367.71" stroke="rgba(255,0,0,0.055)" stroke-width="0.8"/><line x1="1151.2" y1="361.02" x2="1451.9" y2="361.02" stroke="rgba(255,0,0,0.055)" stroke-width="0.8"/><line x1="1151.2" y1="354.33" x2="1451.9" y2="354.33" stroke="rgba(255,0,0,0.055)" stroke-width="0.8"/><line x1="1151.2" y1="347.64" x2="1451.9" y2="347.64" stroke="rgba(255,0,0,0.055)" stroke-width="0.8"/><line x1="1151.2" y1="340.95" x2="1451.9" y2="340.95" stroke="rgba(255,0,0,0.055)" stroke-width="0.8"/><line x1="1151.2" y1="334.26" x2="1451.9" y2="334.26" stroke="rgba(255,0,0,0.055)" stroke-width="0.8"/><line x1="1151.2" y1="327.57" x2="1451.9" y2="327.57" stroke="rgba(255,0,0,0.055)" stroke-width="0.8"/><line x1="1151.2" y1="320.88" x2="1451.9" y2="320.88" stroke="rgba(255,0,0,0.055)" stroke-width="0.8"/><line x1="1151.2" y1="314.19" x2="1451.9" y2="314.19" stroke="rgba(255,0,0,0.055)" stroke-width="0.8"/><line x1="1151.2" y1="307.50" x2="1451.9" y2="307.50" stroke="rgba(255,0,0,0.055)" stroke-width="0.8"/><line x1="1151.2" y1="300.81" x2="1451.9" y2="300.81" stroke="rgba(255,0,0,0.055)" stroke-width="0.8"/><line x1="1151.2" y1="294.12" x2="1451.9" y2="294.12" stroke="rgba(255,0,0,0.055)" stroke-width="0.8"/><line x1="1151.2" y1="287.43" x2="1451.9" y2="287.43" stroke="rgba(255,0,0,0.055)" stroke-width="0.8"/><line x1="1151.2" y1="280.74" x2="1451.9" y2="280.74" stroke="rgba(255,0,0,0.055)" stroke-width="0.8"/><line x1="1151.2" y1="274.05" x2="1451.9" y2="274.05" stroke="rgba(255,0,0,0.055)" stroke-width="0.8"/><line x1="1151.2" y1="267.36" x2="1451.9" y2="267.36" stroke="rgba(255,0,0,0.055)" stroke-width="0.8"/><line x1="1151.2" y1="260.67" x2="1451.9" y2="260.67" stroke="rgba(255,0,0,0.055)" stroke-width="0.8"/><line x1="1151.2" y1="253.98" x2="1451.9" y2="253.98" stroke="rgba(255,0,0,0.055)" stroke-width="0.8"/><line x1="1151.2" y1="247.29" x2="1451.9" y2="247.29" stroke="rgba(255,0,0,0.055)" stroke-width="0.8"/><line x1="1151.2" y1="240.60" x2="1451.9" y2="240.60" stroke="rgba(255,0,0,0.055)" stroke-width="0.8"/><path d="M1446.00 307.50 L1446.00 236.30 L1449.00 236.30 L1449.00 239.50 L1451.80 239.50 L1451.80 307.50 Z" fill="#63aa44"/><path d="M1446.00 307.50 L1446.00 371.00 L1451.80 371.00 L1451.80 307.50 Z" fill="#3e62ad"/><g style="mix-blend-mode:screen"><line x1="1154.20" y1="234.5" x2="1154.20" y2="385.3" stroke="rgba(255,150,120,0.22)" stroke-width="0.8"/><line x1="1179.25" y1="234.5" x2="1179.25" y2="385.3" stroke="rgba(255,150,120,0.22)" stroke-width="0.8"/><line x1="1204.30" y1="234.5" x2="1204.30" y2="385.3" stroke="rgba(255,150,120,0.22)" stroke-width="0.8"/><line x1="1229.35" y1="234.5" x2="1229.35" y2="385.3" stroke="rgba(255,150,120,0.22)" stroke-width="0.8"/><line x1="1254.40" y1="234.5" x2="1254.40" y2="385.3" stroke="rgba(255,150,120,0.22)" stroke-width="0.8"/><line x1="1279.45" y1="234.5" x2="1279.45" y2="385.3" stroke="rgba(255,150,120,0.22)" stroke-width="0.8"/><line x1="1304.50" y1="234.5" x2="1304.50" y2="385.3" stroke="rgba(255,150,120,0.22)" stroke-width="0.8"/><line x1="1329.55" y1="234.5" x2="1329.55" y2="385.3" stroke="rgba(255,150,120,0.22)" stroke-width="0.8"/><line x1="1354.60" y1="234.5" x2="1354.60" y2="385.3" stroke="rgba(255,150,120,0.22)" stroke-width="0.8"/><line x1="1379.65" y1="234.5" x2="1379.65" y2="385.3" stroke="rgba(255,150,120,0.22)" stroke-width="0.8"/><line x1="1404.70" y1="234.5" x2="1404.70" y2="385.3" stroke="rgba(255,150,120,0.22)" stroke-width="0.8"/><line x1="1429.75" y1="234.5" x2="1429.75" y2="385.3" stroke="rgba(255,150,120,0.22)" stroke-width="0.8"/><line x1="1151.2" y1="381.09" x2="1451.9" y2="381.09" stroke="rgba(255,150,120,0.18)" stroke-width="0.8"/><line x1="1151.2" y1="374.40" x2="1451.9" y2="374.40" stroke="rgba(255,150,120,0.18)" stroke-width="0.8"/><line x1="1151.2" y1="367.71" x2="1451.9" y2="367.71" stroke="rgba(255,150,120,0.18)" stroke-width="0.8"/><line x1="1151.2" y1="361.02" x2="1451.9" y2="361.02" stroke="rgba(255,150,120,0.18)" stroke-width="0.8"/><line x1="1151.2" y1="354.33" x2="1451.9" y2="354.33" stroke="rgba(255,150,120,0.18)" stroke-width="0.8"/><line x1="1151.2" y1="347.64" x2="1451.9" y2="347.64" stroke="rgba(255,150,120,0.18)" stroke-width="0.8"/><line x1="1151.2" y1="340.95" x2="1451.9" y2="340.95" stroke="rgba(255,150,120,0.18)" stroke-width="0.8"/><line x1="1151.2" y1="334.26" x2="1451.9" y2="334.26" stroke="rgba(255,150,120,0.18)" stroke-width="0.8"/><line x1="1151.2" y1="327.57" x2="1451.9" y2="327.57" stroke="rgba(255,150,120,0.18)" stroke-width="0.8"/><line x1="1151.2" y1="320.88" x2="1451.9" y2="320.88" stroke="rgba(255,150,120,0.18)" stroke-width="0.8"/><line x1="1151.2" y1="314.19" x2="1451.9" y2="314.19" stroke="rgba(255,150,120,0.18)" stroke-width="0.8"/><line x1="1151.2" y1="307.50" x2="1451.9" y2="307.50" stroke="rgba(255,150,120,0.18)" stroke-width="0.8"/><line x1="1151.2" y1="300.81" x2="1451.9" y2="300.81" stroke="rgba(255,150,120,0.18)" stroke-width="0.8"/><line x1="1151.2" y1="294.12" x2="1451.9" y2="294.12" stroke="rgba(255,150,120,0.18)" stroke-width="0.8"/><line x1="1151.2" y1="287.43" x2="1451.9" y2="287.43" stroke="rgba(255,150,120,0.18)" stroke-width="0.8"/><line x1="1151.2" y1="280.74" x2="1451.9" y2="280.74" stroke="rgba(255,150,120,0.18)" stroke-width="0.8"/><line x1="1151.2" y1="274.05" x2="1451.9" y2="274.05" stroke="rgba(255,150,120,0.18)" stroke-width="0.8"/><line x1="1151.2" y1="267.36" x2="1451.9" y2="267.36" stroke="rgba(255,150,120,0.18)" stroke-width="0.8"/><line x1="1151.2" y1="260.67" x2="1451.9" y2="260.67" stroke="rgba(255,150,120,0.18)" stroke-width="0.8"/><line x1="1151.2" y1="253.98" x2="1451.9" y2="253.98" stroke="rgba(255,150,120,0.18)" stroke-width="0.8"/><line x1="1151.2" y1="247.29" x2="1451.9" y2="247.29" stroke="rgba(255,150,120,0.18)" stroke-width="0.8"/><line x1="1151.2" y1="240.60" x2="1451.9" y2="240.60" stroke="rgba(255,150,120,0.18)" stroke-width="0.8"/><line x1="1154.20" y1="234.5" x2="1154.20" y2="385.3" stroke="rgba(255,255,255,0.07)" stroke-width="0.8"/><line x1="1159.98" y1="234.5" x2="1159.98" y2="385.3" stroke="rgba(255,255,255,0.07)" stroke-width="0.8"/><line x1="1165.76" y1="234.5" x2="1165.76" y2="385.3" stroke="rgba(255,255,255,0.07)" stroke-width="0.8"/><line x1="1171.54" y1="234.5" x2="1171.54" y2="385.3" stroke="rgba(255,255,255,0.07)" stroke-width="0.8"/><line x1="1177.32" y1="234.5" x2="1177.32" y2="385.3" stroke="rgba(255,255,255,0.07)" stroke-width="0.8"/><line x1="1183.10" y1="234.5" x2="1183.10" y2="385.3" stroke="rgba(255,255,255,0.07)" stroke-width="0.8"/><line x1="1188.88" y1="234.5" x2="1188.88" y2="385.3" stroke="rgba(255,255,255,0.07)" stroke-width="0.8"/><line x1="1194.66" y1="234.5" x2="1194.66" y2="385.3" stroke="rgba(255,255,255,0.07)" stroke-width="0.8"/><line x1="1200.44" y1="234.5" x2="1200.44" y2="385.3" stroke="rgba(255,255,255,0.07)" stroke-width="0.8"/><line x1="1206.22" y1="234.5" x2="1206.22" y2="385.3" stroke="rgba(255,255,255,0.07)" stroke-width="0.8"/><line x1="1212.00" y1="234.5" x2="1212.00" y2="385.3" stroke="rgba(255,255,255,0.07)" stroke-width="0.8"/><line x1="1217.78" y1="234.5" x2="1217.78" y2="385.3" stroke="rgba(255,255,255,0.07)" stroke-width="0.8"/><line x1="1223.56" y1="234.5" x2="1223.56" y2="385.3" stroke="rgba(255,255,255,0.07)" stroke-width="0.8"/><line x1="1229.34" y1="234.5" x2="1229.34" y2="385.3" stroke="rgba(255,255,255,0.07)" stroke-width="0.8"/><line x1="1235.12" y1="234.5" x2="1235.12" y2="385.3" stroke="rgba(255,255,255,0.07)" stroke-width="0.8"/><line x1="1240.90" y1="234.5" x2="1240.90" y2="385.3" stroke="rgba(255,255,255,0.07)" stroke-width="0.8"/><line x1="1246.68" y1="234.5" x2="1246.68" y2="385.3" stroke="rgba(255,255,255,0.07)" stroke-width="0.8"/><line x1="1252.46" y1="234.5" x2="1252.46" y2="385.3" stroke="rgba(255,255,255,0.07)" stroke-width="0.8"/><line x1="1258.24" y1="234.5" x2="1258.24" y2="385.3" stroke="rgba(255,255,255,0.07)" stroke-width="0.8"/><line x1="1264.02" y1="234.5" x2="1264.02" y2="385.3" stroke="rgba(255,255,255,0.07)" stroke-width="0.8"/><line x1="1269.80" y1="234.5" x2="1269.80" y2="385.3" stroke="rgba(255,255,255,0.07)" stroke-width="0.8"/><line x1="1275.58" y1="234.5" x2="1275.58" y2="385.3" stroke="rgba(255,255,255,0.07)" stroke-width="0.8"/><line x1="1281.36" y1="234.5" x2="1281.36" y2="385.3" stroke="rgba(255,255,255,0.07)" stroke-width="0.8"/><line x1="1287.14" y1="234.5" x2="1287.14" y2="385.3" stroke="rgba(255,255,255,0.07)" stroke-width="0.8"/><line x1="1292.92" y1="234.5" x2="1292.92" y2="385.3" stroke="rgba(255,255,255,0.07)" stroke-width="0.8"/><line x1="1298.70" y1="234.5" x2="1298.70" y2="385.3" stroke="rgba(255,255,255,0.07)" stroke-width="0.8"/><line x1="1304.48" y1="234.5" x2="1304.48" y2="385.3" stroke="rgba(255,255,255,0.07)" stroke-width="0.8"/><line x1="1310.26" y1="234.5" x2="1310.26" y2="385.3" stroke="rgba(255,255,255,0.07)" stroke-width="0.8"/><line x1="1316.04" y1="234.5" x2="1316.04" y2="385.3" stroke="rgba(255,255,255,0.07)" stroke-width="0.8"/><line x1="1321.82" y1="234.5" x2="1321.82" y2="385.3" stroke="rgba(255,255,255,0.07)" stroke-width="0.8"/><line x1="1327.60" y1="234.5" x2="1327.60" y2="385.3" stroke="rgba(255,255,255,0.07)" stroke-width="0.8"/><line x1="1333.38" y1="234.5" x2="1333.38" y2="385.3" stroke="rgba(255,255,255,0.07)" stroke-width="0.8"/><line x1="1339.16" y1="234.5" x2="1339.16" y2="385.3" stroke="rgba(255,255,255,0.07)" stroke-width="0.8"/><line x1="1344.94" y1="234.5" x2="1344.94" y2="385.3" stroke="rgba(255,255,255,0.07)" stroke-width="0.8"/><line x1="1350.72" y1="234.5" x2="1350.72" y2="385.3" stroke="rgba(255,255,255,0.07)" stroke-width="0.8"/><line x1="1356.50" y1="234.5" x2="1356.50" y2="385.3" stroke="rgba(255,255,255,0.07)" stroke-width="0.8"/><line x1="1362.28" y1="234.5" x2="1362.28" y2="385.3" stroke="rgba(255,255,255,0.07)" stroke-width="0.8"/><line x1="1368.06" y1="234.5" x2="1368.06" y2="385.3" stroke="rgba(255,255,255,0.07)" stroke-width="0.8"/><line x1="1373.84" y1="234.5" x2="1373.84" y2="385.3" stroke="rgba(255,255,255,0.07)" stroke-width="0.8"/><line x1="1379.62" y1="234.5" x2="1379.62" y2="385.3" stroke="rgba(255,255,255,0.07)" stroke-width="0.8"/><line x1="1385.40" y1="234.5" x2="1385.40" y2="385.3" stroke="rgba(255,255,255,0.07)" stroke-width="0.8"/><line x1="1391.18" y1="234.5" x2="1391.18" y2="385.3" stroke="rgba(255,255,255,0.07)" stroke-width="0.8"/><line x1="1396.96" y1="234.5" x2="1396.96" y2="385.3" stroke="rgba(255,255,255,0.07)" stroke-width="0.8"/><line x1="1402.74" y1="234.5" x2="1402.74" y2="385.3" stroke="rgba(255,255,255,0.07)" stroke-width="0.8"/><line x1="1408.52" y1="234.5" x2="1408.52" y2="385.3" stroke="rgba(255,255,255,0.07)" stroke-width="0.8"/><line x1="1414.30" y1="234.5" x2="1414.30" y2="385.3" stroke="rgba(255,255,255,0.07)" stroke-width="0.8"/><line x1="1420.08" y1="234.5" x2="1420.08" y2="385.3" stroke="rgba(255,255,255,0.07)" stroke-width="0.8"/><line x1="1425.86" y1="234.5" x2="1425.86" y2="385.3" stroke="rgba(255,255,255,0.07)" stroke-width="0.8"/><line x1="1431.64" y1="234.5" x2="1431.64" y2="385.3" stroke="rgba(255,255,255,0.07)" stroke-width="0.8"/><line x1="1437.42" y1="234.5" x2="1437.42" y2="385.3" stroke="rgba(255,255,255,0.07)" stroke-width="0.8"/><line x1="1443.20" y1="234.5" x2="1443.20" y2="385.3" stroke="rgba(255,255,255,0.07)" stroke-width="0.8"/><line x1="1448.98" y1="234.5" x2="1448.98" y2="385.3" stroke="rgba(255,255,255,0.07)" stroke-width="0.8"/></g><line x1="1151.2" y1="307.50" x2="1451.9" y2="307.50" stroke="rgba(120,60,50,0.45)" stroke-width="0.9"/><line x1="1151.2" y1="237.60" x2="1451.9" y2="237.60" stroke="rgba(230,50,30,0.65)" stroke-width="1.05"/><line x1="1151.2" y1="371.40" x2="1451.9" y2="371.40" stroke="rgba(230,50,30,0.65)" stroke-width="1.05"/><g transform="translate(1147.40 382.39) scale(0.125)"><text x="0" y="0" font-family="Liberation Mono" font-size="38.40" font-weight="normal" fill="#111" stroke="#111" stroke-width="0.9" text-anchor="end" textLength="52.80" lengthAdjust="spacingAndGlyphs">-220</text></g><g transform="translate(1147.40 375.70) scale(0.125)"><text x="0" y="0" font-family="Liberation Mono" font-size="38.40" font-weight="normal" fill="#111" stroke="#111" stroke-width="0.9" text-anchor="end" textLength="52.80" lengthAdjust="spacingAndGlyphs">-200</text></g><g transform="translate(1147.40 369.01) scale(0.125)"><text x="0" y="0" font-family="Liberation Mono" font-size="38.40" font-weight="normal" fill="#111" stroke="#111" stroke-width="0.9" text-anchor="end" textLength="52.80" lengthAdjust="spacingAndGlyphs">-180</text></g><g transform="translate(1147.40 362.32) scale(0.125)"><text x="0" y="0" font-family="Liberation Mono" font-size="38.40" font-weight="normal" fill="#111" stroke="#111" stroke-width="0.9" text-anchor="end" textLength="52.80" lengthAdjust="spacingAndGlyphs">-160</text></g><g transform="translate(1147.40 355.63) scale(0.125)"><text x="0" y="0" font-family="Liberation Mono" font-size="38.40" font-weight="normal" fill="#111" stroke="#111" stroke-width="0.9" text-anchor="end" textLength="52.80" lengthAdjust="spacingAndGlyphs">-140</text></g><g transform="translate(1147.40 348.94) scale(0.125)"><text x="0" y="0" font-family="Liberation Mono" font-size="38.40" font-weight="normal" fill="#111" stroke="#111" stroke-width="0.9" text-anchor="end" textLength="52.80" lengthAdjust="spacingAndGlyphs">-120</text></g><g transform="translate(1147.40 342.25) scale(0.125)"><text x="0" y="0" font-family="Liberation Mono" font-size="38.40" font-weight="normal" fill="#111" stroke="#111" stroke-width="0.9" text-anchor="end" textLength="52.80" lengthAdjust="spacingAndGlyphs">-100</text></g><g transform="translate(1147.40 335.56) scale(0.125)"><text x="0" y="0" font-family="Liberation Mono" font-size="38.40" font-weight="normal" fill="#111" stroke="#111" stroke-width="0.9" text-anchor="end" textLength="39.60" lengthAdjust="spacingAndGlyphs">-80</text></g><g transform="translate(1147.40 328.87) scale(0.125)"><text x="0" y="0" font-family="Liberation Mono" font-size="38.40" font-weight="normal" fill="#111" stroke="#111" stroke-width="0.9" text-anchor="end" textLength="39.60" lengthAdjust="spacingAndGlyphs">-60</text></g><g transform="translate(1147.40 322.18) scale(0.125)"><text x="0" y="0" font-family="Liberation Mono" font-size="38.40" font-weight="normal" fill="#111" stroke="#111" stroke-width="0.9" text-anchor="end" textLength="39.60" lengthAdjust="spacingAndGlyphs">-40</text></g><g transform="translate(1147.40 315.49) scale(0.125)"><text x="0" y="0" font-family="Liberation Mono" font-size="38.40" font-weight="normal" fill="#111" stroke="#111" stroke-width="0.9" text-anchor="end" textLength="39.60" lengthAdjust="spacingAndGlyphs">-20</text></g><g transform="translate(1147.40 308.80) scale(0.125)"><text x="0" y="0" font-family="Liberation Mono" font-size="38.40" font-weight="normal" fill="#111" stroke="#111" stroke-width="0.9" text-anchor="end" textLength="13.20" lengthAdjust="spacingAndGlyphs">0</text></g><g transform="translate(1147.40 302.11) scale(0.125)"><text x="0" y="0" font-family="Liberation Mono" font-size="38.40" font-weight="normal" fill="#111" stroke="#111" stroke-width="0.9" text-anchor="end" textLength="26.40" lengthAdjust="spacingAndGlyphs">20</text></g><g transform="translate(1147.40 295.42) scale(0.125)"><text x="0" y="0" font-family="Liberation Mono" font-size="38.40" font-weight="normal" fill="#111" stroke="#111" stroke-width="0.9" text-anchor="end" textLength="26.40" lengthAdjust="spacingAndGlyphs">40</text></g><g transform="translate(1147.40 288.73) scale(0.125)"><text x="0" y="0" font-family="Liberation Mono" font-size="38.40" font-weight="normal" fill="#111" stroke="#111" stroke-width="0.9" text-anchor="end" textLength="26.40" lengthAdjust="spacingAndGlyphs">60</text></g><g transform="translate(1147.40 282.04) scale(0.125)"><text x="0" y="0" font-family="Liberation Mono" font-size="38.40" font-weight="normal" fill="#111" stroke="#111" stroke-width="0.9" text-anchor="end" textLength="26.40" lengthAdjust="spacingAndGlyphs">80</text></g><g transform="translate(1147.40 275.35) scale(0.125)"><text x="0" y="0" font-family="Liberation Mono" font-size="38.40" font-weight="normal" fill="#111" stroke="#111" stroke-width="0.9" text-anchor="end" textLength="39.60" lengthAdjust="spacingAndGlyphs">100</text></g><g transform="translate(1147.40 268.66) scale(0.125)"><text x="0" y="0" font-family="Liberation Mono" font-size="38.40" font-weight="normal" fill="#111" stroke="#111" stroke-width="0.9" text-anchor="end" textLength="39.60" lengthAdjust="spacingAndGlyphs">120</text></g><g transform="translate(1147.40 261.97) scale(0.125)"><text x="0" y="0" font-family="Liberation Mono" font-size="38.40" font-weight="normal" fill="#111" stroke="#111" stroke-width="0.9" text-anchor="end" textLength="39.60" lengthAdjust="spacingAndGlyphs">140</text></g><g transform="translate(1147.40 255.28) scale(0.125)"><text x="0" y="0" font-family="Liberation Mono" font-size="38.40" font-weight="normal" fill="#111" stroke="#111" stroke-width="0.9" text-anchor="end" textLength="39.60" lengthAdjust="spacingAndGlyphs">160</text></g><g transform="translate(1147.40 248.59) scale(0.125)"><text x="0" y="0" font-family="Liberation Mono" font-size="38.40" font-weight="normal" fill="#111" stroke="#111" stroke-width="0.9" text-anchor="end" textLength="39.60" lengthAdjust="spacingAndGlyphs">180</text></g><g transform="translate(1147.40 241.90) scale(0.125)"><text x="0" y="0" font-family="Liberation Mono" font-size="38.40" font-weight="normal" fill="#111" stroke="#111" stroke-width="0.9" text-anchor="end" textLength="39.60" lengthAdjust="spacingAndGlyphs">200</text></g><g transform="translate(1166.00 389.30) scale(0.125)"><text x="0" y="0" font-family="Liberation Mono" font-size="30.40" font-weight="normal" fill="#111" stroke="#111" stroke-width="0.9" text-anchor="middle" textLength="116.48" lengthAdjust="spacingAndGlyphs">Feb 2020</text></g><g transform="translate(1191.00 389.30) scale(0.125)"><text x="0" y="0" font-family="Liberation Mono" font-size="30.40" font-weight="normal" fill="#111" stroke="#111" stroke-width="0.9" text-anchor="middle" textLength="116.48" lengthAdjust="spacingAndGlyphs">Mar 2020</text></g><g transform="translate(1216.00 389.30) scale(0.125)"><text x="0" y="0" font-family="Liberation Mono" font-size="30.40" font-weight="normal" fill="#111" stroke="#111" stroke-width="0.9" text-anchor="middle" textLength="116.48" lengthAdjust="spacingAndGlyphs">Apr 2020</text></g><g transform="translate(1241.00 389.30) scale(0.125)"><text x="0" y="0" font-family="Liberation Mono" font-size="30.40" font-weight="normal" fill="#111" stroke="#111" stroke-width="0.9" text-anchor="middle" textLength="116.48" lengthAdjust="spacingAndGlyphs">May 2020</text></g><g transform="translate(1266.00 389.30) scale(0.125)"><text x="0" y="0" font-family="Liberation Mono" font-size="30.40" font-weight="normal" fill="#111" stroke="#111" stroke-width="0.9" text-anchor="middle" textLength="116.48" lengthAdjust="spacingAndGlyphs">Jun 2020</text></g><g transform="translate(1291.00 389.30) scale(0.125)"><text x="0" y="0" font-family="Liberation Mono" font-size="30.40" font-weight="normal" fill="#111" stroke="#111" stroke-width="0.9" text-anchor="middle" textLength="116.48" lengthAdjust="spacingAndGlyphs">Jul 2020</text></g><g transform="translate(1316.00 389.30) scale(0.125)"><text x="0" y="0" font-family="Liberation Mono" font-size="30.40" font-weight="normal" fill="#111" stroke="#111" stroke-width="0.9" text-anchor="middle" textLength="116.48" lengthAdjust="spacingAndGlyphs">Aug 2020</text></g><g transform="translate(1341.00 389.30) scale(0.125)"><text x="0" y="0" font-family="Liberation Mono" font-size="30.40" font-weight="normal" fill="#111" stroke="#111" stroke-width="0.9" text-anchor="middle" textLength="116.48" lengthAdjust="spacingAndGlyphs">Sep 2020</text></g><g transform="translate(1366.00 389.30) scale(0.125)"><text x="0" y="0" font-family="Liberation Mono" font-size="30.40" font-weight="normal" fill="#111" stroke="#111" stroke-width="0.9" text-anchor="middle" textLength="116.48" lengthAdjust="spacingAndGlyphs">Oct 2020</text></g><g transform="translate(1391.00 389.30) scale(0.125)"><text x="0" y="0" font-family="Liberation Mono" font-size="30.40" font-weight="normal" fill="#111" stroke="#111" stroke-width="0.9" text-anchor="middle" textLength="116.48" lengthAdjust="spacingAndGlyphs">Nov 2020</text></g><g transform="translate(1416.00 389.30) scale(0.125)"><text x="0" y="0" font-family="Liberation Mono" font-size="30.40" font-weight="normal" fill="#111" stroke="#111" stroke-width="0.9" text-anchor="middle" textLength="116.48" lengthAdjust="spacingAndGlyphs">Dec 2020</text></g><g transform="translate(1441.00 389.30) scale(0.125)"><text x="0" y="0" font-family="Liberation Mono" font-size="30.40" font-weight="normal" fill="#111" stroke="#111" stroke-width="0.9" text-anchor="middle" textLength="116.48" lengthAdjust="spacingAndGlyphs">Jan 2021</text></g><line x1="1150.7" y1="232.5" x2="1150.7" y2="386.3" stroke="#c8c8c8" stroke-width="1.3"/><line x1="1149.2" y1="385.3" x2="1454.9" y2="385.3" stroke="#c8c8c8" stroke-width="1.1"/><path d="M1149.2 232.5 l1.5 -1.8 l1.5 1.8 z" fill="#666"/><path d="M1454.9 383.8 l2 1.5 l-2 1.5 z" fill="#666"/><g transform="translate(1295.70 233.50) scale(0.125)"><text x="0" y="0" font-family="Liberation Mono" font-size="40.00" font-weight="normal" fill="#222" stroke="#222" stroke-width="0.9" text-anchor="middle" textLength="174.96" lengthAdjust="spacingAndGlyphs">Last Year</text></g><g transform="rotate(-90 1134.2 309.9)"><g transform="translate(1134.20 309.90) scale(0.125)"><text x="0" y="0" font-family="Liberation Mono" font-size="40.00" font-weight="normal" fill="#222" stroke="#222" stroke-width="0.9" text-anchor="middle" textLength="96.00" lengthAdjust="spacingAndGlyphs">Mbit/s</text></g></g><g transform="rotate(90 1458.4 246.5)"><g transform="translate(1458.40 246.50) scale(0.125)"><text x="0" y="0" font-family="Liberation Mono" font-size="20.80" font-weight="normal" fill="#ccc" stroke="#ccc" stroke-width="0.9" text-anchor="middle">RRDTOOL / TOBI OETIKER</text></g></g><rect x="1135.7" y="391.5" width="3.0" height="3.0" fill="#4caf3c"/><g transform="translate(1140.30 394.60) scale(0.125)"><text x="0" y="0" font-family="Liberation Mono" font-size="32.80" font-weight="normal" fill="#111" stroke="#111" stroke-width="0.9" text-anchor="start" textLength="134.40" lengthAdjust="spacingAndGlyphs">Download</text></g><rect x="1161.4" y="391.5" width="3.0" height="3.0" fill="#3a5fc0"/><g transform="translate(1166.10 394.60) scale(0.125)"><text x="0" y="0" font-family="Liberation Mono" font-size="32.80" font-weight="normal" fill="#111" stroke="#111" stroke-width="0.9" text-anchor="start" textLength="100.80" lengthAdjust="spacingAndGlyphs">Upload</text></g><rect x="1183.3" y="391.5" width="3.0" height="3.0" fill="#e03a1a"/><g transform="translate(1188.10 394.60) scale(0.125)"><text x="0" y="0" font-family="Liberation Mono" font-size="32.80" font-weight="normal" fill="#111" stroke="#111" stroke-width="0.9" text-anchor="start" textLength="50.40" lengthAdjust="spacingAndGlyphs">Avg</text></g><g transform="translate(1135.70 398.70) scale(0.125)"><text x="0" y="0" font-family="Liberation Mono" font-size="32.80" font-weight="normal" fill="#111" stroke="#111" stroke-width="0.9" text-anchor="start" textLength="588.00" lengthAdjust="spacingAndGlyphs">Last download bandwidth: 197.6 Mb/s</text></g><g transform="translate(1135.70 402.90) scale(0.125)"><text x="0" y="0" font-family="Liberation Mono" font-size="32.80" font-weight="normal" fill="#111" stroke="#111" stroke-width="0.9" text-anchor="start" textLength="554.40" lengthAdjust="spacingAndGlyphs">Last upload bandwidth: 187.6 Mb/s</text></g><g transform="translate(1135.70 407.00) scale(0.125)"><text x="0" y="0" font-family="Liberation Mono" font-size="32.80" font-weight="normal" fill="#111" stroke="#111" stroke-width="0.9" text-anchor="start" textLength="554.40" lengthAdjust="spacingAndGlyphs">Avg download bandwidth 208.2 Mb/s</text></g><g transform="translate(1135.70 411.20) scale(0.125)"><text x="0" y="0" font-family="Liberation Mono" font-size="32.80" font-weight="normal" fill="#111" stroke="#111" stroke-width="0.9" text-anchor="start" textLength="520.80" lengthAdjust="spacingAndGlyphs">Avg upload bandwidth 188.1 Mb/s</text></g>
<rect x="71.4" y="513.0" width="300.2" height="150.39999999999998" fill="#fdfdfd"/><line x1="83.87" y1="513.0" x2="83.87" y2="663.4" stroke="rgba(0,0,0,0.03)" stroke-width="0.8"/><line x1="96.40" y1="513.0" x2="96.40" y2="663.4" stroke="rgba(0,0,0,0.03)" stroke-width="0.8"/><line x1="108.93" y1="513.0" x2="108.93" y2="663.4" stroke="rgba(0,0,0,0.03)" stroke-width="0.8"/><line x1="121.46" y1="513.0" x2="121.46" y2="663.4" stroke="rgba(0,0,0,0.03)" stroke-width="0.8"/><line x1="133.99" y1="513.0" x2="133.99" y2="663.4" stroke="rgba(0,0,0,0.03)" stroke-width="0.8"/><line x1="146.52" y1="513.0" x2="146.52" y2="663.4" stroke="rgba(0,0,0,0.03)" stroke-width="0.8"/><line x1="159.05" y1="513.0" x2="159.05" y2="663.4" stroke="rgba(0,0,0,0.03)" stroke-width="0.8"/><line x1="171.58" y1="513.0" x2="171.58" y2="663.4" stroke="rgba(0,0,0,0.03)" stroke-width="0.8"/><line x1="184.11" y1="513.0" x2="184.11" y2="663.4" stroke="rgba(0,0,0,0.03)" stroke-width="0.8"/><line x1="196.64" y1="513.0" x2="196.64" y2="663.4" stroke="rgba(0,0,0,0.03)" stroke-width="0.8"/><line x1="209.17" y1="513.0" x2="209.17" y2="663.4" stroke="rgba(0,0,0,0.03)" stroke-width="0.8"/><line x1="221.70" y1="513.0" x2="221.70" y2="663.4" stroke="rgba(0,0,0,0.03)" stroke-width="0.8"/><line x1="234.23" y1="513.0" x2="234.23" y2="663.4" stroke="rgba(0,0,0,0.03)" stroke-width="0.8"/><line x1="246.76" y1="513.0" x2="246.76" y2="663.4" stroke="rgba(0,0,0,0.03)" stroke-width="0.8"/><line x1="259.29" y1="513.0" x2="259.29" y2="663.4" stroke="rgba(0,0,0,0.03)" stroke-width="0.8"/><line x1="271.82" y1="513.0" x2="271.82" y2="663.4" stroke="rgba(0,0,0,0.03)" stroke-width="0.8"/><line x1="284.35" y1="513.0" x2="284.35" y2="663.4" stroke="rgba(0,0,0,0.03)" stroke-width="0.8"/><line x1="296.88" y1="513.0" x2="296.88" y2="663.4" stroke="rgba(0,0,0,0.03)" stroke-width="0.8"/><line x1="309.41" y1="513.0" x2="309.41" y2="663.4" stroke="rgba(0,0,0,0.03)" stroke-width="0.8"/><line x1="321.94" y1="513.0" x2="321.94" y2="663.4" stroke="rgba(0,0,0,0.03)" stroke-width="0.8"/><line x1="334.47" y1="513.0" x2="334.47" y2="663.4" stroke="rgba(0,0,0,0.03)" stroke-width="0.8"/><line x1="347.00" y1="513.0" x2="347.00" y2="663.4" stroke="rgba(0,0,0,0.03)" stroke-width="0.8"/><line x1="359.53" y1="513.0" x2="359.53" y2="663.4" stroke="rgba(0,0,0,0.03)" stroke-width="0.8"/><line x1="372.06" y1="513.0" x2="372.06" y2="663.4" stroke="rgba(0,0,0,0.03)" stroke-width="0.8"/><line x1="71.4" y1="638.33" x2="371.6" y2="638.33" stroke="rgba(0,0,0,0.03)" stroke-width="0.8"/><line x1="71.4" y1="588.20" x2="371.6" y2="588.20" stroke="rgba(0,0,0,0.03)" stroke-width="0.8"/><line x1="71.4" y1="538.07" x2="371.6" y2="538.07" stroke="rgba(0,0,0,0.03)" stroke-width="0.8"/><line x1="77.60" y1="513.0" x2="77.60" y2="663.4" stroke="rgba(255,0,0,0.055)" stroke-width="0.8"/><line x1="90.13" y1="513.0" x2="90.13" y2="663.4" stroke="rgba(255,0,0,0.055)" stroke-width="0.8"/><line x1="102.66" y1="513.0" x2="102.66" y2="663.4" stroke="rgba(255,0,0,0.055)" stroke-width="0.8"/><line x1="115.19" y1="513.0" x2="115.19" y2="663.4" stroke="rgba(255,0,0,0.055)" stroke-width="0.8"/><line x1="127.72" y1="513.0" x2="127.72" y2="663.4" stroke="rgba(255,0,0,0.055)" stroke-width="0.8"/><line x1="140.25" y1="513.0" x2="140.25" y2="663.4" stroke="rgba(255,0,0,0.055)" stroke-width="0.8"/><line x1="152.78" y1="513.0" x2="152.78" y2="663.4" stroke="rgba(255,0,0,0.055)" stroke-width="0.8"/><line x1="165.31" y1="513.0" x2="165.31" y2="663.4" stroke="rgba(255,0,0,0.055)" stroke-width="0.8"/><line x1="177.84" y1="513.0" x2="177.84" y2="663.4" stroke="rgba(255,0,0,0.055)" stroke-width="0.8"/><line x1="190.37" y1="513.0" x2="190.37" y2="663.4" stroke="rgba(255,0,0,0.055)" stroke-width="0.8"/><line x1="202.90" y1="513.0" x2="202.90" y2="663.4" stroke="rgba(255,0,0,0.055)" stroke-width="0.8"/><line x1="215.43" y1="513.0" x2="215.43" y2="663.4" stroke="rgba(255,0,0,0.055)" stroke-width="0.8"/><line x1="227.96" y1="513.0" x2="227.96" y2="663.4" stroke="rgba(255,0,0,0.055)" stroke-width="0.8"/><line x1="240.49" y1="513.0" x2="240.49" y2="663.4" stroke="rgba(255,0,0,0.055)" stroke-width="0.8"/><line x1="253.02" y1="513.0" x2="253.02" y2="663.4" stroke="rgba(255,0,0,0.055)" stroke-width="0.8"/><line x1="265.55" y1="513.0" x2="265.55" y2="663.4" stroke="rgba(255,0,0,0.055)" stroke-width="0.8"/><line x1="278.08" y1="513.0" x2="278.08" y2="663.4" stroke="rgba(255,0,0,0.055)" stroke-width="0.8"/><line x1="290.61" y1="513.0" x2="290.61" y2="663.4" stroke="rgba(255,0,0,0.055)" stroke-width="0.8"/><line x1="303.14" y1="513.0" x2="303.14" y2="663.4" stroke="rgba(255,0,0,0.055)" stroke-width="0.8"/><line x1="315.67" y1="513.0" x2="315.67" y2="663.4" stroke="rgba(255,0,0,0.055)" stroke-width="0.8"/><line x1="328.20" y1="513.0" x2="328.20" y2="663.4" stroke="rgba(255,0,0,0.055)" stroke-width="0.8"/><line x1="340.73" y1="513.0" x2="340.73" y2="663.4" stroke="rgba(255,0,0,0.055)" stroke-width="0.8"/><line x1="353.26" y1="513.0" x2="353.26" y2="663.4" stroke="rgba(255,0,0,0.055)" stroke-width="0.8"/><line x1="365.79" y1="513.0" x2="365.79" y2="663.4" stroke="rgba(255,0,0,0.055)" stroke-width="0.8"/><line x1="71.4" y1="663.40" x2="371.6" y2="663.40" stroke="rgba(255,0,0,0.055)" stroke-width="0.8"/><line x1="71.4" y1="613.27" x2="371.6" y2="613.27" stroke="rgba(255,0,0,0.055)" stroke-width="0.8"/><line x1="71.4" y1="563.13" x2="371.6" y2="563.13" stroke="rgba(255,0,0,0.055)" stroke-width="0.8"/><line x1="71.4" y1="513.00" x2="371.6" y2="513.00" stroke="rgba(255,0,0,0.055)" stroke-width="0.8"/><line x1="71.4" y1="632.30" x2="371.6" y2="632.30" stroke="rgba(235,110,80,0.62)" stroke-width="1.0"/><path d="M71.40 543.40 L83.70 543.40 L83.70 627.20 L95.50 627.20 L95.50 651.60 L108.50 651.60 L108.50 660.50 L120.60 660.50 L120.60 623.30 L133.00 623.30 L133.00 622.50 L145.60 622.50 L145.60 626.50 L158.50 626.50 L158.50 608.20 L170.60 608.20 L170.60 661.00 L183.30 661.00 L183.30 657.00 L196.00 657.00 L196.00 659.60 L208.30 659.60 L208.30 623.00 L221.00 623.00 L221.00 658.00 L233.50 658.00 L233.50 616.20 L245.90 616.20 L245.90 623.70 L258.50 623.70 L258.50 603.40 L271.30 603.40 L271.30 621.40 L284.00 621.40 L284.00 621.00 L296.40 621.00 L296.40 620.60 L308.80 620.60 L308.80 655.40 L321.20 655.40 L321.20 662.60 L333.60 662.60 L333.60 619.60 L346.30 619.60 L346.30 659.30 L358.70 659.30 L358.70 652.70 L371.50 652.70" fill="none" stroke="#5f80ca" stroke-width="1.0" stroke-linejoin="miter"/><g transform="translate(67.60 664.70) scale(0.125)"><text x="0" y="0" font-family="Liberation Mono" font-size="38.40" font-weight="normal" fill="#111" stroke="#111" stroke-width="0.9" text-anchor="end" textLength="39.60" lengthAdjust="spacingAndGlyphs">2.0</text></g><g transform="translate(67.60 614.57) scale(0.125)"><text x="0" y="0" font-family="Liberation Mono" font-size="38.40" font-weight="normal" fill="#111" stroke="#111" stroke-width="0.9" text-anchor="end" textLength="39.60" lengthAdjust="spacingAndGlyphs">4.0</text></g><g transform="translate(67.60 564.43) scale(0.125)"><text x="0" y="0" font-family="Liberation Mono" font-size="38.40" font-weight="normal" fill="#111" stroke="#111" stroke-width="0.9" text-anchor="end" textLength="39.60" lengthAdjust="spacingAndGlyphs">6.0</text></g><g transform="translate(67.60 514.30) scale(0.125)"><text x="0" y="0" font-family="Liberation Mono" font-size="38.40" font-weight="normal" fill="#111" stroke="#111" stroke-width="0.9" text-anchor="end" textLength="39.60" lengthAdjust="spacingAndGlyphs">8.0</text></g><g transform="translate(102.00 667.40) scale(0.125)"><text x="0" y="0" font-family="Liberation Mono" font-size="30.40" font-weight="normal" fill="#111" stroke="#111" stroke-width="0.9" text-anchor="middle" textLength="131.04" lengthAdjust="spacingAndGlyphs">Wed 12:00</text></g><g transform="translate(140.00 667.40) scale(0.125)"><text x="0" y="0" font-family="Liberation Mono" font-size="30.40" font-weight="normal" fill="#111" stroke="#111" stroke-width="0.9" text-anchor="middle" textLength="131.04" lengthAdjust="spacingAndGlyphs">Wed 15:00</text></g><g transform="translate(177.00 667.40) scale(0.125)"><text x="0" y="0" font-family="Liberation Mono" font-size="30.40" font-weight="normal" fill="#111" stroke="#111" stroke-width="0.9" text-anchor="middle" textLength="131.04" lengthAdjust="spacingAndGlyphs">Wed 18:00</text></g><g transform="translate(215.00 667.40) scale(0.125)"><text x="0" y="0" font-family="Liberation Mono" font-size="30.40" font-weight="normal" fill="#111" stroke="#111" stroke-width="0.9" text-anchor="middle" textLength="131.04" lengthAdjust="spacingAndGlyphs">Wed 21:00</text></g><g transform="translate(252.70 667.40) scale(0.125)"><text x="0" y="0" font-family="Liberation Mono" font-size="30.40" font-weight="normal" fill="#111" stroke="#111" stroke-width="0.9" text-anchor="middle" textLength="131.04" lengthAdjust="spacingAndGlyphs">Thu 00:00</text></g><g transform="translate(290.00 667.40) scale(0.125)"><text x="0" y="0" font-family="Liberation Mono" font-size="30.40" font-weight="normal" fill="#111" stroke="#111" stroke-width="0.9" text-anchor="middle" textLength="131.04" lengthAdjust="spacingAndGlyphs">Thu 03:00</text></g><g transform="translate(327.70 667.40) scale(0.125)"><text x="0" y="0" font-family="Liberation Mono" font-size="30.40" font-weight="normal" fill="#111" stroke="#111" stroke-width="0.9" text-anchor="middle" textLength="131.04" lengthAdjust="spacingAndGlyphs">Thu 06:00</text></g><g transform="translate(365.50 667.40) scale(0.125)"><text x="0" y="0" font-family="Liberation Mono" font-size="30.40" font-weight="normal" fill="#111" stroke="#111" stroke-width="0.9" text-anchor="middle" textLength="131.04" lengthAdjust="spacingAndGlyphs">Thu 09:00</text></g><line x1="70.9" y1="511.0" x2="70.9" y2="664.4" stroke="#c8c8c8" stroke-width="1.3"/><line x1="69.4" y1="663.4" x2="374.6" y2="663.4" stroke="#c8c8c8" stroke-width="1.1"/><path d="M69.4 511.0 l1.5 -1.8 l1.5 1.8 z" fill="#666"/><path d="M374.6 661.9 l2 1.5 l-2 1.5 z" fill="#666"/><g transform="translate(215.90 512.00) scale(0.125)"><text x="0" y="0" font-family="Liberation Mono" font-size="40.00" font-weight="normal" fill="#222" stroke="#222" stroke-width="0.9" text-anchor="middle" textLength="155.52" lengthAdjust="spacingAndGlyphs">Last Day</text></g><g transform="rotate(-90 54.400000000000006 588.2)"><g transform="translate(54.40 588.20) scale(0.125)"><text x="0" y="0" font-family="Liberation Mono" font-size="40.00" font-weight="normal" fill="#222" stroke="#222" stroke-width="0.9" text-anchor="middle" textLength="32.00" lengthAdjust="spacingAndGlyphs">ms</text></g></g><g transform="rotate(90 378.1 525.0)"><g transform="translate(378.10 525.00) scale(0.125)"><text x="0" y="0" font-family="Liberation Mono" font-size="20.80" font-weight="normal" fill="#ccc" stroke="#ccc" stroke-width="0.9" text-anchor="middle">RRDTOOL / TOBI OETIKER</text></g></g><rect x="55.900000000000006" y="669.6" width="3.0" height="3.0" fill="#e03a1a"/><g transform="translate(60.50 672.70) scale(0.125)"><text x="0" y="0" font-family="Liberation Mono" font-size="32.80" font-weight="normal" fill="#111" stroke="#111" stroke-width="0.9" text-anchor="start" textLength="50.40" lengthAdjust="spacingAndGlyphs">Avg</text></g><rect x="55.900000000000006" y="673.8" width="3.0" height="3.0" fill="#3a5fc0"/><g transform="translate(60.50 676.90) scale(0.125)"><text x="0" y="0" font-family="Liberation Mono" font-size="32.80" font-weight="normal" fill="#111" stroke="#111" stroke-width="0.9" text-anchor="start" textLength="285.60" lengthAdjust="spacingAndGlyphs">Last latency (ms)</text></g><g transform="translate(55.90 681.10) scale(0.125)"><text x="0" y="0" font-family="Liberation Mono" font-size="32.80" font-weight="normal" fill="#111" stroke="#111" stroke-width="0.9" text-anchor="start" textLength="302.40" lengthAdjust="spacingAndGlyphs">Avg latency 3.3 ms</text></g>
<rect x="431.4" y="513.0" width="300.2" height="150.39999999999998" fill="#fdfdfd"/><line x1="436.10" y1="513.0" x2="436.10" y2="663.4" stroke="rgba(0,0,0,0.03)" stroke-width="0.8"/><line x1="446.81" y1="513.0" x2="446.81" y2="663.4" stroke="rgba(0,0,0,0.03)" stroke-width="0.8"/><line x1="457.52" y1="513.0" x2="457.52" y2="663.4" stroke="rgba(0,0,0,0.03)" stroke-width="0.8"/><line x1="468.23" y1="513.0" x2="468.23" y2="663.4" stroke="rgba(0,0,0,0.03)" stroke-width="0.8"/><line x1="478.94" y1="513.0" x2="478.94" y2="663.4" stroke="rgba(0,0,0,0.03)" stroke-width="0.8"/><line x1="489.65" y1="513.0" x2="489.65" y2="663.4" stroke="rgba(0,0,0,0.03)" stroke-width="0.8"/><line x1="500.36" y1="513.0" x2="500.36" y2="663.4" stroke="rgba(0,0,0,0.03)" stroke-width="0.8"/><line x1="511.07" y1="513.0" x2="511.07" y2="663.4" stroke="rgba(0,0,0,0.03)" stroke-width="0.8"/><line x1="521.78" y1="513.0" x2="521.78" y2="663.4" stroke="rgba(0,0,0,0.03)" stroke-width="0.8"/><line x1="532.49" y1="513.0" x2="532.49" y2="663.4" stroke="rgba(0,0,0,0.03)" stroke-width="0.8"/><line x1="543.20" y1="513.0" x2="543.20" y2="663.4" stroke="rgba(0,0,0,0.03)" stroke-width="0.8"/><line x1="553.91" y1="513.0" x2="553.91" y2="663.4" stroke="rgba(0,0,0,0.03)" stroke-width="0.8"/><line x1="564.62" y1="513.0" x2="564.62" y2="663.4" stroke="rgba(0,0,0,0.03)" stroke-width="0.8"/><line x1="575.33" y1="513.0" x2="575.33" y2="663.4" stroke="rgba(0,0,0,0.03)" stroke-width="0.8"/><line x1="586.04" y1="513.0" x2="586.04" y2="663.4" stroke="rgba(0,0,0,0.03)" stroke-width="0.8"/><line x1="596.75" y1="513.0" x2="596.75" y2="663.4" stroke="rgba(0,0,0,0.03)" stroke-width="0.8"/><line x1="607.46" y1="513.0" x2="607.46" y2="663.4" stroke="rgba(0,0,0,0.03)" stroke-width="0.8"/><line x1="618.17" y1="513.0" x2="618.17" y2="663.4" stroke="rgba(0,0,0,0.03)" stroke-width="0.8"/><line x1="628.88" y1="513.0" x2="628.88" y2="663.4" stroke="rgba(0,0,0,0.03)" stroke-width="0.8"/><line x1="639.59" y1="513.0" x2="639.59" y2="663.4" stroke="rgba(0,0,0,0.03)" stroke-width="0.8"/><line x1="650.30" y1="513.0" x2="650.30" y2="663.4" stroke="rgba(0,0,0,0.03)" stroke-width="0.8"/><line x1="661.01" y1="513.0" x2="661.01" y2="663.4" stroke="rgba(0,0,0,0.03)" stroke-width="0.8"/><line x1="671.72" y1="513.0" x2="671.72" y2="663.4" stroke="rgba(0,0,0,0.03)" stroke-width="0.8"/><line x1="682.43" y1="513.0" x2="682.43" y2="663.4" stroke="rgba(0,0,0,0.03)" stroke-width="0.8"/><line x1="693.14" y1="513.0" x2="693.14" y2="663.4" stroke="rgba(0,0,0,0.03)" stroke-width="0.8"/><line x1="703.85" y1="513.0" x2="703.85" y2="663.4" stroke="rgba(0,0,0,0.03)" stroke-width="0.8"/><line x1="714.56" y1="513.0" x2="714.56" y2="663.4" stroke="rgba(0,0,0,0.03)" stroke-width="0.8"/><line x1="725.27" y1="513.0" x2="725.27" y2="663.4" stroke="rgba(0,0,0,0.03)" stroke-width="0.8"/><line x1="431.4" y1="652.66" x2="731.5999999999999" y2="652.66" stroke="rgba(0,0,0,0.03)" stroke-width="0.8"/><line x1="431.4" y1="631.17" x2="731.5999999999999" y2="631.17" stroke="rgba(0,0,0,0.03)" stroke-width="0.8"/><line x1="431.4" y1="609.69" x2="731.5999999999999" y2="609.69" stroke="rgba(0,0,0,0.03)" stroke-width="0.8"/><line x1="431.4" y1="588.20" x2="731.5999999999999" y2="588.20" stroke="rgba(0,0,0,0.03)" stroke-width="0.8"/><line x1="431.4" y1="566.71" x2="731.5999999999999" y2="566.71" stroke="rgba(0,0,0,0.03)" stroke-width="0.8"/><line x1="431.4" y1="545.23" x2="731.5999999999999" y2="545.23" stroke="rgba(0,0,0,0.03)" stroke-width="0.8"/><line x1="431.4" y1="523.74" x2="731.5999999999999" y2="523.74" stroke="rgba(0,0,0,0.03)" stroke-width="0.8"/><line x1="456.40" y1="513.0" x2="456.40" y2="663.4" stroke="rgba(255,0,0,0.055)" stroke-width="0.8"/><line x1="499.25" y1="513.0" x2="499.25" y2="663.4" stroke="rgba(255,0,0,0.055)" stroke-width="0.8"/><line x1="542.10" y1="513.0" x2="542.10" y2="663.4" stroke="rgba(255,0,0,0.055)" stroke-width="0.8"/><line x1="584.95" y1="513.0" x2="584.95" y2="663.4" stroke="rgba(255,0,0,0.055)" stroke-width="0.8"/><line x1="627.80" y1="513.0" x2="627.80" y2="663.4" stroke="rgba(255,0,0,0.055)" stroke-width="0.8"/><line x1="670.65" y1="513.0" x2="670.65" y2="663.4" stroke="rgba(255,0,0,0.055)" stroke-width="0.8"/><line x1="713.50" y1="513.0" x2="713.50" y2="663.4" stroke="rgba(255,0,0,0.055)" stroke-width="0.8"/><line x1="431.4" y1="663.40" x2="731.5999999999999" y2="663.40" stroke="rgba(255,0,0,0.055)" stroke-width="0.8"/><line x1="431.4" y1="641.91" x2="731.5999999999999" y2="641.91" stroke="rgba(255,0,0,0.055)" stroke-width="0.8"/><line x1="431.4" y1="620.43" x2="731.5999999999999" y2="620.43" stroke="rgba(255,0,0,0.055)" stroke-width="0.8"/><line x1="431.4" y1="598.94" x2="731.5999999999999" y2="598.94" stroke="rgba(255,0,0,0.055)" stroke-width="0.8"/><line x1="431.4" y1="577.46" x2="731.5999999999999" y2="577.46" stroke="rgba(255,0,0,0.055)" stroke-width="0.8"/><line x1="431.4" y1="555.97" x2="731.5999999999999" y2="555.97" stroke="rgba(255,0,0,0.055)" stroke-width="0.8"/><line x1="431.4" y1="534.49" x2="731.5999999999999" y2="534.49" stroke="rgba(255,0,0,0.055)" stroke-width="0.8"/><line x1="431.4" y1="513.00" x2="731.5999999999999" y2="513.00" stroke="rgba(255,0,0,0.055)" stroke-width="0.8"/><line x1="431.4" y1="630.40" x2="731.5999999999999" y2="630.40" stroke="rgba(235,110,80,0.62)" stroke-width="1.0"/><path d="M444.60 602.00 L445.00 602.00 L445.00 583.70 L446.80 583.70 L446.80 638.00 L448.50 638.00 L448.50 587.60 L450.60 587.60 L450.60 640.60 L452.40 640.60 L452.40 586.30 L454.30 586.30 L454.30 602.00 L455.60 602.00 L455.60 627.50 L457.40 627.50 L457.40 593.50 L459.30 593.50 L459.30 587.00 L461.60 587.00 L461.60 643.20 L464.20 643.20 L464.20 641.90 L464.80 641.90 L464.80 605.30 L466.80 605.30 L466.80 643.20 L468.10 643.20 L468.10 645.20 L470.00 645.20 L470.00 641.60 L473.30 641.60 L473.30 640.60 L475.30 640.60 L475.30 625.60 L477.30 625.60 L477.30 589.00 L479.20 589.00 L479.20 606.00 L480.50 606.00 L480.50 572.40 L482.50 572.40 L482.50 641.90 L484.40 641.90 L484.40 623.60 L486.00 623.60 L486.00 642.50 L487.70 642.50 L487.70 585.70 L489.90 585.70 L489.90 607.30 L491.90 607.30 L491.90 643.90 L494.60 643.90 L494.60 636.70 L496.90 636.70 L496.90 641.90 L500.20 641.90 L500.20 640.60 L502.20 640.60 L502.20 587.00 L504.20 587.00 L504.20 600.30 L505.70 600.30 L505.70 637.30 L507.40 637.30 L507.40 641.20 L509.40 641.20 L509.40 643.90 L512.60 643.90 L512.60 600.30 L514.60 600.30 L514.60 641.90 L517.90 641.90 L517.90 643.50 L522.50 643.50 L522.50 640.60 L524.00 640.60 L524.00 609.20 L525.70 609.20 L525.70 585.70 L527.70 585.70 L527.70 577.80 L529.60 577.80 L529.60 642.50 L532.30 642.50 L532.30 604.60 L534.20 604.60 L534.20 582.40 L536.60 582.40 L536.60 640.60 L538.40 640.60 L538.40 601.40 L540.40 601.40 L540.40 643.20 L543.40 643.20 L543.40 576.50 L545.30 576.50 L545.30 602.00 L547.30 602.00 L547.30 573.90 L548.60 573.90 L548.60 567.50 L550.60 567.50 L550.60 641.70 L554.30 641.70 L554.30 640.20 L555.80 640.20 L555.80 643.80 L558.00 643.80 L558.00 642.40 L561.30 642.40 L561.30 591.10 L563.70 591.10 L563.70 592.50 L565.60 592.50 L565.60 642.40 L566.60 642.40 L566.60 582.40 L568.50 582.40 L568.50 643.10 L575.70 643.10 L575.70 641.00 L577.50 641.00 L577.50 604.10 L578.90 604.10 L578.90 598.30 L581.10 598.30 L581.10 641.70 L584.00 641.70 L584.00 638.80 L586.10 638.80 L586.10 526.20 L588.70 526.20 L588.70 593.30 L590.20 593.30 L590.20 641.00 L591.90 641.00 L591.90 551.20 L593.40 551.20 L593.40 643.10 L595.50 643.10 L595.50 642.40 L599.90 642.40 L599.90 590.60 L602.00 590.60 L602.00 643.00 L604.00 643.00 L604.00 643.00" fill="none" stroke="#5f80ca" stroke-width="1.0" stroke-linejoin="miter"/><g transform="translate(427.60 664.70) scale(0.125)"><text x="0" y="0" font-family="Liberation Mono" font-size="38.40" font-weight="normal" fill="#111" stroke="#111" stroke-width="0.9" text-anchor="end" textLength="13.20" lengthAdjust="spacingAndGlyphs">2</text></g><g transform="translate(427.60 643.21) scale(0.125)"><text x="0" y="0" font-family="Liberation Mono" font-size="38.40" font-weight="normal" fill="#111" stroke="#111" stroke-width="0.9" text-anchor="end" textLength="13.20" lengthAdjust="spacingAndGlyphs">4</text></g><g transform="translate(427.60 621.73) scale(0.125)"><text x="0" y="0" font-family="Liberation Mono" font-size="38.40" font-weight="normal" fill="#111" stroke="#111" stroke-width="0.9" text-anchor="end" textLength="13.20" lengthAdjust="spacingAndGlyphs">6</text></g><g transform="translate(427.60 600.24) scale(0.125)"><text x="0" y="0" font-family="Liberation Mono" font-size="38.40" font-weight="normal" fill="#111" stroke="#111" stroke-width="0.9" text-anchor="end" textLength="13.20" lengthAdjust="spacingAndGlyphs">8</text></g><g transform="translate(427.60 578.76) scale(0.125)"><text x="0" y="0" font-family="Liberation Mono" font-size="38.40" font-weight="normal" fill="#111" stroke="#111" stroke-width="0.9" text-anchor="end" textLength="26.40" lengthAdjust="spacingAndGlyphs">10</text></g><g transform="translate(427.60 557.27) scale(0.125)"><text x="0" y="0" font-family="Liberation Mono" font-size="38.40" font-weight="normal" fill="#111" stroke="#111" stroke-width="0.9" text-anchor="end" textLength="26.40" lengthAdjust="spacingAndGlyphs">12</text></g><g transform="translate(427.60 535.79) scale(0.125)"><text x="0" y="0" font-family="Liberation Mono" font-size="38.40" font-weight="normal" fill="#111" stroke="#111" stroke-width="0.9" text-anchor="end" textLength="26.40" lengthAdjust="spacingAndGlyphs">14</text></g><g transform="translate(427.60 514.30) scale(0.125)"><text x="0" y="0" font-family="Liberation Mono" font-size="38.40" font-weight="normal" fill="#111" stroke="#111" stroke-width="0.9" text-anchor="end" textLength="26.40" lengthAdjust="spacingAndGlyphs">16</text></g><g transform="translate(436.00 667.40) scale(0.125)"><text x="0" y="0" font-family="Liberation Mono" font-size="30.40" font-weight="normal" fill="#111" stroke="#111" stroke-width="0.9" text-anchor="middle" textLength="145.60" lengthAdjust="spacingAndGlyphs">Thu 21 Jan</text></g><g transform="translate(478.00 667.40) scale(0.125)"><text x="0" y="0" font-family="Liberation Mono" font-size="30.40" font-weight="normal" fill="#111" stroke="#111" stroke-width="0.9" text-anchor="middle" textLength="145.60" lengthAdjust="spacingAndGlyphs">Fri 22 Jan</text></g><g transform="translate(521.50 667.40) scale(0.125)"><text x="0" y="0" font-family="Liberation Mono" font-size="30.40" font-weight="normal" fill="#111" stroke="#111" stroke-width="0.9" text-anchor="middle" textLength="145.60" lengthAdjust="spacingAndGlyphs">Sat 23 Jan</text></g><g transform="translate(564.00 667.40) scale(0.125)"><text x="0" y="0" font-family="Liberation Mono" font-size="30.40" font-weight="normal" fill="#111" stroke="#111" stroke-width="0.9" text-anchor="middle" textLength="145.60" lengthAdjust="spacingAndGlyphs">Sun 24 Jan</text></g><g transform="translate(607.70 667.40) scale(0.125)"><text x="0" y="0" font-family="Liberation Mono" font-size="30.40" font-weight="normal" fill="#111" stroke="#111" stroke-width="0.9" text-anchor="middle" textLength="145.60" lengthAdjust="spacingAndGlyphs">Mon 25 Jan</text></g><g transform="translate(650.50 667.40) scale(0.125)"><text x="0" y="0" font-family="Liberation Mono" font-size="30.40" font-weight="normal" fill="#111" stroke="#111" stroke-width="0.9" text-anchor="middle" textLength="145.60" lengthAdjust="spacingAndGlyphs">Tue 26 Jan</text></g><g transform="translate(693.00 667.40) scale(0.125)"><text x="0" y="0" font-family="Liberation Mono" font-size="30.40" font-weight="normal" fill="#111" stroke="#111" stroke-width="0.9" text-anchor="middle" textLength="145.60" lengthAdjust="spacingAndGlyphs">Wed 27 Jan</text></g><line x1="430.9" y1="511.0" x2="430.9" y2="664.4" stroke="#c8c8c8" stroke-width="1.3"/><line x1="429.4" y1="663.4" x2="734.5999999999999" y2="663.4" stroke="#c8c8c8" stroke-width="1.1"/><path d="M429.4 511.0 l1.5 -1.8 l1.5 1.8 z" fill="#666"/><path d="M734.5999999999999 661.9 l2 1.5 l-2 1.5 z" fill="#666"/><g transform="translate(575.90 512.00) scale(0.125)"><text x="0" y="0" font-family="Liberation Mono" font-size="40.00" font-weight="normal" fill="#222" stroke="#222" stroke-width="0.9" text-anchor="middle" textLength="174.96" lengthAdjust="spacingAndGlyphs">Last Week</text></g><g transform="rotate(-90 414.4 588.2)"><g transform="translate(414.40 588.20) scale(0.125)"><text x="0" y="0" font-family="Liberation Mono" font-size="40.00" font-weight="normal" fill="#222" stroke="#222" stroke-width="0.9" text-anchor="middle" textLength="32.00" lengthAdjust="spacingAndGlyphs">ms</text></g></g><g transform="rotate(90 738.0999999999999 525.0)"><g transform="translate(738.10 525.00) scale(0.125)"><text x="0" y="0" font-family="Liberation Mono" font-size="20.80" font-weight="normal" fill="#ccc" stroke="#ccc" stroke-width="0.9" text-anchor="middle">RRDTOOL / TOBI OETIKER</text></g></g><rect x="415.9" y="669.6" width="3.0" height="3.0" fill="#e03a1a"/><g transform="translate(420.50 672.70) scale(0.125)"><text x="0" y="0" font-family="Liberation Mono" font-size="32.80" font-weight="normal" fill="#111" stroke="#111" stroke-width="0.9" text-anchor="start" textLength="50.40" lengthAdjust="spacingAndGlyphs">Avg</text></g><rect x="415.9" y="673.8" width="3.0" height="3.0" fill="#3a5fc0"/><g transform="translate(420.50 676.90) scale(0.125)"><text x="0" y="0" font-family="Liberation Mono" font-size="32.80" font-weight="normal" fill="#111" stroke="#111" stroke-width="0.9" text-anchor="start" textLength="285.60" lengthAdjust="spacingAndGlyphs">Last latency (ms)</text></g><g transform="translate(415.90 681.10) scale(0.125)"><text x="0" y="0" font-family="Liberation Mono" font-size="32.80" font-weight="normal" fill="#111" stroke="#111" stroke-width="0.9" text-anchor="start" textLength="302.40" lengthAdjust="spacingAndGlyphs">Avg latency 5.1 ms</text></g>
<rect x="791.3" y="513.0" width="300.2" height="150.39999999999998" fill="#fdfdfd"/><line x1="797.65" y1="513.0" x2="797.65" y2="663.4" stroke="rgba(0,0,0,0.03)" stroke-width="0.8"/><line x1="807.35" y1="513.0" x2="807.35" y2="663.4" stroke="rgba(0,0,0,0.03)" stroke-width="0.8"/><line x1="817.05" y1="513.0" x2="817.05" y2="663.4" stroke="rgba(0,0,0,0.03)" stroke-width="0.8"/><line x1="826.75" y1="513.0" x2="826.75" y2="663.4" stroke="rgba(0,0,0,0.03)" stroke-width="0.8"/><line x1="836.45" y1="513.0" x2="836.45" y2="663.4" stroke="rgba(0,0,0,0.03)" stroke-width="0.8"/><line x1="846.15" y1="513.0" x2="846.15" y2="663.4" stroke="rgba(0,0,0,0.03)" stroke-width="0.8"/><line x1="855.85" y1="513.0" x2="855.85" y2="663.4" stroke="rgba(0,0,0,0.03)" stroke-width="0.8"/><line x1="865.55" y1="513.0" x2="865.55" y2="663.4" stroke="rgba(0,0,0,0.03)" stroke-width="0.8"/><line x1="875.25" y1="513.0" x2="875.25" y2="663.4" stroke="rgba(0,0,0,0.03)" stroke-width="0.8"/><line x1="884.95" y1="513.0" x2="884.95" y2="663.4" stroke="rgba(0,0,0,0.03)" stroke-width="0.8"/><line x1="894.65" y1="513.0" x2="894.65" y2="663.4" stroke="rgba(0,0,0,0.03)" stroke-width="0.8"/><line x1="904.35" y1="513.0" x2="904.35" y2="663.4" stroke="rgba(0,0,0,0.03)" stroke-width="0.8"/><line x1="914.05" y1="513.0" x2="914.05" y2="663.4" stroke="rgba(0,0,0,0.03)" stroke-width="0.8"/><line x1="923.75" y1="513.0" x2="923.75" y2="663.4" stroke="rgba(0,0,0,0.03)" stroke-width="0.8"/><line x1="933.45" y1="513.0" x2="933.45" y2="663.4" stroke="rgba(0,0,0,0.03)" stroke-width="0.8"/><line x1="943.15" y1="513.0" x2="943.15" y2="663.4" stroke="rgba(0,0,0,0.03)" stroke-width="0.8"/><line x1="952.85" y1="513.0" x2="952.85" y2="663.4" stroke="rgba(0,0,0,0.03)" stroke-width="0.8"/><line x1="962.55" y1="513.0" x2="962.55" y2="663.4" stroke="rgba(0,0,0,0.03)" stroke-width="0.8"/><line x1="972.25" y1="513.0" x2="972.25" y2="663.4" stroke="rgba(0,0,0,0.03)" stroke-width="0.8"/><line x1="981.95" y1="513.0" x2="981.95" y2="663.4" stroke="rgba(0,0,0,0.03)" stroke-width="0.8"/><line x1="991.65" y1="513.0" x2="991.65" y2="663.4" stroke="rgba(0,0,0,0.03)" stroke-width="0.8"/><line x1="1001.35" y1="513.0" x2="1001.35" y2="663.4" stroke="rgba(0,0,0,0.03)" stroke-width="0.8"/><line x1="1011.05" y1="513.0" x2="1011.05" y2="663.4" stroke="rgba(0,0,0,0.03)" stroke-width="0.8"/><line x1="1020.75" y1="513.0" x2="1020.75" y2="663.4" stroke="rgba(0,0,0,0.03)" stroke-width="0.8"/><line x1="1030.45" y1="513.0" x2="1030.45" y2="663.4" stroke="rgba(0,0,0,0.03)" stroke-width="0.8"/><line x1="1040.15" y1="513.0" x2="1040.15" y2="663.4" stroke="rgba(0,0,0,0.03)" stroke-width="0.8"/><line x1="1049.85" y1="513.0" x2="1049.85" y2="663.4" stroke="rgba(0,0,0,0.03)" stroke-width="0.8"/><line x1="1059.55" y1="513.0" x2="1059.55" y2="663.4" stroke="rgba(0,0,0,0.03)" stroke-width="0.8"/><line x1="1069.25" y1="513.0" x2="1069.25" y2="663.4" stroke="rgba(0,0,0,0.03)" stroke-width="0.8"/><line x1="1078.95" y1="513.0" x2="1078.95" y2="663.4" stroke="rgba(0,0,0,0.03)" stroke-width="0.8"/><line x1="1088.65" y1="513.0" x2="1088.65" y2="663.4" stroke="rgba(0,0,0,0.03)" stroke-width="0.8"/><line x1="791.3" y1="644.60" x2="1091.5" y2="644.60" stroke="rgba(0,0,0,0.03)" stroke-width="0.8"/><line x1="791.3" y1="607.00" x2="1091.5" y2="607.00" stroke="rgba(0,0,0,0.03)" stroke-width="0.8"/><line x1="791.3" y1="569.40" x2="1091.5" y2="569.40" stroke="rgba(0,0,0,0.03)" stroke-width="0.8"/><line x1="791.3" y1="531.80" x2="1091.5" y2="531.80" stroke="rgba(0,0,0,0.03)" stroke-width="0.8"/><line x1="792.80" y1="513.0" x2="792.80" y2="663.4" stroke="rgba(255,0,0,0.055)" stroke-width="0.8"/><line x1="802.50" y1="513.0" x2="802.50" y2="663.4" stroke="rgba(255,0,0,0.055)" stroke-width="0.8"/><line x1="812.20" y1="513.0" x2="812.20" y2="663.4" stroke="rgba(255,0,0,0.055)" stroke-width="0.8"/><line x1="821.90" y1="513.0" x2="821.90" y2="663.4" stroke="rgba(255,0,0,0.055)" stroke-width="0.8"/><line x1="831.60" y1="513.0" x2="831.60" y2="663.4" stroke="rgba(255,0,0,0.055)" stroke-width="0.8"/><line x1="841.30" y1="513.0" x2="841.30" y2="663.4" stroke="rgba(255,0,0,0.055)" stroke-width="0.8"/><line x1="851.00" y1="513.0" x2="851.00" y2="663.4" stroke="rgba(255,0,0,0.055)" stroke-width="0.8"/><line x1="860.70" y1="513.0" x2="860.70" y2="663.4" stroke="rgba(255,0,0,0.055)" stroke-width="0.8"/><line x1="870.40" y1="513.0" x2="870.40" y2="663.4" stroke="rgba(255,0,0,0.055)" stroke-width="0.8"/><line x1="880.10" y1="513.0" x2="880.10" y2="663.4" stroke="rgba(255,0,0,0.055)" stroke-width="0.8"/><line x1="889.80" y1="513.0" x2="889.80" y2="663.4" stroke="rgba(255,0,0,0.055)" stroke-width="0.8"/><line x1="899.50" y1="513.0" x2="899.50" y2="663.4" stroke="rgba(255,0,0,0.055)" stroke-width="0.8"/><line x1="909.20" y1="513.0" x2="909.20" y2="663.4" stroke="rgba(255,0,0,0.055)" stroke-width="0.8"/><line x1="918.90" y1="513.0" x2="918.90" y2="663.4" stroke="rgba(255,0,0,0.055)" stroke-width="0.8"/><line x1="928.60" y1="513.0" x2="928.60" y2="663.4" stroke="rgba(255,0,0,0.055)" stroke-width="0.8"/><line x1="938.30" y1="513.0" x2="938.30" y2="663.4" stroke="rgba(255,0,0,0.055)" stroke-width="0.8"/><line x1="948.00" y1="513.0" x2="948.00" y2="663.4" stroke="rgba(255,0,0,0.055)" stroke-width="0.8"/><line x1="957.70" y1="513.0" x2="957.70" y2="663.4" stroke="rgba(255,0,0,0.055)" stroke-width="0.8"/><line x1="967.40" y1="513.0" x2="967.40" y2="663.4" stroke="rgba(255,0,0,0.055)" stroke-width="0.8"/><line x1="977.10" y1="513.0" x2="977.10" y2="663.4" stroke="rgba(255,0,0,0.055)" stroke-width="0.8"/><line x1="986.80" y1="513.0" x2="986.80" y2="663.4" stroke="rgba(255,0,0,0.055)" stroke-width="0.8"/><line x1="996.50" y1="513.0" x2="996.50" y2="663.4" stroke="rgba(255,0,0,0.055)" stroke-width="0.8"/><line x1="1006.20" y1="513.0" x2="1006.20" y2="663.4" stroke="rgba(255,0,0,0.055)" stroke-width="0.8"/><line x1="1015.90" y1="513.0" x2="1015.90" y2="663.4" stroke="rgba(255,0,0,0.055)" stroke-width="0.8"/><line x1="1025.60" y1="513.0" x2="1025.60" y2="663.4" stroke="rgba(255,0,0,0.055)" stroke-width="0.8"/><line x1="1035.30" y1="513.0" x2="1035.30" y2="663.4" stroke="rgba(255,0,0,0.055)" stroke-width="0.8"/><line x1="1045.00" y1="513.0" x2="1045.00" y2="663.4" stroke="rgba(255,0,0,0.055)" stroke-width="0.8"/><line x1="1054.70" y1="513.0" x2="1054.70" y2="663.4" stroke="rgba(255,0,0,0.055)" stroke-width="0.8"/><line x1="1064.40" y1="513.0" x2="1064.40" y2="663.4" stroke="rgba(255,0,0,0.055)" stroke-width="0.8"/><line x1="1074.10" y1="513.0" x2="1074.10" y2="663.4" stroke="rgba(255,0,0,0.055)" stroke-width="0.8"/><line x1="1083.80" y1="513.0" x2="1083.80" y2="663.4" stroke="rgba(255,0,0,0.055)" stroke-width="0.8"/><line x1="791.3" y1="663.40" x2="1091.5" y2="663.40" stroke="rgba(255,0,0,0.055)" stroke-width="0.8"/><line x1="791.3" y1="625.80" x2="1091.5" y2="625.80" stroke="rgba(255,0,0,0.055)" stroke-width="0.8"/><line x1="791.3" y1="588.20" x2="1091.5" y2="588.20" stroke="rgba(255,0,0,0.055)" stroke-width="0.8"/><line x1="791.3" y1="550.60" x2="1091.5" y2="550.60" stroke="rgba(255,0,0,0.055)" stroke-width="0.8"/><line x1="791.3" y1="513.00" x2="1091.5" y2="513.00" stroke="rgba(255,0,0,0.055)" stroke-width="0.8"/><line x1="791.3" y1="604.70" x2="1091.5" y2="604.70" stroke="rgba(235,110,80,0.62)" stroke-width="1.0"/><path d="M1026.60 555.80 L1027.50 555.80 L1027.50 576.00 L1028.30 576.00 L1028.30 563.60 L1029.50 563.60 L1029.50 576.00 L1030.30 576.00 L1030.30 579.60 L1031.30 579.60 L1031.30 625.60 L1031.90 625.60 L1031.90 605.50 L1032.80 605.50 L1032.80 625.60 L1033.40 625.60 L1033.40 574.40 L1034.40 574.40 L1034.40 569.20 L1036.00 569.20 L1036.00 577.00 L1036.80 577.00 L1036.80 615.30 L1037.50 615.30 L1037.50 623.60 L1038.60 623.60 L1038.60 615.30 L1039.00 615.30 L1039.00 567.70 L1040.20 567.70 L1040.20 625.10 L1041.10 625.10 L1041.10 602.40 L1041.80 602.40 L1041.80 625.00 L1042.40 625.00 L1042.40 603.00 L1043.20 603.00 L1043.20 627.20 L1044.20 627.20 L1044.20 555.80 L1045.10 555.80 L1045.10 597.20 L1045.80 597.20 L1045.80 567.20 L1046.60 567.20 L1046.60 596.20 L1047.40 596.20 L1047.40 567.20 L1048.30 567.20 L1048.30 603.40 L1049.00 603.40 L1049.00 522.20 L1050.00 522.20 L1050.00 604.50 L1050.70 604.50 L1050.70 626.70 L1051.60 626.70 L1051.60 600.00 L1052.50 600.00 L1052.50 567.20 L1053.40 567.20 L1053.40 591.00 L1054.50 591.00 L1054.50 610.00 L1055.00 610.00 L1055.00 627.70 L1056.30 627.70 L1056.30 578.00 L1057.20 578.00 L1057.20 627.00 L1058.20 627.00 L1058.20 600.00 L1058.70 600.00 L1058.70 536.70 L1060.00 536.70 L1060.00 600.00 L1060.70 600.00 L1060.70 581.00 L1061.60 581.00 L1061.60 600.30 L1062.30 600.30 L1062.30 649.90 L1063.80 649.90 L1063.80 612.20 L1064.60 612.20 L1064.60 609.60 L1065.80 609.60 L1065.80 626.70 L1066.40 626.70 L1066.40 631.30 L1067.50 631.30 L1067.50 615.30 L1068.50 615.30 L1068.50 631.00 L1069.50 631.00 L1069.50 615.30 L1070.60 615.30 L1070.60 606.00 L1071.30 606.00 L1071.30 629.80 L1072.20 629.80 L1072.20 606.00 L1073.10 606.00 L1073.10 603.40 L1074.00 603.40 L1074.00 629.00 L1074.70 629.00 L1074.70 640.10 L1075.50 640.10 L1075.50 625.00 L1076.20 625.00 L1076.20 631.30 L1077.30 631.30 L1077.30 625.60 L1078.30 625.60 L1078.30 602.40 L1079.20 602.40 L1079.20 628.00 L1079.90 628.00 L1079.90 611.70 L1080.80 611.70 L1080.80 635.50 L1082.40 635.50 L1082.40 638.00 L1083.50 638.00 L1083.50 640.00 L1084.50 640.00 L1084.50 643.70 L1085.50 643.70 L1085.50 650.40 L1086.30 650.40 L1086.30 633.40 L1087.10 633.40 L1087.10 629.30 L1088.20 629.30 L1088.20 640.00 L1089.10 640.00 L1089.10 649.90 L1090.70 649.90" fill="none" stroke="#5f80ca" stroke-width="1.0" stroke-linejoin="miter"/><g transform="translate(787.50 664.70) scale(0.125)"><text x="0" y="0" font-family="Liberation Mono" font-size="38.40" font-weight="normal" fill="#111" stroke="#111" stroke-width="0.9" text-anchor="end" textLength="13.20" lengthAdjust="spacingAndGlyphs">2</text></g><g transform="translate(787.50 627.10) scale(0.125)"><text x="0" y="0" font-family="Liberation Mono" font-size="38.40" font-weight="normal" fill="#111" stroke="#111" stroke-width="0.9" text-anchor="end" textLength="13.20" lengthAdjust="spacingAndGlyphs">4</text></g><g transform="translate(787.50 589.50) scale(0.125)"><text x="0" y="0" font-family="Liberation Mono" font-size="38.40" font-weight="normal" fill="#111" stroke="#111" stroke-width="0.9" text-anchor="end" textLength="13.20" lengthAdjust="spacingAndGlyphs">6</text></g><g transform="translate(787.50 551.90) scale(0.125)"><text x="0" y="0" font-family="Liberation Mono" font-size="38.40" font-weight="normal" fill="#111" stroke="#111" stroke-width="0.9" text-anchor="end" textLength="13.20" lengthAdjust="spacingAndGlyphs">8</text></g><g transform="translate(787.50 514.30) scale(0.125)"><text x="0" y="0" font-family="Liberation Mono" font-size="38.40" font-weight="normal" fill="#111" stroke="#111" stroke-width="0.9" text-anchor="end" textLength="26.40" lengthAdjust="spacingAndGlyphs">10</text></g><g transform="translate(802.10 667.40) scale(0.125)"><text x="0" y="0" font-family="Liberation Mono" font-size="30.40" font-weight="normal" fill="#111" stroke="#111" stroke-width="0.9" text-anchor="middle" textLength="87.36" lengthAdjust="spacingAndGlyphs">29 Dec</text></g><g transform="translate(821.60 667.40) scale(0.125)"><text x="0" y="0" font-family="Liberation Mono" font-size="30.40" font-weight="normal" fill="#111" stroke="#111" stroke-width="0.9" text-anchor="middle" textLength="87.36" lengthAdjust="spacingAndGlyphs">31 Dec</text></g><g transform="translate(841.10 667.40) scale(0.125)"><text x="0" y="0" font-family="Liberation Mono" font-size="30.40" font-weight="normal" fill="#111" stroke="#111" stroke-width="0.9" text-anchor="middle" textLength="87.36" lengthAdjust="spacingAndGlyphs">02 Jan</text></g><g transform="translate(860.60 667.40) scale(0.125)"><text x="0" y="0" font-family="Liberation Mono" font-size="30.40" font-weight="normal" fill="#111" stroke="#111" stroke-width="0.9" text-anchor="middle" textLength="87.36" lengthAdjust="spacingAndGlyphs">04 Jan</text></g><g transform="translate(880.10 667.40) scale(0.125)"><text x="0" y="0" font-family="Liberation Mono" font-size="30.40" font-weight="normal" fill="#111" stroke="#111" stroke-width="0.9" text-anchor="middle" textLength="87.36" lengthAdjust="spacingAndGlyphs">06 Jan</text></g><g transform="translate(899.60 667.40) scale(0.125)"><text x="0" y="0" font-family="Liberation Mono" font-size="30.40" font-weight="normal" fill="#111" stroke="#111" stroke-width="0.9" text-anchor="middle" textLength="87.36" lengthAdjust="spacingAndGlyphs">08 Jan</text></g><g transform="translate(919.10 667.40) scale(0.125)"><text x="0" y="0" font-family="Liberation Mono" font-size="30.40" font-weight="normal" fill="#111" stroke="#111" stroke-width="0.9" text-anchor="middle" textLength="87.36" lengthAdjust="spacingAndGlyphs">10 Jan</text></g><g transform="translate(938.60 667.40) scale(0.125)"><text x="0" y="0" font-family="Liberation Mono" font-size="30.40" font-weight="normal" fill="#111" stroke="#111" stroke-width="0.9" text-anchor="middle" textLength="87.36" lengthAdjust="spacingAndGlyphs">12 Jan</text></g><g transform="translate(958.10 667.40) scale(0.125)"><text x="0" y="0" font-family="Liberation Mono" font-size="30.40" font-weight="normal" fill="#111" stroke="#111" stroke-width="0.9" text-anchor="middle" textLength="87.36" lengthAdjust="spacingAndGlyphs">14 Jan</text></g><g transform="translate(977.60 667.40) scale(0.125)"><text x="0" y="0" font-family="Liberation Mono" font-size="30.40" font-weight="normal" fill="#111" stroke="#111" stroke-width="0.9" text-anchor="middle" textLength="87.36" lengthAdjust="spacingAndGlyphs">16 Jan</text></g><g transform="translate(997.10 667.40) scale(0.125)"><text x="0" y="0" font-family="Liberation Mono" font-size="30.40" font-weight="normal" fill="#111" stroke="#111" stroke-width="0.9" text-anchor="middle" textLength="87.36" lengthAdjust="spacingAndGlyphs">18 Jan</text></g><g transform="translate(1016.60 667.40) scale(0.125)"><text x="0" y="0" font-family="Liberation Mono" font-size="30.40" font-weight="normal" fill="#111" stroke="#111" stroke-width="0.9" text-anchor="middle" textLength="87.36" lengthAdjust="spacingAndGlyphs">20 Jan</text></g><g transform="translate(1036.10 667.40) scale(0.125)"><text x="0" y="0" font-family="Liberation Mono" font-size="30.40" font-weight="normal" fill="#111" stroke="#111" stroke-width="0.9" text-anchor="middle" textLength="87.36" lengthAdjust="spacingAndGlyphs">22 Jan</text></g><g transform="translate(1055.60 667.40) scale(0.125)"><text x="0" y="0" font-family="Liberation Mono" font-size="30.40" font-weight="normal" fill="#111" stroke="#111" stroke-width="0.9" text-anchor="middle" textLength="87.36" lengthAdjust="spacingAndGlyphs">24 Jan</text></g><g transform="translate(1075.10 667.40) scale(0.125)"><text x="0" y="0" font-family="Liberation Mono" font-size="30.40" font-weight="normal" fill="#111" stroke="#111" stroke-width="0.9" text-anchor="middle" textLength="87.36" lengthAdjust="spacingAndGlyphs">26 Jan</text></g><line x1="790.8" y1="511.0" x2="790.8" y2="664.4" stroke="#c8c8c8" stroke-width="1.3"/><line x1="789.3" y1="663.4" x2="1094.5" y2="663.4" stroke="#c8c8c8" stroke-width="1.1"/><path d="M789.3 511.0 l1.5 -1.8 l1.5 1.8 z" fill="#666"/><path d="M1094.5 661.9 l2 1.5 l-2 1.5 z" fill="#666"/><g transform="translate(935.80 512.00) scale(0.125)"><text x="0" y="0" font-family="Liberation Mono" font-size="40.00" font-weight="normal" fill="#222" stroke="#222" stroke-width="0.9" text-anchor="middle" textLength="194.40" lengthAdjust="spacingAndGlyphs">Last Month</text></g><g transform="rotate(-90 774.3 588.2)"><g transform="translate(774.30 588.20) scale(0.125)"><text x="0" y="0" font-family="Liberation Mono" font-size="40.00" font-weight="normal" fill="#222" stroke="#222" stroke-width="0.9" text-anchor="middle" textLength="32.00" lengthAdjust="spacingAndGlyphs">ms</text></g></g><g transform="rotate(90 1098.0 525.0)"><g transform="translate(1098.00 525.00) scale(0.125)"><text x="0" y="0" font-family="Liberation Mono" font-size="20.80" font-weight="normal" fill="#ccc" stroke="#ccc" stroke-width="0.9" text-anchor="middle">RRDTOOL / TOBI OETIKER</text></g></g><rect x="775.8" y="669.6" width="3.0" height="3.0" fill="#e03a1a"/><g transform="translate(780.40 672.70) scale(0.125)"><text x="0" y="0" font-family="Liberation Mono" font-size="32.80" font-weight="normal" fill="#111" stroke="#111" stroke-width="0.9" text-anchor="start" textLength="50.40" lengthAdjust="spacingAndGlyphs">Avg</text></g><rect x="775.8" y="673.8" width="3.0" height="3.0" fill="#3a5fc0"/><g transform="translate(780.40 676.90) scale(0.125)"><text x="0" y="0" font-family="Liberation Mono" font-size="32.80" font-weight="normal" fill="#111" stroke="#111" stroke-width="0.9" text-anchor="start" textLength="285.60" lengthAdjust="spacingAndGlyphs">Last latency (ms)</text></g><g transform="translate(775.80 681.10) scale(0.125)"><text x="0" y="0" font-family="Liberation Mono" font-size="32.80" font-weight="normal" fill="#111" stroke="#111" stroke-width="0.9" text-anchor="start" textLength="302.40" lengthAdjust="spacingAndGlyphs">Avg latency 5.1 ms</text></g>
<rect x="1151.3" y="513.0" width="300.2" height="150.39999999999998" fill="#fdfdfd"/><line x1="1154.30" y1="513.0" x2="1154.30" y2="663.4" stroke="rgba(0,0,0,0.03)" stroke-width="0.8"/><line x1="1160.08" y1="513.0" x2="1160.08" y2="663.4" stroke="rgba(0,0,0,0.03)" stroke-width="0.8"/><line x1="1165.86" y1="513.0" x2="1165.86" y2="663.4" stroke="rgba(0,0,0,0.03)" stroke-width="0.8"/><line x1="1171.64" y1="513.0" x2="1171.64" y2="663.4" stroke="rgba(0,0,0,0.03)" stroke-width="0.8"/><line x1="1177.42" y1="513.0" x2="1177.42" y2="663.4" stroke="rgba(0,0,0,0.03)" stroke-width="0.8"/><line x1="1183.20" y1="513.0" x2="1183.20" y2="663.4" stroke="rgba(0,0,0,0.03)" stroke-width="0.8"/><line x1="1188.98" y1="513.0" x2="1188.98" y2="663.4" stroke="rgba(0,0,0,0.03)" stroke-width="0.8"/><line x1="1194.76" y1="513.0" x2="1194.76" y2="663.4" stroke="rgba(0,0,0,0.03)" stroke-width="0.8"/><line x1="1200.54" y1="513.0" x2="1200.54" y2="663.4" stroke="rgba(0,0,0,0.03)" stroke-width="0.8"/><line x1="1206.32" y1="513.0" x2="1206.32" y2="663.4" stroke="rgba(0,0,0,0.03)" stroke-width="0.8"/><line x1="1212.10" y1="513.0" x2="1212.10" y2="663.4" stroke="rgba(0,0,0,0.03)" stroke-width="0.8"/><line x1="1217.88" y1="513.0" x2="1217.88" y2="663.4" stroke="rgba(0,0,0,0.03)" stroke-width="0.8"/><line x1="1223.66" y1="513.0" x2="1223.66" y2="663.4" stroke="rgba(0,0,0,0.03)" stroke-width="0.8"/><line x1="1229.44" y1="513.0" x2="1229.44" y2="663.4" stroke="rgba(0,0,0,0.03)" stroke-width="0.8"/><line x1="1235.22" y1="513.0" x2="1235.22" y2="663.4" stroke="rgba(0,0,0,0.03)" stroke-width="0.8"/><line x1="1241.00" y1="513.0" x2="1241.00" y2="663.4" stroke="rgba(0,0,0,0.03)" stroke-width="0.8"/><line x1="1246.78" y1="513.0" x2="1246.78" y2="663.4" stroke="rgba(0,0,0,0.03)" stroke-width="0.8"/><line x1="1252.56" y1="513.0" x2="1252.56" y2="663.4" stroke="rgba(0,0,0,0.03)" stroke-width="0.8"/><line x1="1258.34" y1="513.0" x2="1258.34" y2="663.4" stroke="rgba(0,0,0,0.03)" stroke-width="0.8"/><line x1="1264.12" y1="513.0" x2="1264.12" y2="663.4" stroke="rgba(0,0,0,0.03)" stroke-width="0.8"/><line x1="1269.90" y1="513.0" x2="1269.90" y2="663.4" stroke="rgba(0,0,0,0.03)" stroke-width="0.8"/><line x1="1275.68" y1="513.0" x2="1275.68" y2="663.4" stroke="rgba(0,0,0,0.03)" stroke-width="0.8"/><line x1="1281.46" y1="513.0" x2="1281.46" y2="663.4" stroke="rgba(0,0,0,0.03)" stroke-width="0.8"/><line x1="1287.24" y1="513.0" x2="1287.24" y2="663.4" stroke="rgba(0,0,0,0.03)" stroke-width="0.8"/><line x1="1293.02" y1="513.0" x2="1293.02" y2="663.4" stroke="rgba(0,0,0,0.03)" stroke-width="0.8"/><line x1="1298.80" y1="513.0" x2="1298.80" y2="663.4" stroke="rgba(0,0,0,0.03)" stroke-width="0.8"/><line x1="1304.58" y1="513.0" x2="1304.58" y2="663.4" stroke="rgba(0,0,0,0.03)" stroke-width="0.8"/><line x1="1310.36" y1="513.0" x2="1310.36" y2="663.4" stroke="rgba(0,0,0,0.03)" stroke-width="0.8"/><line x1="1316.14" y1="513.0" x2="1316.14" y2="663.4" stroke="rgba(0,0,0,0.03)" stroke-width="0.8"/><line x1="1321.92" y1="513.0" x2="1321.92" y2="663.4" stroke="rgba(0,0,0,0.03)" stroke-width="0.8"/><line x1="1327.70" y1="513.0" x2="1327.70" y2="663.4" stroke="rgba(0,0,0,0.03)" stroke-width="0.8"/><line x1="1333.48" y1="513.0" x2="1333.48" y2="663.4" stroke="rgba(0,0,0,0.03)" stroke-width="0.8"/><line x1="1339.26" y1="513.0" x2="1339.26" y2="663.4" stroke="rgba(0,0,0,0.03)" stroke-width="0.8"/><line x1="1345.04" y1="513.0" x2="1345.04" y2="663.4" stroke="rgba(0,0,0,0.03)" stroke-width="0.8"/><line x1="1350.82" y1="513.0" x2="1350.82" y2="663.4" stroke="rgba(0,0,0,0.03)" stroke-width="0.8"/><line x1="1356.60" y1="513.0" x2="1356.60" y2="663.4" stroke="rgba(0,0,0,0.03)" stroke-width="0.8"/><line x1="1362.38" y1="513.0" x2="1362.38" y2="663.4" stroke="rgba(0,0,0,0.03)" stroke-width="0.8"/><line x1="1368.16" y1="513.0" x2="1368.16" y2="663.4" stroke="rgba(0,0,0,0.03)" stroke-width="0.8"/><line x1="1373.94" y1="513.0" x2="1373.94" y2="663.4" stroke="rgba(0,0,0,0.03)" stroke-width="0.8"/><line x1="1379.72" y1="513.0" x2="1379.72" y2="663.4" stroke="rgba(0,0,0,0.03)" stroke-width="0.8"/><line x1="1385.50" y1="513.0" x2="1385.50" y2="663.4" stroke="rgba(0,0,0,0.03)" stroke-width="0.8"/><line x1="1391.28" y1="513.0" x2="1391.28" y2="663.4" stroke="rgba(0,0,0,0.03)" stroke-width="0.8"/><line x1="1397.06" y1="513.0" x2="1397.06" y2="663.4" stroke="rgba(0,0,0,0.03)" stroke-width="0.8"/><line x1="1402.84" y1="513.0" x2="1402.84" y2="663.4" stroke="rgba(0,0,0,0.03)" stroke-width="0.8"/><line x1="1408.62" y1="513.0" x2="1408.62" y2="663.4" stroke="rgba(0,0,0,0.03)" stroke-width="0.8"/><line x1="1414.40" y1="513.0" x2="1414.40" y2="663.4" stroke="rgba(0,0,0,0.03)" stroke-width="0.8"/><line x1="1420.18" y1="513.0" x2="1420.18" y2="663.4" stroke="rgba(0,0,0,0.03)" stroke-width="0.8"/><line x1="1425.96" y1="513.0" x2="1425.96" y2="663.4" stroke="rgba(0,0,0,0.03)" stroke-width="0.8"/><line x1="1431.74" y1="513.0" x2="1431.74" y2="663.4" stroke="rgba(0,0,0,0.03)" stroke-width="0.8"/><line x1="1437.52" y1="513.0" x2="1437.52" y2="663.4" stroke="rgba(0,0,0,0.03)" stroke-width="0.8"/><line x1="1443.30" y1="513.0" x2="1443.30" y2="663.4" stroke="rgba(0,0,0,0.03)" stroke-width="0.8"/><line x1="1449.08" y1="513.0" x2="1449.08" y2="663.4" stroke="rgba(0,0,0,0.03)" stroke-width="0.8"/><line x1="1151.3" y1="638.33" x2="1451.5" y2="638.33" stroke="rgba(0,0,0,0.03)" stroke-width="0.8"/><line x1="1151.3" y1="588.20" x2="1451.5" y2="588.20" stroke="rgba(0,0,0,0.03)" stroke-width="0.8"/><line x1="1151.3" y1="538.07" x2="1451.5" y2="538.07" stroke="rgba(0,0,0,0.03)" stroke-width="0.8"/><line x1="1154.30" y1="513.0" x2="1154.30" y2="663.4" stroke="rgba(255,0,0,0.055)" stroke-width="0.8"/><line x1="1179.35" y1="513.0" x2="1179.35" y2="663.4" stroke="rgba(255,0,0,0.055)" stroke-width="0.8"/><line x1="1204.40" y1="513.0" x2="1204.40" y2="663.4" stroke="rgba(255,0,0,0.055)" stroke-width="0.8"/><line x1="1229.45" y1="513.0" x2="1229.45" y2="663.4" stroke="rgba(255,0,0,0.055)" stroke-width="0.8"/><line x1="1254.50" y1="513.0" x2="1254.50" y2="663.4" stroke="rgba(255,0,0,0.055)" stroke-width="0.8"/><line x1="1279.55" y1="513.0" x2="1279.55" y2="663.4" stroke="rgba(255,0,0,0.055)" stroke-width="0.8"/><line x1="1304.60" y1="513.0" x2="1304.60" y2="663.4" stroke="rgba(255,0,0,0.055)" stroke-width="0.8"/><line x1="1329.65" y1="513.0" x2="1329.65" y2="663.4" stroke="rgba(255,0,0,0.055)" stroke-width="0.8"/><line x1="1354.70" y1="513.0" x2="1354.70" y2="663.4" stroke="rgba(255,0,0,0.055)" stroke-width="0.8"/><line x1="1379.75" y1="513.0" x2="1379.75" y2="663.4" stroke="rgba(255,0,0,0.055)" stroke-width="0.8"/><line x1="1404.80" y1="513.0" x2="1404.80" y2="663.4" stroke="rgba(255,0,0,0.055)" stroke-width="0.8"/><line x1="1429.85" y1="513.0" x2="1429.85" y2="663.4" stroke="rgba(255,0,0,0.055)" stroke-width="0.8"/><line x1="1151.3" y1="663.40" x2="1451.5" y2="663.40" stroke="rgba(255,0,0,0.055)" stroke-width="0.8"/><line x1="1151.3" y1="613.27" x2="1451.5" y2="613.27" stroke="rgba(255,0,0,0.055)" stroke-width="0.8"/><line x1="1151.3" y1="563.13" x2="1451.5" y2="563.13" stroke="rgba(255,0,0,0.055)" stroke-width="0.8"/><line x1="1151.3" y1="513.00" x2="1451.5" y2="513.00" stroke="rgba(255,0,0,0.055)" stroke-width="0.8"/><line x1="1151.3" y1="581.30" x2="1451.5" y2="581.30" stroke="rgba(235,110,80,0.62)" stroke-width="1.0"/><path d="M1445.80 534.10 L1445.80 573.80 L1446.50 573.80 L1446.50 551.50 L1447.00 551.50 L1447.00 586.30 L1447.50 586.30 L1447.50 553.00 L1448.00 553.00 L1448.00 573.00 L1448.50 573.00 L1448.50 558.10 L1449.20 558.10 L1449.20 573.00 L1449.60 573.00 L1449.60 611.90 L1450.00 611.90 L1450.00 600.30 L1450.50 600.30 L1450.50 634.30 L1451.00 634.30" fill="none" stroke="#5f80ca" stroke-width="1.0" stroke-linejoin="miter"/><g transform="translate(1147.50 664.70) scale(0.125)"><text x="0" y="0" font-family="Liberation Mono" font-size="38.40" font-weight="normal" fill="#111" stroke="#111" stroke-width="0.9" text-anchor="end" textLength="39.60" lengthAdjust="spacingAndGlyphs">2.0</text></g><g transform="translate(1147.50 614.57) scale(0.125)"><text x="0" y="0" font-family="Liberation Mono" font-size="38.40" font-weight="normal" fill="#111" stroke="#111" stroke-width="0.9" text-anchor="end" textLength="39.60" lengthAdjust="spacingAndGlyphs">4.0</text></g><g transform="translate(1147.50 564.43) scale(0.125)"><text x="0" y="0" font-family="Liberation Mono" font-size="38.40" font-weight="normal" fill="#111" stroke="#111" stroke-width="0.9" text-anchor="end" textLength="39.60" lengthAdjust="spacingAndGlyphs">6.0</text></g><g transform="translate(1147.50 514.30) scale(0.125)"><text x="0" y="0" font-family="Liberation Mono" font-size="38.40" font-weight="normal" fill="#111" stroke="#111" stroke-width="0.9" text-anchor="end" textLength="39.60" lengthAdjust="spacingAndGlyphs">8.0</text></g><g transform="translate(1166.10 667.40) scale(0.125)"><text x="0" y="0" font-family="Liberation Mono" font-size="30.40" font-weight="normal" fill="#111" stroke="#111" stroke-width="0.9" text-anchor="middle" textLength="116.48" lengthAdjust="spacingAndGlyphs">Feb 2020</text></g><g transform="translate(1191.10 667.40) scale(0.125)"><text x="0" y="0" font-family="Liberation Mono" font-size="30.40" font-weight="normal" fill="#111" stroke="#111" stroke-width="0.9" text-anchor="middle" textLength="116.48" lengthAdjust="spacingAndGlyphs">Mar 2020</text></g><g transform="translate(1216.10 667.40) scale(0.125)"><text x="0" y="0" font-family="Liberation Mono" font-size="30.40" font-weight="normal" fill="#111" stroke="#111" stroke-width="0.9" text-anchor="middle" textLength="116.48" lengthAdjust="spacingAndGlyphs">Apr 2020</text></g><g transform="translate(1241.10 667.40) scale(0.125)"><text x="0" y="0" font-family="Liberation Mono" font-size="30.40" font-weight="normal" fill="#111" stroke="#111" stroke-width="0.9" text-anchor="middle" textLength="116.48" lengthAdjust="spacingAndGlyphs">May 2020</text></g><g transform="translate(1266.10 667.40) scale(0.125)"><text x="0" y="0" font-family="Liberation Mono" font-size="30.40" font-weight="normal" fill="#111" stroke="#111" stroke-width="0.9" text-anchor="middle" textLength="116.48" lengthAdjust="spacingAndGlyphs">Jun 2020</text></g><g transform="translate(1291.10 667.40) scale(0.125)"><text x="0" y="0" font-family="Liberation Mono" font-size="30.40" font-weight="normal" fill="#111" stroke="#111" stroke-width="0.9" text-anchor="middle" textLength="116.48" lengthAdjust="spacingAndGlyphs">Jul 2020</text></g><g transform="translate(1316.10 667.40) scale(0.125)"><text x="0" y="0" font-family="Liberation Mono" font-size="30.40" font-weight="normal" fill="#111" stroke="#111" stroke-width="0.9" text-anchor="middle" textLength="116.48" lengthAdjust="spacingAndGlyphs">Aug 2020</text></g><g transform="translate(1341.10 667.40) scale(0.125)"><text x="0" y="0" font-family="Liberation Mono" font-size="30.40" font-weight="normal" fill="#111" stroke="#111" stroke-width="0.9" text-anchor="middle" textLength="116.48" lengthAdjust="spacingAndGlyphs">Sep 2020</text></g><g transform="translate(1366.10 667.40) scale(0.125)"><text x="0" y="0" font-family="Liberation Mono" font-size="30.40" font-weight="normal" fill="#111" stroke="#111" stroke-width="0.9" text-anchor="middle" textLength="116.48" lengthAdjust="spacingAndGlyphs">Oct 2020</text></g><g transform="translate(1391.10 667.40) scale(0.125)"><text x="0" y="0" font-family="Liberation Mono" font-size="30.40" font-weight="normal" fill="#111" stroke="#111" stroke-width="0.9" text-anchor="middle" textLength="116.48" lengthAdjust="spacingAndGlyphs">Nov 2020</text></g><g transform="translate(1416.10 667.40) scale(0.125)"><text x="0" y="0" font-family="Liberation Mono" font-size="30.40" font-weight="normal" fill="#111" stroke="#111" stroke-width="0.9" text-anchor="middle" textLength="116.48" lengthAdjust="spacingAndGlyphs">Dec 2020</text></g><g transform="translate(1441.10 667.40) scale(0.125)"><text x="0" y="0" font-family="Liberation Mono" font-size="30.40" font-weight="normal" fill="#111" stroke="#111" stroke-width="0.9" text-anchor="middle" textLength="116.48" lengthAdjust="spacingAndGlyphs">Jan 2021</text></g><line x1="1150.8" y1="511.0" x2="1150.8" y2="664.4" stroke="#c8c8c8" stroke-width="1.3"/><line x1="1149.3" y1="663.4" x2="1454.5" y2="663.4" stroke="#c8c8c8" stroke-width="1.1"/><path d="M1149.3 511.0 l1.5 -1.8 l1.5 1.8 z" fill="#666"/><path d="M1454.5 661.9 l2 1.5 l-2 1.5 z" fill="#666"/><g transform="translate(1295.80 512.00) scale(0.125)"><text x="0" y="0" font-family="Liberation Mono" font-size="40.00" font-weight="normal" fill="#222" stroke="#222" stroke-width="0.9" text-anchor="middle" textLength="174.96" lengthAdjust="spacingAndGlyphs">Last Year</text></g><g transform="rotate(-90 1134.3 588.2)"><g transform="translate(1134.30 588.20) scale(0.125)"><text x="0" y="0" font-family="Liberation Mono" font-size="40.00" font-weight="normal" fill="#222" stroke="#222" stroke-width="0.9" text-anchor="middle" textLength="32.00" lengthAdjust="spacingAndGlyphs">ms</text></g></g><g transform="rotate(90 1458.0 525.0)"><g transform="translate(1458.00 525.00) scale(0.125)"><text x="0" y="0" font-family="Liberation Mono" font-size="20.80" font-weight="normal" fill="#ccc" stroke="#ccc" stroke-width="0.9" text-anchor="middle">RRDTOOL / TOBI OETIKER</text></g></g><rect x="1135.8" y="669.6" width="3.0" height="3.0" fill="#e03a1a"/><g transform="translate(1140.40 672.70) scale(0.125)"><text x="0" y="0" font-family="Liberation Mono" font-size="32.80" font-weight="normal" fill="#111" stroke="#111" stroke-width="0.9" text-anchor="start" textLength="50.40" lengthAdjust="spacingAndGlyphs">Avg</text></g><rect x="1135.8" y="673.8" width="3.0" height="3.0" fill="#3a5fc0"/><g transform="translate(1140.40 676.90) scale(0.125)"><text x="0" y="0" font-family="Liberation Mono" font-size="32.80" font-weight="normal" fill="#111" stroke="#111" stroke-width="0.9" text-anchor="start" textLength="285.60" lengthAdjust="spacingAndGlyphs">Last latency (ms)</text></g><g transform="translate(1135.80 681.10) scale(0.125)"><text x="0" y="0" font-family="Liberation Mono" font-size="32.80" font-weight="normal" fill="#111" stroke="#111" stroke-width="0.9" text-anchor="start" textLength="302.40" lengthAdjust="spacingAndGlyphs">Avg latency 5.3 ms</text></g>
<path d="M606.20 663.60 L606.90 663.60 L606.90 652.00 L608.00 652.00 L608.00 644.20 L609.60 644.20 L609.60 615.80 L611.70 615.80 L611.70 643.00 L613.20 643.00 L613.20 646.00 L614.90 646.00 L614.90 616.10 L616.90 616.10 L616.90 640.00 L618.10 640.00 L618.10 638.80 L620.20 638.80 L620.20 644.80 L622.00 644.80 L622.00 642.40 L624.40 642.40 L624.40 643.00 L627.40 643.00 L627.40 646.40 L631.10 646.40 L631.10 636.40 L632.60 636.40 L632.60 624.80 L634.70 624.80 L634.70 646.00 L636.50 646.00 L636.50 659.40 L638.30 659.40 L638.30 644.20 L640.20 644.20 L640.20 613.70 L642.00 613.70 L642.00 646.70 L643.50 646.70 L643.50 615.40 L645.60 615.40 L645.60 646.00 L647.40 646.00 L647.40 626.70 L649.20 626.70 L649.20 659.40 L651.30 659.40 L651.30 648.50 L652.50 648.50 L652.50 618.20 L654.50 618.20 L654.50 623.60 L656.20 623.60 L656.20 645.50 L658.30 645.50 L658.30 655.80 L660.20 655.80 L660.20 663.00 L661.50 663.00 L661.50 617.60 L663.40 617.60 L663.40 660.00 L665.50 660.00 L665.50 644.20 L666.70 644.20 L666.70 639.40 L668.50 639.40 L668.50 644.20 L670.30 644.20 L670.30 659.40 L672.10 659.40 L672.10 603.60 L674.50 603.60 L674.50 660.60 L675.80 660.60 L675.80 612.10 L678.20 612.10 L678.20 622.40 L680.00 622.40 L680.00 643.60 L681.80 643.60 L681.80 638.80 L683.30 638.80 L683.30 623.00 L685.50 623.00 L685.50 646.00 L686.90 646.00 L686.90 636.40 L688.50 636.40 L688.50 612.10 L690.30 612.10 L690.30 648.50 L692.10 648.50 L692.10 658.20 L693.30 658.20 L693.30 663.00 L695.20 663.00 L695.20 646.00 L698.80 646.00 L698.80 647.30 L700.60 647.30 L700.60 640.00 L701.30 640.00 L701.30 640.50 L702.60 640.50 L702.60 662.60 L704.60 662.60 L704.60 660.70 L706.60 660.70 L706.60 662.00 L707.90 662.00 L707.90 646.40 L709.60 646.40 L709.60 661.30 L711.90 661.30 L711.90 643.50 L713.20 643.50 L713.20 646.40 L715.20 646.40 L715.20 637.90 L717.20 637.90 L717.20 645.50 L722.50 645.50 L722.50 659.70 L724.10 659.70 L724.10 663.30 L726.10 663.30 L726.10 644.80 L728.10 644.80 L728.10 661.30 L729.40 661.30 L729.40 659.00 L731.10 659.00" fill="none" stroke="#5f80ca" stroke-width="1.0"/>
</svg></body></html>
